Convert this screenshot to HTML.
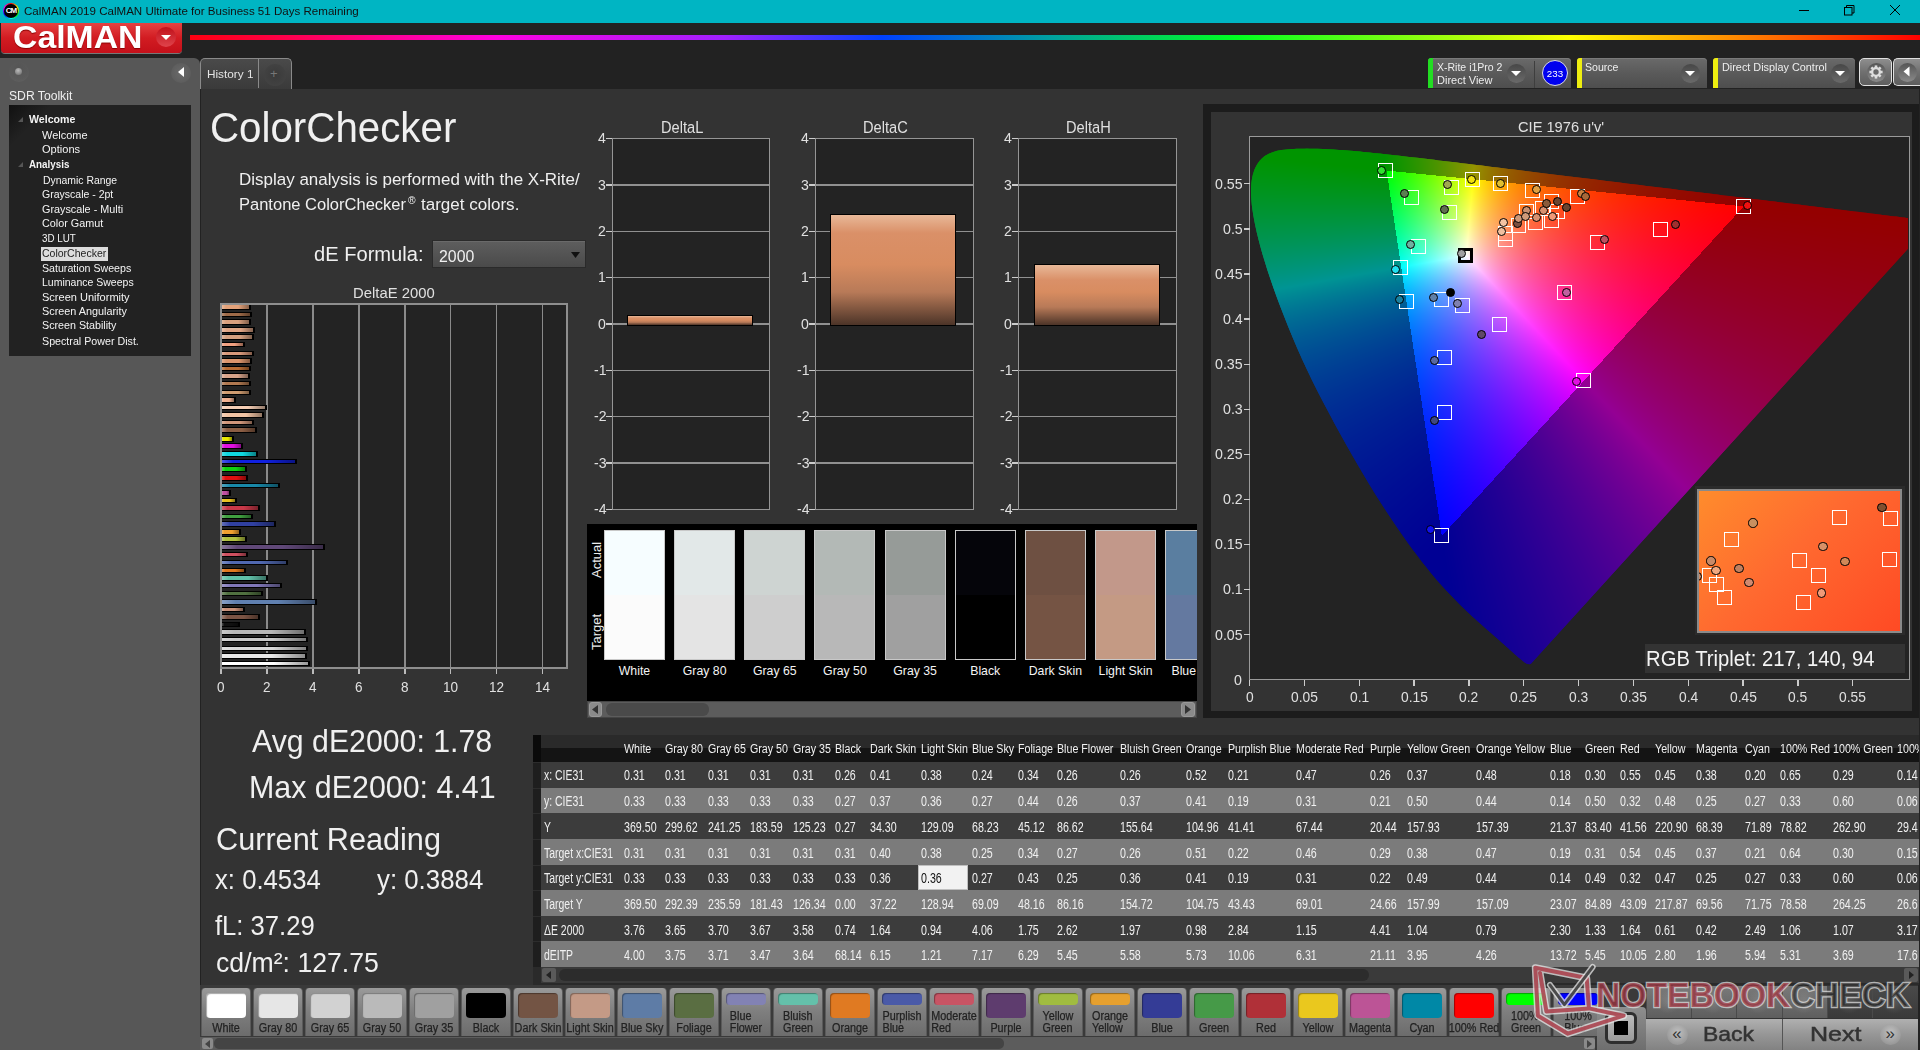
<!DOCTYPE html><html><head><meta charset='utf-8'><style>
*{box-sizing:border-box}
html,body{margin:0;padding:0}
body{width:1920px;height:1050px;overflow:hidden;position:relative;background:#222;font-family:"Liberation Sans",sans-serif;color:#eee}
.a{position:absolute}
.t{position:absolute;white-space:nowrap;line-height:1}
svg.hsf rect{width:10px;height:10px}
</style></head><body><div class="a" style="left:0px;top:0px;width:1920px;height:23px;background:#00b5c3"></div>
<div class="a" style="left:3px;top:3px;width:16px;height:16px;border-radius:50%;background:conic-gradient(#f00,#ff0,#0f0,#0ff,#00f,#f0f,#f00)"></div>
<div class="a" style="left:4px;top:4px;width:14px;height:14px;border-radius:50%;background:#000;color:#fff;font-size:8px;font-weight:bold;text-align:center;line-height:14px;letter-spacing:-1px">CM</div>
<div class="t" style="left:23.75px;top:6.02px;font-size:11.31px;color:#111;transform:scaleX(1.0234);transform-origin:0 0;">CalMAN 2019 CalMAN Ultimate for Business 51 Days Remaining</div>
<div class="a" style="left:1799px;top:10px;width:10px;height:1px;background:#000"></div>
<svg class="a" style="left:1844px;top:5px" width="11" height="11"><rect x="0.5" y="2.5" width="7.5" height="7.5" fill="none" stroke="#000"/><path d="M2.5 2.5V0.5h7.5v7.5h-2" fill="none" stroke="#000"/></svg>
<svg class="a" style="left:1889px;top:4px" width="12" height="12"><path d="M1 1L11 11M11 1L1 11" stroke="#000" stroke-width="1"/></svg>
<div class="a" style="left:0px;top:23px;width:1920px;height:35px;background:#222"></div>
<div class="a" style="left:1px;top:23px;width:181px;height:30px;background:linear-gradient(#e44242,#d21c22 50%,#c4101a);border-radius:0 0 4px 4px;box-shadow:0 1px 0 #777"></div>
<div class="t" style="left:13.10px;top:22.21px;font-size:30.59px;color:#fff;font-weight:bold;transform:scaleX(1.1039);transform-origin:0 0;text-shadow:0 1px 1px #800">CalMAN</div>
<div class="a" style="left:156px;top:27px;width:20px;height:20px;border-radius:50%;background:linear-gradient(#c0101a,#e0444c)"></div>
<svg class="a" style="left:160px;top:34px" width="12" height="8"><path d="M1 1h10L6 6z" fill="#fff"/></svg>
<div class="a" style="left:190px;top:35px;width:1730px;height:5px;background:linear-gradient(90deg,#ff0010 0%,#ff0040 4.6%,#ff00e0 17.7%,#a020ff 30.9%,#0040ff 40%,#00a0a0 49.7%,#00ff20 60.5%,#ffff00 79.8%,#ff8000 90%,#ff0000 100%)"></div>
<div class="a" style="left:0px;top:58px;width:200px;height:992px;background:#575757;border-radius:0 6px 0 0"></div>
<div class="a" style="left:9px;top:62px;width:20px;height:20px;border-radius:50%;background:radial-gradient(circle at 50% 30%,#555 0,#5a5a5a 60%,#626262 100%)"></div>
<div class="a" style="left:15px;top:68px;width:7px;height:7px;border-radius:50%;background:radial-gradient(circle at 45% 35%,#bbb,#666)"></div>
<div class="a" style="left:171px;top:63px;width:20px;height:20px;border-radius:50%;background:radial-gradient(circle,#6a6a6a,#585858)"></div>
<svg class="a" style="left:177px;top:66px" width="8" height="12"><path d="M7 1V11L1 6z" fill="#fff"/></svg>
<div class="t" style="left:9.20px;top:90.31px;font-size:12.15px;color:#eee;transform:scaleX(1.0009);transform-origin:0 0;">SDR Toolkit</div>
<div class="a" style="left:9px;top:105px;width:182px;height:251px;background:linear-gradient(135deg,#111 0,#222 30px,#222 100%)"></div>
<div class="t" style="left:29.10px;top:115.25px;font-size:10.34px;color:#f4f4f4;font-weight:bold;transform:scaleX(1.0268);transform-origin:0 0;">Welcome</div>
<div class="t" style="left:42.10px;top:131.15px;font-size:10.34px;color:#f4f4f4;transform:scaleX(1.0632);transform-origin:0 0;">Welcome</div>
<div class="t" style="left:42.00px;top:144.85px;font-size:10.34px;color:#f4f4f4;transform:scaleX(1.0693);transform-origin:0 0;">Options</div>
<div class="t" style="left:29.00px;top:160.05px;font-size:10.34px;color:#f4f4f4;font-weight:bold;transform:scaleX(0.9505);transform-origin:0 0;">Analysis</div>
<div class="t" style="left:42.50px;top:175.85px;font-size:10.34px;color:#f4f4f4;transform:scaleX(1.0090);transform-origin:0 0;">Dynamic Range</div>
<div class="t" style="left:42.30px;top:189.85px;font-size:10.34px;color:#f4f4f4;transform:scaleX(1.0175);transform-origin:0 0;">Grayscale - 2pt</div>
<div class="t" style="left:42.30px;top:204.85px;font-size:10.34px;color:#f4f4f4;transform:scaleX(1.0459);transform-origin:0 0;">Grayscale - Multi</div>
<div class="t" style="left:42.30px;top:219.45px;font-size:10.34px;color:#f4f4f4;transform:scaleX(1.0465);transform-origin:0 0;">Color Gamut</div>
<div class="t" style="left:42.30px;top:233.75px;font-size:10.34px;color:#f4f4f4;transform:scaleX(0.9493);transform-origin:0 0;">3D LUT</div>
<div class="a" style="left:41px;top:247px;width:67px;height:14px;background:#dcdcdc"></div>
<div class="t" style="left:42.30px;top:248.95px;font-size:10.34px;color:#222;transform:scaleX(1.0178);transform-origin:0 0;">ColorChecker</div>
<div class="t" style="left:42.30px;top:263.65px;font-size:10.34px;color:#f4f4f4;transform:scaleX(1.0292);transform-origin:0 0;">Saturation Sweeps</div>
<div class="t" style="left:42.30px;top:277.95px;font-size:10.34px;color:#f4f4f4;transform:scaleX(1.0166);transform-origin:0 0;">Luminance Sweeps</div>
<div class="t" style="left:42.30px;top:292.55px;font-size:10.34px;color:#f4f4f4;transform:scaleX(1.0677);transform-origin:0 0;">Screen Uniformity</div>
<div class="t" style="left:42.30px;top:307.15px;font-size:10.34px;color:#f4f4f4;transform:scaleX(1.0494);transform-origin:0 0;">Screen Angularity</div>
<div class="t" style="left:42.30px;top:321.45px;font-size:10.34px;color:#f4f4f4;transform:scaleX(1.0362);transform-origin:0 0;">Screen Stability</div>
<div class="t" style="left:42.30px;top:336.75px;font-size:10.34px;color:#f4f4f4;transform:scaleX(1.0348);transform-origin:0 0;">Spectral Power Dist.</div>
<svg class="a" style="left:18px;top:117px" width="6" height="6"><path d="M5 0V5H0z" fill="#555"/></svg>
<svg class="a" style="left:18px;top:162px" width="6" height="6"><path d="M5 0V5H0z" fill="#555"/></svg>
<div class="a" style="left:200px;top:58px;width:92px;height:31px;background:linear-gradient(#4a4a4a,#3a3a3a);border:1px solid #8a8a8a;border-bottom:none;border-radius:5px 5px 0 0"></div>
<div class="a" style="left:258px;top:59px;width:1px;height:29px;background:#8a8a8a"></div>
<div class="a" style="left:264px;top:64px;width:22px;height:22px;border-radius:50%;background:radial-gradient(circle,#3a3a3a,#454545)"></div>
<div class="t" style="left:206.50px;top:68.51px;font-size:11.45px;color:#e4e4e4;transform:scaleX(1.0292);transform-origin:0 0;">History 1</div>
<div class="t" style="left:270px;top:67px;font-size:13px;color:#777;">+</div>
<div class="a" style="left:201px;top:89px;width:1718px;height:961px;background:#333"></div>
<div class="t" style="left:209.60px;top:106.37px;font-size:43.16px;color:#f0f0f0;transform:scaleX(0.9337);transform-origin:0 0;">ColorChecker</div>
<div class="t" style="left:239.40px;top:171.18px;font-size:17.04px;color:#f0f0f0;transform:scaleX(0.9971);transform-origin:0 0;">Display analysis is performed with the X-Rite/</div>
<div class="t" style="left:239.40px;top:195.58px;font-size:17.04px;color:#f0f0f0;transform:scaleX(0.9693);transform-origin:0 0;">Pantone ColorChecker</div>
<div class="t" style="left:408.00px;top:195.53px;font-size:10.47px;color:#f0f0f0;transform:scaleX(0.9838);transform-origin:0 0;">&reg;</div>
<div class="t" style="left:421.30px;top:195.58px;font-size:17.04px;color:#f0f0f0;transform:scaleX(0.9991);transform-origin:0 0;">target colors.</div>
<div class="t" style="left:314.40px;top:244.93px;font-size:19.69px;color:#f0f0f0;transform:scaleX(1.0217);transform-origin:0 0;">dE Formula:</div>
<div class="a" style="left:432px;top:240px;width:154px;height:28px;background:linear-gradient(#5e5e5e,#4a4a4a);border:1px solid #2a2a2a;box-shadow:inset 0 1px 0 #6a6a6a"></div>
<div class="t" style="left:438.50px;top:248.08px;font-size:17.04px;color:#f0f0f0;transform:scaleX(0.9311);transform-origin:0 0;">2000</div>
<svg class="a" style="left:571px;top:252px" width="9" height="6"><path d="M0 0h9L4.5 6z" fill="#111"/></svg>
<div class="t" style="left:353.20px;top:285.00px;font-size:15.36px;color:#e0e0e0;transform:scaleX(0.9660);transform-origin:0 0;">DeltaE 2000</div>
<div class="a" style="left:220px;top:303px;width:348px;height:366px;background:#232323"></div>
<div class="a" style="left:266.19px;top:304px;width:1.5px;height:364px;background:#8a8a8a"></div>
<div class="a" style="left:312.13px;top:304px;width:1.5px;height:364px;background:#8a8a8a"></div>
<div class="a" style="left:358.07px;top:304px;width:1.5px;height:364px;background:#8a8a8a"></div>
<div class="a" style="left:404.01px;top:304px;width:1.5px;height:364px;background:#8a8a8a"></div>
<div class="a" style="left:449.95px;top:304px;width:1.5px;height:364px;background:#8a8a8a"></div>
<div class="a" style="left:495.89px;top:304px;width:1.5px;height:364px;background:#8a8a8a"></div>
<div class="a" style="left:541.83px;top:304px;width:1.5px;height:364px;background:#8a8a8a"></div>
<div class="a" style="left:220.25px;top:668px;width:1.5px;height:6px;background:#bbb"></div>
<div class="t" style="left:217.24px;top:679.74px;font-size:14.25px;color:#e0e0e0;transform:scaleX(0.9500);transform-origin:0 0">0</div>
<div class="a" style="left:266.19px;top:668px;width:1.5px;height:6px;background:#bbb"></div>
<div class="t" style="left:263.18px;top:679.74px;font-size:14.25px;color:#e0e0e0;transform:scaleX(0.9500);transform-origin:0 0">2</div>
<div class="a" style="left:312.13px;top:668px;width:1.5px;height:6px;background:#bbb"></div>
<div class="t" style="left:309.12px;top:679.74px;font-size:14.25px;color:#e0e0e0;transform:scaleX(0.9500);transform-origin:0 0">4</div>
<div class="a" style="left:358.07px;top:668px;width:1.5px;height:6px;background:#bbb"></div>
<div class="t" style="left:355.06px;top:679.74px;font-size:14.25px;color:#e0e0e0;transform:scaleX(0.9500);transform-origin:0 0">6</div>
<div class="a" style="left:404.01px;top:668px;width:1.5px;height:6px;background:#bbb"></div>
<div class="t" style="left:401.00px;top:679.74px;font-size:14.25px;color:#e0e0e0;transform:scaleX(0.9500);transform-origin:0 0">8</div>
<div class="a" style="left:449.95px;top:668px;width:1.5px;height:6px;background:#bbb"></div>
<div class="t" style="left:443.17px;top:679.74px;font-size:14.25px;color:#e0e0e0;transform:scaleX(0.9500);transform-origin:0 0">10</div>
<div class="a" style="left:495.89px;top:668px;width:1.5px;height:6px;background:#bbb"></div>
<div class="t" style="left:489.11px;top:679.74px;font-size:14.25px;color:#e0e0e0;transform:scaleX(0.9500);transform-origin:0 0">12</div>
<div class="a" style="left:541.83px;top:668px;width:1.5px;height:6px;background:#bbb"></div>
<div class="t" style="left:535.05px;top:679.74px;font-size:14.25px;color:#e0e0e0;transform:scaleX(0.9500);transform-origin:0 0">14</div>
<div class="a" style="left:222px;top:304.46px;width:29.3px;height:5.5px;background:#000"></div>
<div class="a" style="left:222px;top:305.46px;width:27.3px;height:3.5px;background:#e3a27a"><div style="position:absolute;inset:0;background:linear-gradient(90deg,rgba(255,255,255,.25),rgba(255,255,255,0) 15%,rgba(0,0,0,0) 60%,rgba(0,0,0,.4))"></div></div>
<div class="a" style="left:222px;top:311.84px;width:30.4px;height:5.5px;background:#000"></div>
<div class="a" style="left:222px;top:312.84px;width:28.4px;height:3.5px;background:#9e6a48"><div style="position:absolute;inset:0;background:linear-gradient(90deg,rgba(255,255,255,.25),rgba(255,255,255,0) 15%,rgba(0,0,0,0) 60%,rgba(0,0,0,.4))"></div></div>
<div class="a" style="left:222px;top:319.22px;width:29.3px;height:5.5px;background:#000"></div>
<div class="a" style="left:222px;top:320.22px;width:27.3px;height:3.5px;background:#d9a07e"><div style="position:absolute;inset:0;background:linear-gradient(90deg,rgba(255,255,255,.25),rgba(255,255,255,0) 15%,rgba(0,0,0,0) 60%,rgba(0,0,0,.4))"></div></div>
<div class="a" style="left:222px;top:327.00px;width:33.4px;height:5.5px;background:#000"></div>
<div class="a" style="left:222px;top:328.00px;width:31.4px;height:3.5px;background:#dfa585"><div style="position:absolute;inset:0;background:linear-gradient(90deg,rgba(255,255,255,.25),rgba(255,255,255,0) 15%,rgba(0,0,0,0) 60%,rgba(0,0,0,.4))"></div></div>
<div class="a" style="left:222px;top:334.38px;width:32.0px;height:5.5px;background:#000"></div>
<div class="a" style="left:222px;top:335.38px;width:30.0px;height:3.5px;background:#d4a080"><div style="position:absolute;inset:0;background:linear-gradient(90deg,rgba(255,255,255,.25),rgba(255,255,255,0) 15%,rgba(0,0,0,0) 60%,rgba(0,0,0,.4))"></div></div>
<div class="a" style="left:222px;top:341.76px;width:23.1px;height:5.5px;background:#000"></div>
<div class="a" style="left:222px;top:342.76px;width:21.1px;height:3.5px;background:#f2a080"><div style="position:absolute;inset:0;background:linear-gradient(90deg,rgba(255,255,255,.25),rgba(255,255,255,0) 15%,rgba(0,0,0,0) 60%,rgba(0,0,0,.4))"></div></div>
<div class="a" style="left:222px;top:350.77px;width:32.0px;height:5.5px;background:#000"></div>
<div class="a" style="left:222px;top:351.77px;width:30.0px;height:3.5px;background:#d8987a"><div style="position:absolute;inset:0;background:linear-gradient(90deg,rgba(255,255,255,.25),rgba(255,255,255,0) 15%,rgba(0,0,0,0) 60%,rgba(0,0,0,.4))"></div></div>
<div class="a" style="left:222px;top:358.15px;width:30.2px;height:5.5px;background:#000"></div>
<div class="a" style="left:222px;top:359.15px;width:28.2px;height:3.5px;background:#dc956c"><div style="position:absolute;inset:0;background:linear-gradient(90deg,rgba(255,255,255,.25),rgba(255,255,255,0) 15%,rgba(0,0,0,0) 60%,rgba(0,0,0,.4))"></div></div>
<div class="a" style="left:222px;top:365.53px;width:29.3px;height:5.5px;background:#000"></div>
<div class="a" style="left:222px;top:366.53px;width:27.3px;height:3.5px;background:#b86c34"><div style="position:absolute;inset:0;background:linear-gradient(90deg,rgba(255,255,255,.25),rgba(255,255,255,0) 15%,rgba(0,0,0,0) 60%,rgba(0,0,0,.4))"></div></div>
<div class="a" style="left:222px;top:373.32px;width:28.1px;height:5.5px;background:#000"></div>
<div class="a" style="left:222px;top:374.32px;width:26.1px;height:3.5px;background:#d8a48a"><div style="position:absolute;inset:0;background:linear-gradient(90deg,rgba(255,255,255,.25),rgba(255,255,255,0) 15%,rgba(0,0,0,0) 60%,rgba(0,0,0,.4))"></div></div>
<div class="a" style="left:222px;top:380.69px;width:29.3px;height:5.5px;background:#000"></div>
<div class="a" style="left:222px;top:381.69px;width:27.3px;height:3.5px;background:#b07850"><div style="position:absolute;inset:0;background:linear-gradient(90deg,rgba(255,255,255,.25),rgba(255,255,255,0) 15%,rgba(0,0,0,0) 60%,rgba(0,0,0,.4))"></div></div>
<div class="a" style="left:222px;top:389.71px;width:29.3px;height:5.5px;background:#000"></div>
<div class="a" style="left:222px;top:390.71px;width:27.3px;height:3.5px;background:#d09c70"><div style="position:absolute;inset:0;background:linear-gradient(90deg,rgba(255,255,255,.25),rgba(255,255,255,0) 15%,rgba(0,0,0,0) 60%,rgba(0,0,0,.4))"></div></div>
<div class="a" style="left:222px;top:397.09px;width:14.1px;height:5.5px;background:#000"></div>
<div class="a" style="left:222px;top:398.09px;width:12.1px;height:3.5px;background:#f0b090"><div style="position:absolute;inset:0;background:linear-gradient(90deg,rgba(255,255,255,.25),rgba(255,255,255,0) 15%,rgba(0,0,0,0) 60%,rgba(0,0,0,.4))"></div></div>
<div class="a" style="left:222px;top:404.87px;width:44.9px;height:5.5px;background:#000"></div>
<div class="a" style="left:222px;top:405.87px;width:42.9px;height:3.5px;background:#f4cdb4"><div style="position:absolute;inset:0;background:linear-gradient(90deg,rgba(255,255,255,.25),rgba(255,255,255,0) 15%,rgba(0,0,0,0) 60%,rgba(0,0,0,.4))"></div></div>
<div class="a" style="left:222px;top:412.25px;width:41.9px;height:5.5px;background:#000"></div>
<div class="a" style="left:222px;top:413.25px;width:39.9px;height:3.5px;background:#f2c4a4"><div style="position:absolute;inset:0;background:linear-gradient(90deg,rgba(255,255,255,.25),rgba(255,255,255,0) 15%,rgba(0,0,0,0) 60%,rgba(0,0,0,.4))"></div></div>
<div class="a" style="left:222px;top:419.63px;width:32.0px;height:5.5px;background:#000"></div>
<div class="a" style="left:222px;top:420.63px;width:30.0px;height:3.5px;background:#d0967a"><div style="position:absolute;inset:0;background:linear-gradient(90deg,rgba(255,255,255,.25),rgba(255,255,255,0) 15%,rgba(0,0,0,0) 60%,rgba(0,0,0,.4))"></div></div>
<div class="a" style="left:222px;top:427.00px;width:35.2px;height:5.5px;background:#000"></div>
<div class="a" style="left:222px;top:428.00px;width:33.2px;height:3.5px;background:#8c5e44"><div style="position:absolute;inset:0;background:linear-gradient(90deg,rgba(255,255,255,.25),rgba(255,255,255,0) 15%,rgba(0,0,0,0) 60%,rgba(0,0,0,.4))"></div></div>
<div class="a" style="left:222px;top:436.02px;width:12.0px;height:5.5px;background:#000"></div>
<div class="a" style="left:222px;top:437.02px;width:10.0px;height:3.5px;background:#e8e800"><div style="position:absolute;inset:0;background:linear-gradient(90deg,rgba(255,255,255,.25),rgba(255,255,255,0) 15%,rgba(0,0,0,0) 60%,rgba(0,0,0,.4))"></div></div>
<div class="a" style="left:222px;top:443.40px;width:21.2px;height:5.5px;background:#000"></div>
<div class="a" style="left:222px;top:444.40px;width:19.2px;height:3.5px;background:#e010e0"><div style="position:absolute;inset:0;background:linear-gradient(90deg,rgba(255,255,255,.25),rgba(255,255,255,0) 15%,rgba(0,0,0,0) 60%,rgba(0,0,0,.4))"></div></div>
<div class="a" style="left:222px;top:451.18px;width:35.9px;height:5.5px;background:#000"></div>
<div class="a" style="left:222px;top:452.18px;width:33.9px;height:3.5px;background:#10d8e0"><div style="position:absolute;inset:0;background:linear-gradient(90deg,rgba(255,255,255,.25),rgba(255,255,255,0) 15%,rgba(0,0,0,0) 60%,rgba(0,0,0,.4))"></div></div>
<div class="a" style="left:222px;top:458.97px;width:74.5px;height:5.5px;background:#000"></div>
<div class="a" style="left:222px;top:459.97px;width:72.5px;height:3.5px;background:#1020e0"><div style="position:absolute;inset:0;background:linear-gradient(90deg,rgba(255,255,255,.25),rgba(255,255,255,0) 15%,rgba(0,0,0,0) 60%,rgba(0,0,0,.4))"></div></div>
<div class="a" style="left:222px;top:466.35px;width:25.3px;height:5.5px;background:#000"></div>
<div class="a" style="left:222px;top:467.35px;width:23.3px;height:3.5px;background:#10d010"><div style="position:absolute;inset:0;background:linear-gradient(90deg,rgba(255,255,255,.25),rgba(255,255,255,0) 15%,rgba(0,0,0,0) 60%,rgba(0,0,0,.4))"></div></div>
<div class="a" style="left:222px;top:475.36px;width:25.6px;height:5.5px;background:#000"></div>
<div class="a" style="left:222px;top:476.36px;width:23.6px;height:3.5px;background:#e01010"><div style="position:absolute;inset:0;background:linear-gradient(90deg,rgba(255,255,255,.25),rgba(255,255,255,0) 15%,rgba(0,0,0,0) 60%,rgba(0,0,0,.4))"></div></div>
<div class="a" style="left:222px;top:482.74px;width:57.5px;height:5.5px;background:#000"></div>
<div class="a" style="left:222px;top:483.74px;width:55.5px;height:3.5px;background:#1888a8"><div style="position:absolute;inset:0;background:linear-gradient(90deg,rgba(255,255,255,.25),rgba(255,255,255,0) 15%,rgba(0,0,0,0) 60%,rgba(0,0,0,.4))"></div></div>
<div class="a" style="left:222px;top:490.12px;width:8.8px;height:5.5px;background:#000"></div>
<div class="a" style="left:222px;top:491.12px;width:6.8px;height:3.5px;background:#c050a0"><div style="position:absolute;inset:0;background:linear-gradient(90deg,rgba(255,255,255,.25),rgba(255,255,255,0) 15%,rgba(0,0,0,0) 60%,rgba(0,0,0,.4))"></div></div>
<div class="a" style="left:222px;top:497.91px;width:15.2px;height:5.5px;background:#000"></div>
<div class="a" style="left:222px;top:498.91px;width:13.2px;height:3.5px;background:#e8c020"><div style="position:absolute;inset:0;background:linear-gradient(90deg,rgba(255,255,255,.25),rgba(255,255,255,0) 15%,rgba(0,0,0,0) 60%,rgba(0,0,0,.4))"></div></div>
<div class="a" style="left:222px;top:505.28px;width:38.2px;height:5.5px;background:#000"></div>
<div class="a" style="left:222px;top:506.28px;width:36.2px;height:3.5px;background:#c83848"><div style="position:absolute;inset:0;background:linear-gradient(90deg,rgba(255,255,255,.25),rgba(255,255,255,0) 15%,rgba(0,0,0,0) 60%,rgba(0,0,0,.4))"></div></div>
<div class="a" style="left:222px;top:513.89px;width:30.6px;height:5.5px;background:#000"></div>
<div class="a" style="left:222px;top:514.89px;width:28.6px;height:3.5px;background:#40a040"><div style="position:absolute;inset:0;background:linear-gradient(90deg,rgba(255,255,255,.25),rgba(255,255,255,0) 15%,rgba(0,0,0,0) 60%,rgba(0,0,0,.4))"></div></div>
<div class="a" style="left:222px;top:521.27px;width:53.8px;height:5.5px;background:#000"></div>
<div class="a" style="left:222px;top:522.27px;width:51.8px;height:3.5px;background:#3040a0"><div style="position:absolute;inset:0;background:linear-gradient(90deg,rgba(255,255,255,.25),rgba(255,255,255,0) 15%,rgba(0,0,0,0) 60%,rgba(0,0,0,.4))"></div></div>
<div class="a" style="left:222px;top:529.05px;width:19.4px;height:5.5px;background:#000"></div>
<div class="a" style="left:222px;top:530.05px;width:17.4px;height:3.5px;background:#f0a030"><div style="position:absolute;inset:0;background:linear-gradient(90deg,rgba(255,255,255,.25),rgba(255,255,255,0) 15%,rgba(0,0,0,0) 60%,rgba(0,0,0,.4))"></div></div>
<div class="a" style="left:222px;top:536.43px;width:25.3px;height:5.5px;background:#000"></div>
<div class="a" style="left:222px;top:537.43px;width:23.3px;height:3.5px;background:#b0c040"><div style="position:absolute;inset:0;background:linear-gradient(90deg,rgba(255,255,255,.25),rgba(255,255,255,0) 15%,rgba(0,0,0,0) 60%,rgba(0,0,0,.4))"></div></div>
<div class="a" style="left:222px;top:544.22px;width:103.0px;height:5.5px;background:#000"></div>
<div class="a" style="left:222px;top:545.22px;width:101.0px;height:3.5px;background:#604878"><div style="position:absolute;inset:0;background:linear-gradient(90deg,rgba(255,255,255,.25),rgba(255,255,255,0) 15%,rgba(0,0,0,0) 60%,rgba(0,0,0,.4))"></div></div>
<div class="a" style="left:222px;top:551.59px;width:26.3px;height:5.5px;background:#000"></div>
<div class="a" style="left:222px;top:552.59px;width:24.3px;height:3.5px;background:#d05060"><div style="position:absolute;inset:0;background:linear-gradient(90deg,rgba(255,255,255,.25),rgba(255,255,255,0) 15%,rgba(0,0,0,0) 60%,rgba(0,0,0,.4))"></div></div>
<div class="a" style="left:222px;top:559.79px;width:66.0px;height:5.5px;background:#000"></div>
<div class="a" style="left:222px;top:560.79px;width:64.0px;height:3.5px;background:#5068b0"><div style="position:absolute;inset:0;background:linear-gradient(90deg,rgba(255,255,255,.25),rgba(255,255,255,0) 15%,rgba(0,0,0,0) 60%,rgba(0,0,0,.4))"></div></div>
<div class="a" style="left:222px;top:567.99px;width:23.7px;height:5.5px;background:#000"></div>
<div class="a" style="left:222px;top:568.99px;width:21.7px;height:3.5px;background:#e07820"><div style="position:absolute;inset:0;background:linear-gradient(90deg,rgba(255,255,255,.25),rgba(255,255,255,0) 15%,rgba(0,0,0,0) 60%,rgba(0,0,0,.4))"></div></div>
<div class="a" style="left:222px;top:575.36px;width:46.0px;height:5.5px;background:#000"></div>
<div class="a" style="left:222px;top:576.36px;width:44.0px;height:3.5px;background:#60c0a8"><div style="position:absolute;inset:0;background:linear-gradient(90deg,rgba(255,255,255,.25),rgba(255,255,255,0) 15%,rgba(0,0,0,0) 60%,rgba(0,0,0,.4))"></div></div>
<div class="a" style="left:222px;top:582.74px;width:60.3px;height:5.5px;background:#000"></div>
<div class="a" style="left:222px;top:583.74px;width:58.3px;height:3.5px;background:#8078b8"><div style="position:absolute;inset:0;background:linear-gradient(90deg,rgba(255,255,255,.25),rgba(255,255,255,0) 15%,rgba(0,0,0,0) 60%,rgba(0,0,0,.4))"></div></div>
<div class="a" style="left:222px;top:590.53px;width:40.7px;height:5.5px;background:#000"></div>
<div class="a" style="left:222px;top:591.53px;width:38.7px;height:3.5px;background:#507040"><div style="position:absolute;inset:0;background:linear-gradient(90deg,rgba(255,255,255,.25),rgba(255,255,255,0) 15%,rgba(0,0,0,0) 60%,rgba(0,0,0,.4))"></div></div>
<div class="a" style="left:222px;top:599.14px;width:94.5px;height:5.5px;background:#000"></div>
<div class="a" style="left:222px;top:600.14px;width:92.5px;height:3.5px;background:#6080b0"><div style="position:absolute;inset:0;background:linear-gradient(90deg,rgba(255,255,255,.25),rgba(255,255,255,0) 15%,rgba(0,0,0,0) 60%,rgba(0,0,0,.4))"></div></div>
<div class="a" style="left:222px;top:606.92px;width:23.3px;height:5.5px;background:#000"></div>
<div class="a" style="left:222px;top:607.92px;width:21.3px;height:3.5px;background:#c89078"><div style="position:absolute;inset:0;background:linear-gradient(90deg,rgba(255,255,255,.25),rgba(255,255,255,0) 15%,rgba(0,0,0,0) 60%,rgba(0,0,0,.4))"></div></div>
<div class="a" style="left:222px;top:614.30px;width:37.8px;height:5.5px;background:#000"></div>
<div class="a" style="left:222px;top:615.30px;width:35.8px;height:3.5px;background:#7c5444"><div style="position:absolute;inset:0;background:linear-gradient(90deg,rgba(255,255,255,.25),rgba(255,255,255,0) 15%,rgba(0,0,0,0) 60%,rgba(0,0,0,.4))"></div></div>
<div class="a" style="left:222px;top:621.68px;width:17.5px;height:5.5px;background:#000"></div>
<div class="a" style="left:222px;top:622.68px;width:15.5px;height:3.5px;background:#101010"><div style="position:absolute;inset:0;background:linear-gradient(90deg,rgba(255,255,255,.25),rgba(255,255,255,0) 15%,rgba(0,0,0,0) 60%,rgba(0,0,0,.4))"></div></div>
<div class="a" style="left:222px;top:629.46px;width:83.7px;height:5.5px;background:#000"></div>
<div class="a" style="left:222px;top:630.46px;width:81.7px;height:3.5px;background:#b8b8b8"><div style="position:absolute;inset:0;background:linear-gradient(90deg,rgba(255,255,255,.25),rgba(255,255,255,0) 15%,rgba(0,0,0,0) 60%,rgba(0,0,0,.4))"></div></div>
<div class="a" style="left:222px;top:636.84px;width:86.0px;height:5.5px;background:#000"></div>
<div class="a" style="left:222px;top:637.84px;width:84.0px;height:3.5px;background:#c8c8c8"><div style="position:absolute;inset:0;background:linear-gradient(90deg,rgba(255,255,255,.25),rgba(255,255,255,0) 15%,rgba(0,0,0,0) 60%,rgba(0,0,0,.4))"></div></div>
<div class="a" style="left:222px;top:645.86px;width:86.0px;height:5.5px;background:#000"></div>
<div class="a" style="left:222px;top:646.86px;width:84.0px;height:3.5px;background:#d8d8d8"><div style="position:absolute;inset:0;background:linear-gradient(90deg,rgba(255,255,255,.25),rgba(255,255,255,0) 15%,rgba(0,0,0,0) 60%,rgba(0,0,0,.4))"></div></div>
<div class="a" style="left:222px;top:653.23px;width:84.6px;height:5.5px;background:#000"></div>
<div class="a" style="left:222px;top:654.23px;width:82.6px;height:3.5px;background:#e8e8e8"><div style="position:absolute;inset:0;background:linear-gradient(90deg,rgba(255,255,255,.25),rgba(255,255,255,0) 15%,rgba(0,0,0,0) 60%,rgba(0,0,0,.4))"></div></div>
<div class="a" style="left:222px;top:660.61px;width:87.8px;height:5.5px;background:#000"></div>
<div class="a" style="left:222px;top:661.61px;width:85.8px;height:3.5px;background:#ffffff"><div style="position:absolute;inset:0;background:linear-gradient(90deg,rgba(255,255,255,.25),rgba(255,255,255,0) 15%,rgba(0,0,0,0) 60%,rgba(0,0,0,.4))"></div></div>
<div class="a" style="left:220px;top:303px;width:348px;height:366px;border:2px solid #8e8e8e"></div>
<div class="t" style="left:660.63px;top:119.72px;font-size:15.92px;color:#e0e0e0;transform:scaleX(0.9200);transform-origin:0 0">DeltaL</div>
<div class="a" style="left:612px;top:138px;width:158px;height:372px;background:#232323;border:1px solid #959595"></div>
<div class="a" style="left:612px;top:184.30px;width:157px;height:1.4px;background:#909090"></div>
<div class="a" style="left:612px;top:230.60px;width:157px;height:1.4px;background:#909090"></div>
<div class="a" style="left:612px;top:277.00px;width:157px;height:1.4px;background:#909090"></div>
<div class="a" style="left:612px;top:323.30px;width:157px;height:1.4px;background:#909090"></div>
<div class="a" style="left:612px;top:369.70px;width:157px;height:1.4px;background:#909090"></div>
<div class="a" style="left:612px;top:416.00px;width:157px;height:1.4px;background:#909090"></div>
<div class="a" style="left:612px;top:462.30px;width:157px;height:1.4px;background:#909090"></div>
<div class="a" style="left:606px;top:138.00px;width:6px;height:1.4px;background:#ccc"></div>
<div class="t" style="left:598.39px;top:131.47px;font-size:14.80px;color:#e0e0e0;transform:scaleX(0.9500);transform-origin:0 0">4</div>
<div class="a" style="left:606px;top:184.30px;width:6px;height:1.4px;background:#ccc"></div>
<div class="t" style="left:598.39px;top:177.77px;font-size:14.80px;color:#e0e0e0;transform:scaleX(0.9500);transform-origin:0 0">3</div>
<div class="a" style="left:606px;top:230.60px;width:6px;height:1.4px;background:#ccc"></div>
<div class="t" style="left:598.39px;top:224.07px;font-size:14.80px;color:#e0e0e0;transform:scaleX(0.9500);transform-origin:0 0">2</div>
<div class="a" style="left:606px;top:277.00px;width:6px;height:1.4px;background:#ccc"></div>
<div class="t" style="left:598.39px;top:270.47px;font-size:14.80px;color:#e0e0e0;transform:scaleX(0.9500);transform-origin:0 0">1</div>
<div class="a" style="left:606px;top:323.30px;width:6px;height:1.4px;background:#ccc"></div>
<div class="t" style="left:598.39px;top:316.77px;font-size:14.80px;color:#e0e0e0;transform:scaleX(0.9500);transform-origin:0 0">0</div>
<div class="a" style="left:606px;top:369.70px;width:6px;height:1.4px;background:#ccc"></div>
<div class="t" style="left:593.68px;top:363.17px;font-size:14.80px;color:#e0e0e0;transform:scaleX(0.9500);transform-origin:0 0">-1</div>
<div class="a" style="left:606px;top:416.00px;width:6px;height:1.4px;background:#ccc"></div>
<div class="t" style="left:593.68px;top:409.47px;font-size:14.80px;color:#e0e0e0;transform:scaleX(0.9500);transform-origin:0 0">-2</div>
<div class="a" style="left:606px;top:462.30px;width:6px;height:1.4px;background:#ccc"></div>
<div class="t" style="left:593.68px;top:455.77px;font-size:14.80px;color:#e0e0e0;transform:scaleX(0.9500);transform-origin:0 0">-3</div>
<div class="a" style="left:606px;top:508.60px;width:6px;height:1.4px;background:#ccc"></div>
<div class="t" style="left:593.68px;top:502.07px;font-size:14.80px;color:#e0e0e0;transform:scaleX(0.9500);transform-origin:0 0">-4</div>
<div class="a" style="left:627px;top:315px;width:126px;height:10.5px;border:1.6px solid #000;background:linear-gradient(#e8b898 0,#da9068 2px,#d88c60 45%,#b87a58 70%,#4c3428 100%)"></div>
<div class="t" style="left:862.51px;top:119.72px;font-size:15.92px;color:#e0e0e0;transform:scaleX(0.9200);transform-origin:0 0">DeltaC</div>
<div class="a" style="left:815px;top:138px;width:159px;height:372px;background:#232323;border:1px solid #959595"></div>
<div class="a" style="left:815px;top:184.30px;width:158px;height:1.4px;background:#909090"></div>
<div class="a" style="left:815px;top:230.60px;width:158px;height:1.4px;background:#909090"></div>
<div class="a" style="left:815px;top:277.00px;width:158px;height:1.4px;background:#909090"></div>
<div class="a" style="left:815px;top:323.30px;width:158px;height:1.4px;background:#909090"></div>
<div class="a" style="left:815px;top:369.70px;width:158px;height:1.4px;background:#909090"></div>
<div class="a" style="left:815px;top:416.00px;width:158px;height:1.4px;background:#909090"></div>
<div class="a" style="left:815px;top:462.30px;width:158px;height:1.4px;background:#909090"></div>
<div class="a" style="left:809px;top:138.00px;width:6px;height:1.4px;background:#ccc"></div>
<div class="t" style="left:801.39px;top:131.47px;font-size:14.80px;color:#e0e0e0;transform:scaleX(0.9500);transform-origin:0 0">4</div>
<div class="a" style="left:809px;top:184.30px;width:6px;height:1.4px;background:#ccc"></div>
<div class="t" style="left:801.39px;top:177.77px;font-size:14.80px;color:#e0e0e0;transform:scaleX(0.9500);transform-origin:0 0">3</div>
<div class="a" style="left:809px;top:230.60px;width:6px;height:1.4px;background:#ccc"></div>
<div class="t" style="left:801.39px;top:224.07px;font-size:14.80px;color:#e0e0e0;transform:scaleX(0.9500);transform-origin:0 0">2</div>
<div class="a" style="left:809px;top:277.00px;width:6px;height:1.4px;background:#ccc"></div>
<div class="t" style="left:801.39px;top:270.47px;font-size:14.80px;color:#e0e0e0;transform:scaleX(0.9500);transform-origin:0 0">1</div>
<div class="a" style="left:809px;top:323.30px;width:6px;height:1.4px;background:#ccc"></div>
<div class="t" style="left:801.39px;top:316.77px;font-size:14.80px;color:#e0e0e0;transform:scaleX(0.9500);transform-origin:0 0">0</div>
<div class="a" style="left:809px;top:369.70px;width:6px;height:1.4px;background:#ccc"></div>
<div class="t" style="left:796.68px;top:363.17px;font-size:14.80px;color:#e0e0e0;transform:scaleX(0.9500);transform-origin:0 0">-1</div>
<div class="a" style="left:809px;top:416.00px;width:6px;height:1.4px;background:#ccc"></div>
<div class="t" style="left:796.68px;top:409.47px;font-size:14.80px;color:#e0e0e0;transform:scaleX(0.9500);transform-origin:0 0">-2</div>
<div class="a" style="left:809px;top:462.30px;width:6px;height:1.4px;background:#ccc"></div>
<div class="t" style="left:796.68px;top:455.77px;font-size:14.80px;color:#e0e0e0;transform:scaleX(0.9500);transform-origin:0 0">-3</div>
<div class="a" style="left:809px;top:508.60px;width:6px;height:1.4px;background:#ccc"></div>
<div class="t" style="left:796.68px;top:502.07px;font-size:14.80px;color:#e0e0e0;transform:scaleX(0.9500);transform-origin:0 0">-4</div>
<div class="a" style="left:830px;top:213.5px;width:126px;height:112.0px;border:1.6px solid #000;background:linear-gradient(#e8b898 0,#da9068 18px,#d88c60 45%,#b87a58 70%,#4c3428 100%)"></div>
<div class="t" style="left:1065.61px;top:119.72px;font-size:15.92px;color:#e0e0e0;transform:scaleX(0.9200);transform-origin:0 0">DeltaH</div>
<div class="a" style="left:1018px;top:138px;width:159px;height:372px;background:#232323;border:1px solid #959595"></div>
<div class="a" style="left:1018px;top:184.30px;width:158px;height:1.4px;background:#909090"></div>
<div class="a" style="left:1018px;top:230.60px;width:158px;height:1.4px;background:#909090"></div>
<div class="a" style="left:1018px;top:277.00px;width:158px;height:1.4px;background:#909090"></div>
<div class="a" style="left:1018px;top:323.30px;width:158px;height:1.4px;background:#909090"></div>
<div class="a" style="left:1018px;top:369.70px;width:158px;height:1.4px;background:#909090"></div>
<div class="a" style="left:1018px;top:416.00px;width:158px;height:1.4px;background:#909090"></div>
<div class="a" style="left:1018px;top:462.30px;width:158px;height:1.4px;background:#909090"></div>
<div class="a" style="left:1012px;top:138.00px;width:6px;height:1.4px;background:#ccc"></div>
<div class="t" style="left:1004.39px;top:131.47px;font-size:14.80px;color:#e0e0e0;transform:scaleX(0.9500);transform-origin:0 0">4</div>
<div class="a" style="left:1012px;top:184.30px;width:6px;height:1.4px;background:#ccc"></div>
<div class="t" style="left:1004.39px;top:177.77px;font-size:14.80px;color:#e0e0e0;transform:scaleX(0.9500);transform-origin:0 0">3</div>
<div class="a" style="left:1012px;top:230.60px;width:6px;height:1.4px;background:#ccc"></div>
<div class="t" style="left:1004.39px;top:224.07px;font-size:14.80px;color:#e0e0e0;transform:scaleX(0.9500);transform-origin:0 0">2</div>
<div class="a" style="left:1012px;top:277.00px;width:6px;height:1.4px;background:#ccc"></div>
<div class="t" style="left:1004.39px;top:270.47px;font-size:14.80px;color:#e0e0e0;transform:scaleX(0.9500);transform-origin:0 0">1</div>
<div class="a" style="left:1012px;top:323.30px;width:6px;height:1.4px;background:#ccc"></div>
<div class="t" style="left:1004.39px;top:316.77px;font-size:14.80px;color:#e0e0e0;transform:scaleX(0.9500);transform-origin:0 0">0</div>
<div class="a" style="left:1012px;top:369.70px;width:6px;height:1.4px;background:#ccc"></div>
<div class="t" style="left:999.68px;top:363.17px;font-size:14.80px;color:#e0e0e0;transform:scaleX(0.9500);transform-origin:0 0">-1</div>
<div class="a" style="left:1012px;top:416.00px;width:6px;height:1.4px;background:#ccc"></div>
<div class="t" style="left:999.68px;top:409.47px;font-size:14.80px;color:#e0e0e0;transform:scaleX(0.9500);transform-origin:0 0">-2</div>
<div class="a" style="left:1012px;top:462.30px;width:6px;height:1.4px;background:#ccc"></div>
<div class="t" style="left:999.68px;top:455.77px;font-size:14.80px;color:#e0e0e0;transform:scaleX(0.9500);transform-origin:0 0">-3</div>
<div class="a" style="left:1012px;top:508.60px;width:6px;height:1.4px;background:#ccc"></div>
<div class="t" style="left:999.68px;top:502.07px;font-size:14.80px;color:#e0e0e0;transform:scaleX(0.9500);transform-origin:0 0">-4</div>
<div class="a" style="left:1034px;top:264px;width:126px;height:61.5px;border:1.6px solid #000;background:linear-gradient(#e8b898 0,#da9068 15px,#d88c60 45%,#b87a58 70%,#4c3428 100%)"></div>
<div class="a" style="left:587px;top:524px;width:610px;height:177px;background:#000"></div>
<div class="t" style="left:590px;top:578px;font-size:13px;color:#eee;transform:rotate(-90deg);transform-origin:0 0;width:40px">Actual</div>
<div class="t" style="left:590px;top:650px;font-size:13px;color:#eee;transform:rotate(-90deg);transform-origin:0 0;width:40px">Target</div>
<div class="a" style="left:0;top:0;width:1920px;height:1050px;clip-path:inset(524px 723px 349px 587px)">
<div class="a" style="left:604.00px;top:530px;width:61px;height:130px;border:1px solid #c8c8c8;background:linear-gradient(#f6fdff 0,#f6fdff 50%,#fbfbfb 50%,#fbfbfb 100%)"></div>
<div class="t" style="left:618.78px;top:665.40px;font-size:12.29px;color:#f4f4f4;transform:scaleX(1.0000);transform-origin:0 0">White</div>
<div class="a" style="left:674.15px;top:530px;width:61px;height:130px;border:1px solid #c8c8c8;background:linear-gradient(#e2e8e8 0,#e2e8e8 50%,#e4e4e4 50%,#e4e4e4 100%)"></div>
<div class="t" style="left:682.79px;top:665.40px;font-size:12.29px;color:#f4f4f4;transform:scaleX(1.0000);transform-origin:0 0">Gray 80</div>
<div class="a" style="left:744.30px;top:530px;width:61px;height:130px;border:1px solid #c8c8c8;background:linear-gradient(#ced4d2 0,#ced4d2 50%,#cecece 50%,#cecece 100%)"></div>
<div class="t" style="left:752.94px;top:665.40px;font-size:12.29px;color:#f4f4f4;transform:scaleX(1.0000);transform-origin:0 0">Gray 65</div>
<div class="a" style="left:814.45px;top:530px;width:61px;height:130px;border:1px solid #c8c8c8;background:linear-gradient(#b3b9b6 0,#b3b9b6 50%,#b8b8b8 50%,#b8b8b8 100%)"></div>
<div class="t" style="left:823.09px;top:665.40px;font-size:12.29px;color:#f4f4f4;transform:scaleX(1.0000);transform-origin:0 0">Gray 50</div>
<div class="a" style="left:884.60px;top:530px;width:61px;height:130px;border:1px solid #c8c8c8;background:linear-gradient(#969b98 0,#969b98 50%,#a0a0a0 50%,#a0a0a0 100%)"></div>
<div class="t" style="left:893.24px;top:665.40px;font-size:12.29px;color:#f4f4f4;transform:scaleX(1.0000);transform-origin:0 0">Gray 35</div>
<div class="a" style="left:954.75px;top:530px;width:61px;height:130px;border:1px solid #c8c8c8;background:linear-gradient(#05050a 0,#05050a 50%,#000000 50%,#000000 100%)"></div>
<div class="t" style="left:970.21px;top:665.40px;font-size:12.29px;color:#f4f4f4;transform:scaleX(1.0000);transform-origin:0 0">Black</div>
<div class="a" style="left:1024.90px;top:530px;width:61px;height:130px;border:1px solid #c8c8c8;background:linear-gradient(#6e5042 0,#6e5042 50%,#755444 50%,#755444 100%)"></div>
<div class="t" style="left:1028.76px;top:665.40px;font-size:12.29px;color:#f4f4f4;transform:scaleX(1.0000);transform-origin:0 0">Dark Skin</div>
<div class="a" style="left:1095.05px;top:530px;width:61px;height:130px;border:1px solid #c8c8c8;background:linear-gradient(#c2988a 0,#c2988a 50%,#c49a84 50%,#c49a84 100%)"></div>
<div class="t" style="left:1098.56px;top:665.40px;font-size:12.29px;color:#f4f4f4;transform:scaleX(1.0000);transform-origin:0 0">Light Skin</div>
<div class="a" style="left:1165.20px;top:530px;width:61px;height:130px;border:1px solid #c8c8c8;background:linear-gradient(#5a7ea0 0,#5a7ea0 50%,#6479a0 50%,#6479a0 100%)"></div>
<div class="t" style="left:1171.44px;top:665.40px;font-size:12.29px;color:#f4f4f4;transform:scaleX(1.0000);transform-origin:0 0">Blue Sky</div>
</div>
<div class="a" style="left:1197px;top:524px;width:6px;height:194px;background:#333"></div>
<div class="a" style="left:587px;top:701px;width:610px;height:17px;background:#5c5c5c;border:1px solid #444"></div>
<div class="a" style="left:606px;top:703px;width:103px;height:13px;border-radius:6px;background:#4a4a4a"></div>
<div class="a" style="left:589px;top:702px;width:13px;height:15px;background:#8a8a8a;border:1px solid #999;border-radius:3px"></div>
<svg class="a" style="left:592px;top:705px" width="7" height="9"><path d="M6 0V9L0 4.5z" fill="#333"/></svg>
<div class="a" style="left:1181px;top:702px;width:14px;height:15px;background:#8a8a8a;border:1px solid #999;border-radius:3px"></div>
<svg class="a" style="left:1185px;top:705px" width="7" height="9"><path d="M0 0V9L6 4.5z" fill="#333"/></svg>
<div class="a" style="left:1203px;top:104px;width:716px;height:614px;background:#1c1c1c"></div>
<div class="a" style="left:1211px;top:112px;width:701px;height:599px;background:#333"></div>
<div class="t" style="left:1518.10px;top:118.90px;font-size:15.36px;color:#e0e0e0;transform:scaleX(0.9529);transform-origin:0 0;">CIE 1976 u'v'</div>
<div class="a" style="left:1249px;top:136px;width:661px;height:544px;background:#232323;border:1.5px solid #9a9a9a"></div>
<svg class="a hsf" style="left:1250px;top:137px" width="658" height="541"><defs><clipPath id="hs"><path d="M281.1 526.5 L281.0 526.5 L281.0 526.6 L280.9 526.6 L280.8 526.7 L280.7 526.8 L280.6 526.8 L280.5 526.9 L280.4 526.9 L280.3 527.0 L280.2 527.0 L280.0 527.1 L279.8 527.1 L279.7 527.1 L279.5 527.2 L279.3 527.2 L279.1 527.2 L278.9 527.2 L278.6 527.1 L278.2 527.0 L277.8 526.9 L277.4 526.8 L276.9 526.7 L276.5 526.5 L276.0 526.3 L275.6 526.0 L275.1 525.7 L274.7 525.4 L274.2 525.0 L273.7 524.6 L273.2 524.2 L272.6 523.8 L272.0 523.3 L271.4 522.8 L270.8 522.3 L270.1 521.7 L269.3 521.1 L268.5 520.4 L267.7 519.6 L266.8 518.9 L265.8 518.0 L264.8 517.2 L263.8 516.3 L262.7 515.3 L261.6 514.3 L260.5 513.3 L259.3 512.2 L258.1 511.1 L256.8 509.9 L255.5 508.7 L254.1 507.5 L252.7 506.2 L251.2 504.9 L249.6 503.5 L248.0 502.1 L246.2 500.5 L244.4 498.9 L242.5 497.3 L240.5 495.5 L238.5 493.7 L236.4 491.9 L234.2 490.0 L232.0 488.0 L229.8 486.0 L227.4 483.9 L225.0 481.7 L222.4 479.4 L219.8 476.9 L217.1 474.4 L214.3 471.7 L211.4 468.9 L208.4 466.0 L205.3 462.8 L202.2 459.6 L199.0 456.3 L195.7 452.8 L192.2 449.1 L188.6 445.0 L184.8 440.4 L180.6 435.4 L176.3 430.1 L171.8 424.4 L167.2 418.3 L162.4 411.9 L157.5 405.2 L152.4 398.0 L147.2 390.5 L141.8 382.6 L136.4 374.4 L130.8 365.8 L125.2 357.0 L119.6 347.7 L113.8 338.0 L107.9 328.0 L102.0 317.7 L96.1 307.4 L90.3 296.9 L84.5 286.4 L78.7 275.6 L72.9 264.6 L67.3 253.7 L61.8 242.8 L56.7 232.1 L51.8 221.4 L47.0 210.7 L42.5 200.1 L38.2 189.7 L34.2 179.5 L30.4 169.8 L26.8 160.3 L23.5 151.0 L20.4 142.0 L17.5 133.4 L14.9 125.1 L12.5 117.2 L10.4 109.8 L8.6 102.8 L6.9 96.1 L5.5 89.8 L4.3 83.9 L3.3 78.2 L2.5 72.9 L1.8 67.9 L1.4 63.3 L1.1 59.0 L1.0 54.9 L1.1 51.0 L1.3 47.3 L1.6 43.9 L2.2 40.7 L2.8 37.8 L3.7 35.0 L4.6 32.3 L5.7 29.9 L6.9 27.7 L8.3 25.6 L9.7 23.8 L11.3 22.1 L13.0 20.5 L14.7 19.1 L16.6 17.9 L18.5 16.9 L20.6 16.0 L22.7 15.2 L24.8 14.4 L27.1 13.8 L29.3 13.4 L31.7 13.0 L34.1 12.7 L36.5 12.4 L39.0 12.2 L41.5 12.0 L44.0 11.9 L46.6 11.8 L49.2 11.7 L51.8 11.7 L54.4 11.7 L57.0 11.6 L59.6 11.7 L62.2 11.7 L64.8 11.7 L67.4 11.8 L70.0 11.9 L72.7 12.0 L75.4 12.1 L78.1 12.2 L80.8 12.4 L83.6 12.5 L86.4 12.7 L89.2 12.9 L92.1 13.1 L95.0 13.3 L97.9 13.5 L100.9 13.8 L104.0 14.0 L107.0 14.3 L110.1 14.6 L113.3 14.9 L116.5 15.2 L119.8 15.6 L123.1 15.9 L126.4 16.2 L129.8 16.6 L133.3 17.0 L136.8 17.4 L140.4 17.8 L144.1 18.2 L147.8 18.6 L151.6 19.0 L155.4 19.5 L159.3 19.9 L163.3 20.4 L167.4 20.8 L171.5 21.3 L175.7 21.8 L179.9 22.3 L184.2 22.8 L188.6 23.4 L193.1 23.9 L197.7 24.5 L202.3 25.0 L207.0 25.6 L211.8 26.2 L216.7 26.8 L221.6 27.4 L226.7 28.0 L231.8 28.6 L236.9 29.2 L242.2 29.9 L247.5 30.5 L253.0 31.2 L258.5 31.9 L264.0 32.6 L269.7 33.3 L275.4 34.0 L281.2 34.7 L287.1 35.4 L293.1 36.2 L299.1 36.9 L305.3 37.7 L311.4 38.4 L317.7 39.2 L324.0 40.0 L330.4 40.7 L336.8 41.5 L343.3 42.3 L349.8 43.1 L356.4 43.9 L363.0 44.7 L369.6 45.6 L376.3 46.4 L383.0 47.2 L389.7 48.1 L396.4 48.9 L403.0 49.7 L409.6 50.5 L416.1 51.3 L422.6 52.1 L429.0 52.9 L435.5 53.7 L441.9 54.5 L448.3 55.3 L454.7 56.1 L461.1 56.8 L467.4 57.6 L473.6 58.4 L479.7 59.1 L485.6 59.9 L491.5 60.6 L497.3 61.3 L502.9 62.0 L508.5 62.6 L513.9 63.3 L519.2 64.0 L524.4 64.6 L529.6 65.2 L534.6 65.9 L539.4 66.5 L544.2 67.0 L548.8 67.6 L553.2 68.2 L557.6 68.7 L561.8 69.2 L565.9 69.7 L569.9 70.2 L573.8 70.7 L577.5 71.2 L581.2 71.6 L584.7 72.0 L588.1 72.5 L591.5 72.9 L594.7 73.3 L597.9 73.7 L600.9 74.0 L603.9 74.4 L606.8 74.8 L609.7 75.1 L612.4 75.5 L615.2 75.8 L617.8 76.1 L620.4 76.4 L623.0 76.8 L625.4 77.1 L627.8 77.4 L630.1 77.6 L632.4 77.9 L634.6 78.2 L636.7 78.5 L638.7 78.7 L640.7 78.9 L642.6 79.2 L644.4 79.4 L646.2 79.6 L647.9 79.8 L649.5 80.0 L651.1 80.2 L652.6 80.4 L654.0 80.6 L655.3 80.7 L656.6 80.9 L657.9 81.0 L659.1 81.2 L660.3 81.3 L661.4 81.5 L662.4 81.6 L663.4 81.7 L664.4 81.8 L665.3 82.0 L666.2 82.1 L667.0 82.2 L667.8 82.3 L668.6 82.4 L669.3 82.4 L669.9 82.5 L670.5 82.6 L671.0 82.7 L671.5 82.7 L672.0 82.8 L672.4 82.8 L672.9 82.9 L673.3 82.9 L673.7 83.0 L674.1 83.0 L674.5 83.1 L675.1 83.2 L675.7 83.2 L676.3 83.3 L677.0 83.4 L677.8 83.5 L678.5 83.6 L679.2 83.7 L679.9 83.8 L680.6 83.8 L681.3 83.9 L682.0 84.0 L682.6 84.1 L683.0 84.1 Z"/></clipPath><clipPath id="tr"><path d="M493.6 69.3 L136.5 33.6 L191.8 398.9 Z"/></clipPath><filter id="bl" x="-5%" y="-5%" width="110%" height="110%"><feGaussianBlur stdDeviation="4"/></filter></defs><g clip-path="url(#hs)"><g filter="url(#bl)"><rect x="10" y="0" fill="#009400"/><rect x="20" y="0" fill="#009400"/><rect x="30" y="0" fill="#009400"/><rect x="40" y="0" fill="#009400"/><rect x="50" y="0" fill="#009400"/><rect x="60" y="0" fill="#009400"/><rect x="70" y="0" fill="#009400"/><rect x="80" y="0" fill="#009400"/><rect x="90" y="0" fill="#009400"/><rect x="100" y="0" fill="#009400"/><rect x="110" y="0" fill="#009400"/><rect x="0" y="10" fill="#009400"/><rect x="10" y="10" fill="#009400"/><rect x="20" y="10" fill="#009400"/><rect x="30" y="10" fill="#009400"/><rect x="40" y="10" fill="#009400"/><rect x="50" y="10" fill="#009400"/><rect x="60" y="10" fill="#009400"/><rect x="70" y="10" fill="#009400"/><rect x="80" y="10" fill="#009400"/><rect x="90" y="10" fill="#009400"/><rect x="100" y="10" fill="#009400"/><rect x="110" y="10" fill="#009400"/><rect x="120" y="10" fill="#009400"/><rect x="130" y="10" fill="#029400"/><rect x="140" y="10" fill="#0e9400"/><rect x="150" y="10" fill="#1c9400"/><rect x="160" y="10" fill="#2a9400"/><rect x="170" y="10" fill="#399400"/><rect x="180" y="10" fill="#499400"/><rect x="190" y="10" fill="#5a9400"/><rect x="200" y="10" fill="#6c9400"/><rect x="-10" y="20" fill="#009405"/><rect x="0" y="20" fill="#009404"/><rect x="10" y="20" fill="#009403"/><rect x="20" y="20" fill="#009402"/><rect x="30" y="20" fill="#009401"/><rect x="40" y="20" fill="#009401"/><rect x="50" y="20" fill="#009400"/><rect x="60" y="20" fill="#009400"/><rect x="70" y="20" fill="#009400"/><rect x="80" y="20" fill="#009400"/><rect x="90" y="20" fill="#009400"/><rect x="100" y="20" fill="#009400"/><rect x="110" y="20" fill="#009400"/><rect x="120" y="20" fill="#009400"/><rect x="130" y="20" fill="#009400"/><rect x="140" y="20" fill="#0d9400"/><rect x="150" y="20" fill="#1b9400"/><rect x="160" y="20" fill="#299400"/><rect x="170" y="20" fill="#399400"/><rect x="180" y="20" fill="#499400"/><rect x="190" y="20" fill="#5a9400"/><rect x="200" y="20" fill="#6d9400"/><rect x="210" y="20" fill="#809400"/><rect x="220" y="20" fill="#949300"/><rect x="230" y="20" fill="#948000"/><rect x="240" y="20" fill="#947100"/><rect x="250" y="20" fill="#946400"/><rect x="260" y="20" fill="#945900"/><rect x="270" y="20" fill="#944f00"/><rect x="280" y="20" fill="#944700"/><rect x="-10" y="30" fill="#00940d"/><rect x="0" y="30" fill="#00940d"/><rect x="10" y="30" fill="#00940c"/><rect x="20" y="30" fill="#00940b"/><rect x="30" y="30" fill="#00940b"/><rect x="40" y="30" fill="#00940a"/><rect x="50" y="30" fill="#009409"/><rect x="60" y="30" fill="#009408"/><rect x="70" y="30" fill="#009408"/><rect x="80" y="30" fill="#009407"/><rect x="90" y="30" fill="#009406"/><rect x="100" y="30" fill="#009405"/><rect x="110" y="30" fill="#009404"/><rect x="120" y="30" fill="#009403"/><rect x="130" y="30" fill="#009402"/><rect x="140" y="30" fill="#0b9401"/><rect x="150" y="30" fill="#199400"/><rect x="160" y="30" fill="#289400"/><rect x="170" y="30" fill="#389400"/><rect x="180" y="30" fill="#499400"/><rect x="190" y="30" fill="#5a9400"/><rect x="200" y="30" fill="#6d9400"/><rect x="210" y="30" fill="#819400"/><rect x="220" y="30" fill="#949100"/><rect x="230" y="30" fill="#947e00"/><rect x="240" y="30" fill="#946e00"/><rect x="250" y="30" fill="#946200"/><rect x="260" y="30" fill="#945700"/><rect x="270" y="30" fill="#944d00"/><rect x="280" y="30" fill="#944500"/><rect x="290" y="30" fill="#943e00"/><rect x="300" y="30" fill="#943800"/><rect x="310" y="30" fill="#943200"/><rect x="320" y="30" fill="#942d00"/><rect x="330" y="30" fill="#942900"/><rect x="340" y="30" fill="#942500"/><rect x="350" y="30" fill="#942100"/><rect x="360" y="30" fill="#941e00"/><rect x="370" y="30" fill="#941b00"/><rect x="-10" y="40" fill="#009416"/><rect x="0" y="40" fill="#009415"/><rect x="10" y="40" fill="#009415"/><rect x="20" y="40" fill="#009415"/><rect x="30" y="40" fill="#009414"/><rect x="40" y="40" fill="#009414"/><rect x="50" y="40" fill="#009413"/><rect x="60" y="40" fill="#009412"/><rect x="70" y="40" fill="#009412"/><rect x="80" y="40" fill="#009411"/><rect x="90" y="40" fill="#009411"/><rect x="100" y="40" fill="#009410"/><rect x="110" y="40" fill="#00940f"/><rect x="120" y="40" fill="#00940e"/><rect x="130" y="40" fill="#00940e"/><rect x="140" y="40" fill="#09940d"/><rect x="150" y="40" fill="#18940c"/><rect x="160" y="40" fill="#27940b"/><rect x="170" y="40" fill="#37940a"/><rect x="180" y="40" fill="#489409"/><rect x="190" y="40" fill="#5b9408"/><rect x="200" y="40" fill="#6e9407"/><rect x="210" y="40" fill="#839405"/><rect x="220" y="40" fill="#948f04"/><rect x="230" y="40" fill="#947c02"/><rect x="240" y="40" fill="#946c01"/><rect x="250" y="40" fill="#945f00"/><rect x="260" y="40" fill="#945500"/><rect x="270" y="40" fill="#944b00"/><rect x="280" y="40" fill="#944300"/><rect x="290" y="40" fill="#943c00"/><rect x="300" y="40" fill="#943600"/><rect x="310" y="40" fill="#943100"/><rect x="320" y="40" fill="#942c00"/><rect x="330" y="40" fill="#942700"/><rect x="340" y="40" fill="#942300"/><rect x="350" y="40" fill="#942000"/><rect x="360" y="40" fill="#941c00"/><rect x="370" y="40" fill="#941900"/><rect x="380" y="40" fill="#941700"/><rect x="390" y="40" fill="#941400"/><rect x="400" y="40" fill="#941200"/><rect x="410" y="40" fill="#941000"/><rect x="420" y="40" fill="#940e00"/><rect x="430" y="40" fill="#940c00"/><rect x="440" y="40" fill="#940a00"/><rect x="450" y="40" fill="#940800"/><rect x="-10" y="50" fill="#00941f"/><rect x="0" y="50" fill="#00941f"/><rect x="10" y="50" fill="#00941e"/><rect x="20" y="50" fill="#00941e"/><rect x="30" y="50" fill="#00941e"/><rect x="40" y="50" fill="#00941e"/><rect x="50" y="50" fill="#00941d"/><rect x="60" y="50" fill="#00941d"/><rect x="70" y="50" fill="#00941c"/><rect x="80" y="50" fill="#00941c"/><rect x="90" y="50" fill="#00941c"/><rect x="100" y="50" fill="#00941b"/><rect x="110" y="50" fill="#00941b"/><rect x="120" y="50" fill="#00941a"/><rect x="130" y="50" fill="#00941a"/><rect x="140" y="50" fill="#079419"/><rect x="150" y="50" fill="#169419"/><rect x="160" y="50" fill="#269418"/><rect x="170" y="50" fill="#369418"/><rect x="180" y="50" fill="#489417"/><rect x="190" y="50" fill="#5b9416"/><rect x="200" y="50" fill="#6f9416"/><rect x="210" y="50" fill="#849415"/><rect x="220" y="50" fill="#948d13"/><rect x="230" y="50" fill="#947a10"/><rect x="240" y="50" fill="#946a0d"/><rect x="250" y="50" fill="#945d0b"/><rect x="260" y="50" fill="#945209"/><rect x="270" y="50" fill="#944907"/><rect x="280" y="50" fill="#944106"/><rect x="290" y="50" fill="#943a05"/><rect x="300" y="50" fill="#943404"/><rect x="310" y="50" fill="#942f03"/><rect x="320" y="50" fill="#942a02"/><rect x="330" y="50" fill="#942601"/><rect x="340" y="50" fill="#942200"/><rect x="350" y="50" fill="#941e00"/><rect x="360" y="50" fill="#941b00"/><rect x="370" y="50" fill="#941800"/><rect x="380" y="50" fill="#941500"/><rect x="390" y="50" fill="#941300"/><rect x="400" y="50" fill="#941000"/><rect x="410" y="50" fill="#940e00"/><rect x="420" y="50" fill="#940c00"/><rect x="430" y="50" fill="#940a00"/><rect x="440" y="50" fill="#940900"/><rect x="450" y="50" fill="#940700"/><rect x="460" y="50" fill="#940500"/><rect x="470" y="50" fill="#940400"/><rect x="480" y="50" fill="#940300"/><rect x="490" y="50" fill="#940100"/><rect x="500" y="50" fill="#940000"/><rect x="510" y="50" fill="#940000"/><rect x="520" y="50" fill="#940000"/><rect x="530" y="50" fill="#940000"/><rect x="-10" y="60" fill="#009428"/><rect x="0" y="60" fill="#009428"/><rect x="10" y="60" fill="#009428"/><rect x="20" y="60" fill="#009428"/><rect x="30" y="60" fill="#009428"/><rect x="40" y="60" fill="#009428"/><rect x="50" y="60" fill="#009428"/><rect x="60" y="60" fill="#009428"/><rect x="70" y="60" fill="#009428"/><rect x="80" y="60" fill="#009428"/><rect x="90" y="60" fill="#009427"/><rect x="100" y="60" fill="#009427"/><rect x="110" y="60" fill="#009427"/><rect x="120" y="60" fill="#009427"/><rect x="130" y="60" fill="#009427"/><rect x="140" y="60" fill="#059427"/><rect x="150" y="60" fill="#149426"/><rect x="160" y="60" fill="#259426"/><rect x="170" y="60" fill="#369426"/><rect x="180" y="60" fill="#489426"/><rect x="190" y="60" fill="#5b9426"/><rect x="200" y="60" fill="#709425"/><rect x="210" y="60" fill="#869425"/><rect x="220" y="60" fill="#948b23"/><rect x="230" y="60" fill="#94781e"/><rect x="240" y="60" fill="#94681a"/><rect x="250" y="60" fill="#945b16"/><rect x="260" y="60" fill="#945013"/><rect x="270" y="60" fill="#944711"/><rect x="280" y="60" fill="#943f0f"/><rect x="290" y="60" fill="#94380d"/><rect x="300" y="60" fill="#94320b"/><rect x="310" y="60" fill="#942d0a"/><rect x="320" y="60" fill="#942809"/><rect x="330" y="60" fill="#942408"/><rect x="340" y="60" fill="#942007"/><rect x="350" y="60" fill="#941d06"/><rect x="360" y="60" fill="#941905"/><rect x="370" y="60" fill="#941604"/><rect x="380" y="60" fill="#941403"/><rect x="390" y="60" fill="#941103"/><rect x="400" y="60" fill="#940f02"/><rect x="410" y="60" fill="#940d02"/><rect x="420" y="60" fill="#940b01"/><rect x="430" y="60" fill="#940901"/><rect x="440" y="60" fill="#940700"/><rect x="450" y="60" fill="#940600"/><rect x="460" y="60" fill="#940400"/><rect x="470" y="60" fill="#940300"/><rect x="480" y="60" fill="#940200"/><rect x="490" y="60" fill="#940000"/><rect x="500" y="60" fill="#940000"/><rect x="510" y="60" fill="#940000"/><rect x="520" y="60" fill="#940000"/><rect x="530" y="60" fill="#940000"/><rect x="540" y="60" fill="#940000"/><rect x="550" y="60" fill="#940000"/><rect x="560" y="60" fill="#940000"/><rect x="570" y="60" fill="#940000"/><rect x="580" y="60" fill="#940000"/><rect x="590" y="60" fill="#940000"/><rect x="600" y="60" fill="#940000"/><rect x="610" y="60" fill="#940000"/><rect x="-10" y="70" fill="#009432"/><rect x="0" y="70" fill="#009432"/><rect x="10" y="70" fill="#009432"/><rect x="20" y="70" fill="#009433"/><rect x="30" y="70" fill="#009433"/><rect x="40" y="70" fill="#009433"/><rect x="50" y="70" fill="#009433"/><rect x="60" y="70" fill="#009433"/><rect x="70" y="70" fill="#009433"/><rect x="80" y="70" fill="#009433"/><rect x="90" y="70" fill="#009434"/><rect x="100" y="70" fill="#009434"/><rect x="110" y="70" fill="#009434"/><rect x="120" y="70" fill="#009434"/><rect x="130" y="70" fill="#009434"/><rect x="140" y="70" fill="#039435"/><rect x="150" y="70" fill="#139435"/><rect x="160" y="70" fill="#239435"/><rect x="170" y="70" fill="#359435"/><rect x="180" y="70" fill="#479436"/><rect x="190" y="70" fill="#5b9436"/><rect x="200" y="70" fill="#709436"/><rect x="210" y="70" fill="#879437"/><rect x="220" y="70" fill="#948933"/><rect x="230" y="70" fill="#94752c"/><rect x="240" y="70" fill="#946626"/><rect x="250" y="70" fill="#945922"/><rect x="260" y="70" fill="#944e1e"/><rect x="270" y="70" fill="#94451b"/><rect x="280" y="70" fill="#943d18"/><rect x="290" y="70" fill="#943616"/><rect x="300" y="70" fill="#943013"/><rect x="310" y="70" fill="#942b12"/><rect x="320" y="70" fill="#942610"/><rect x="330" y="70" fill="#94220e"/><rect x="340" y="70" fill="#941e0d"/><rect x="350" y="70" fill="#941b0c"/><rect x="360" y="70" fill="#94180b"/><rect x="370" y="70" fill="#94150a"/><rect x="380" y="70" fill="#941209"/><rect x="390" y="70" fill="#941008"/><rect x="400" y="70" fill="#940e07"/><rect x="410" y="70" fill="#940c06"/><rect x="420" y="70" fill="#940a06"/><rect x="430" y="70" fill="#940805"/><rect x="440" y="70" fill="#940604"/><rect x="450" y="70" fill="#940504"/><rect x="460" y="70" fill="#940303"/><rect x="470" y="70" fill="#940203"/><rect x="480" y="70" fill="#940002"/><rect x="490" y="70" fill="#940002"/><rect x="500" y="70" fill="#940002"/><rect x="510" y="70" fill="#940001"/><rect x="520" y="70" fill="#940001"/><rect x="530" y="70" fill="#940001"/><rect x="540" y="70" fill="#940000"/><rect x="550" y="70" fill="#940000"/><rect x="560" y="70" fill="#940000"/><rect x="570" y="70" fill="#940000"/><rect x="580" y="70" fill="#940000"/><rect x="590" y="70" fill="#940000"/><rect x="600" y="70" fill="#940000"/><rect x="610" y="70" fill="#940000"/><rect x="620" y="70" fill="#940000"/><rect x="630" y="70" fill="#940000"/><rect x="640" y="70" fill="#940000"/><rect x="650" y="70" fill="#940000"/><rect x="660" y="70" fill="#940000"/><rect x="-10" y="80" fill="#00943c"/><rect x="0" y="80" fill="#00943d"/><rect x="10" y="80" fill="#00943d"/><rect x="20" y="80" fill="#00943d"/><rect x="30" y="80" fill="#00943e"/><rect x="40" y="80" fill="#00943e"/><rect x="50" y="80" fill="#00943f"/><rect x="60" y="80" fill="#00943f"/><rect x="70" y="80" fill="#00943f"/><rect x="80" y="80" fill="#009440"/><rect x="90" y="80" fill="#009440"/><rect x="100" y="80" fill="#009441"/><rect x="110" y="80" fill="#009442"/><rect x="120" y="80" fill="#009442"/><rect x="130" y="80" fill="#009443"/><rect x="140" y="80" fill="#019443"/><rect x="150" y="80" fill="#119444"/><rect x="160" y="80" fill="#229445"/><rect x="170" y="80" fill="#349446"/><rect x="180" y="80" fill="#479447"/><rect x="190" y="80" fill="#5b9447"/><rect x="200" y="80" fill="#719448"/><rect x="210" y="80" fill="#899449"/><rect x="220" y="80" fill="#948744"/><rect x="230" y="80" fill="#94733b"/><rect x="240" y="80" fill="#946334"/><rect x="250" y="80" fill="#94572e"/><rect x="260" y="80" fill="#944c29"/><rect x="270" y="80" fill="#944325"/><rect x="280" y="80" fill="#943b21"/><rect x="290" y="80" fill="#94341e"/><rect x="300" y="80" fill="#942e1c"/><rect x="310" y="80" fill="#942919"/><rect x="320" y="80" fill="#942417"/><rect x="330" y="80" fill="#942015"/><rect x="340" y="80" fill="#941d14"/><rect x="350" y="80" fill="#941912"/><rect x="360" y="80" fill="#941611"/><rect x="370" y="80" fill="#94130f"/><rect x="380" y="80" fill="#94110e"/><rect x="390" y="80" fill="#940e0d"/><rect x="400" y="80" fill="#940c0c"/><rect x="410" y="80" fill="#940a0b"/><rect x="420" y="80" fill="#94080a"/><rect x="430" y="80" fill="#94070a"/><rect x="440" y="80" fill="#940509"/><rect x="450" y="80" fill="#940308"/><rect x="460" y="80" fill="#940207"/><rect x="470" y="80" fill="#940107"/><rect x="480" y="80" fill="#940006"/><rect x="490" y="80" fill="#940006"/><rect x="500" y="80" fill="#940005"/><rect x="510" y="80" fill="#940005"/><rect x="520" y="80" fill="#940004"/><rect x="530" y="80" fill="#940004"/><rect x="540" y="80" fill="#940003"/><rect x="550" y="80" fill="#940003"/><rect x="560" y="80" fill="#940003"/><rect x="570" y="80" fill="#940002"/><rect x="580" y="80" fill="#940002"/><rect x="590" y="80" fill="#940002"/><rect x="600" y="80" fill="#940001"/><rect x="610" y="80" fill="#940001"/><rect x="620" y="80" fill="#940001"/><rect x="630" y="80" fill="#940000"/><rect x="640" y="80" fill="#940000"/><rect x="650" y="80" fill="#940000"/><rect x="660" y="80" fill="#940000"/><rect x="-10" y="90" fill="#009447"/><rect x="0" y="90" fill="#009447"/><rect x="10" y="90" fill="#009448"/><rect x="20" y="90" fill="#009449"/><rect x="30" y="90" fill="#009449"/><rect x="40" y="90" fill="#00944a"/><rect x="50" y="90" fill="#00944b"/><rect x="60" y="90" fill="#00944b"/><rect x="70" y="90" fill="#00944c"/><rect x="80" y="90" fill="#00944d"/><rect x="90" y="90" fill="#00944e"/><rect x="100" y="90" fill="#00944f"/><rect x="110" y="90" fill="#009450"/><rect x="120" y="90" fill="#009451"/><rect x="130" y="90" fill="#009452"/><rect x="140" y="90" fill="#009453"/><rect x="150" y="90" fill="#0f9454"/><rect x="160" y="90" fill="#209456"/><rect x="170" y="90" fill="#339457"/><rect x="180" y="90" fill="#469458"/><rect x="190" y="90" fill="#5c945a"/><rect x="200" y="90" fill="#72945c"/><rect x="210" y="90" fill="#8b945e"/><rect x="220" y="90" fill="#948455"/><rect x="230" y="90" fill="#94714a"/><rect x="240" y="90" fill="#946142"/><rect x="250" y="90" fill="#94543a"/><rect x="260" y="90" fill="#944934"/><rect x="270" y="90" fill="#94412f"/><rect x="280" y="90" fill="#94392b"/><rect x="290" y="90" fill="#943227"/><rect x="300" y="90" fill="#942c24"/><rect x="310" y="90" fill="#942721"/><rect x="320" y="90" fill="#94231f"/><rect x="330" y="90" fill="#941f1c"/><rect x="340" y="90" fill="#941b1a"/><rect x="350" y="90" fill="#941818"/><rect x="360" y="90" fill="#941417"/><rect x="370" y="90" fill="#941215"/><rect x="380" y="90" fill="#940f14"/><rect x="390" y="90" fill="#940d12"/><rect x="400" y="90" fill="#940b11"/><rect x="410" y="90" fill="#940910"/><rect x="420" y="90" fill="#94070f"/><rect x="430" y="90" fill="#94050e"/><rect x="440" y="90" fill="#94040d"/><rect x="450" y="90" fill="#94020c"/><rect x="460" y="90" fill="#94010c"/><rect x="470" y="90" fill="#94000b"/><rect x="480" y="90" fill="#94000a"/><rect x="490" y="90" fill="#940009"/><rect x="500" y="90" fill="#940009"/><rect x="510" y="90" fill="#940008"/><rect x="520" y="90" fill="#940008"/><rect x="530" y="90" fill="#940007"/><rect x="540" y="90" fill="#940007"/><rect x="550" y="90" fill="#940006"/><rect x="560" y="90" fill="#940006"/><rect x="570" y="90" fill="#940005"/><rect x="580" y="90" fill="#940005"/><rect x="590" y="90" fill="#940004"/><rect x="600" y="90" fill="#940004"/><rect x="610" y="90" fill="#940004"/><rect x="620" y="90" fill="#940003"/><rect x="630" y="90" fill="#940003"/><rect x="640" y="90" fill="#940003"/><rect x="650" y="90" fill="#940002"/><rect x="660" y="90" fill="#940002"/><rect x="0" y="100" fill="#009453"/><rect x="10" y="100" fill="#009454"/><rect x="20" y="100" fill="#009454"/><rect x="30" y="100" fill="#009455"/><rect x="40" y="100" fill="#009456"/><rect x="50" y="100" fill="#009457"/><rect x="60" y="100" fill="#009458"/><rect x="70" y="100" fill="#00945a"/><rect x="80" y="100" fill="#00945b"/><rect x="90" y="100" fill="#00945c"/><rect x="100" y="100" fill="#00945d"/><rect x="110" y="100" fill="#00945f"/><rect x="120" y="100" fill="#009460"/><rect x="130" y="100" fill="#009462"/><rect x="140" y="100" fill="#009464"/><rect x="150" y="100" fill="#0d9465"/><rect x="160" y="100" fill="#1f9467"/><rect x="170" y="100" fill="#329469"/><rect x="180" y="100" fill="#46946c"/><rect x="190" y="100" fill="#5c946e"/><rect x="200" y="100" fill="#739470"/><rect x="210" y="100" fill="#8d9473"/><rect x="220" y="100" fill="#948268"/><rect x="230" y="100" fill="#946e5a"/><rect x="240" y="100" fill="#945e50"/><rect x="250" y="100" fill="#945247"/><rect x="260" y="100" fill="#944740"/><rect x="270" y="100" fill="#943e3a"/><rect x="280" y="100" fill="#943735"/><rect x="290" y="100" fill="#943030"/><rect x="300" y="100" fill="#942a2d"/><rect x="310" y="100" fill="#942529"/><rect x="320" y="100" fill="#942126"/><rect x="330" y="100" fill="#941d23"/><rect x="340" y="100" fill="#941921"/><rect x="350" y="100" fill="#94161f"/><rect x="360" y="100" fill="#94131d"/><rect x="370" y="100" fill="#94101b"/><rect x="380" y="100" fill="#940e19"/><rect x="390" y="100" fill="#940b18"/><rect x="400" y="100" fill="#940916"/><rect x="410" y="100" fill="#940715"/><rect x="420" y="100" fill="#940614"/><rect x="430" y="100" fill="#940413"/><rect x="440" y="100" fill="#940212"/><rect x="450" y="100" fill="#940111"/><rect x="460" y="100" fill="#940010"/><rect x="470" y="100" fill="#94000f"/><rect x="480" y="100" fill="#94000e"/><rect x="490" y="100" fill="#94000d"/><rect x="500" y="100" fill="#94000c"/><rect x="510" y="100" fill="#94000c"/><rect x="520" y="100" fill="#94000b"/><rect x="530" y="100" fill="#94000a"/><rect x="540" y="100" fill="#94000a"/><rect x="550" y="100" fill="#940009"/><rect x="560" y="100" fill="#940009"/><rect x="570" y="100" fill="#940008"/><rect x="580" y="100" fill="#940008"/><rect x="590" y="100" fill="#940007"/><rect x="600" y="100" fill="#940007"/><rect x="610" y="100" fill="#940006"/><rect x="620" y="100" fill="#940006"/><rect x="630" y="100" fill="#940006"/><rect x="640" y="100" fill="#940005"/><rect x="650" y="100" fill="#940005"/><rect x="660" y="100" fill="#940005"/><rect x="0" y="110" fill="#00945e"/><rect x="10" y="110" fill="#009460"/><rect x="20" y="110" fill="#009461"/><rect x="30" y="110" fill="#009462"/><rect x="40" y="110" fill="#009463"/><rect x="50" y="110" fill="#009465"/><rect x="60" y="110" fill="#009466"/><rect x="70" y="110" fill="#009468"/><rect x="80" y="110" fill="#009469"/><rect x="90" y="110" fill="#00946b"/><rect x="100" y="110" fill="#00946d"/><rect x="110" y="110" fill="#00946f"/><rect x="120" y="110" fill="#009471"/><rect x="130" y="110" fill="#009473"/><rect x="140" y="110" fill="#009475"/><rect x="150" y="110" fill="#0b9477"/><rect x="160" y="110" fill="#1d947a"/><rect x="170" y="110" fill="#30947d"/><rect x="180" y="110" fill="#459480"/><rect x="190" y="110" fill="#5c9483"/><rect x="200" y="110" fill="#759487"/><rect x="210" y="110" fill="#8f948a"/><rect x="220" y="110" fill="#947f7b"/><rect x="230" y="110" fill="#946b6b"/><rect x="240" y="110" fill="#945c5e"/><rect x="250" y="110" fill="#944f54"/><rect x="260" y="110" fill="#94454c"/><rect x="270" y="110" fill="#943c45"/><rect x="280" y="110" fill="#94343f"/><rect x="290" y="110" fill="#942e3a"/><rect x="300" y="110" fill="#942835"/><rect x="310" y="110" fill="#942331"/><rect x="320" y="110" fill="#941f2e"/><rect x="330" y="110" fill="#941b2b"/><rect x="340" y="110" fill="#941728"/><rect x="350" y="110" fill="#941425"/><rect x="360" y="110" fill="#941123"/><rect x="370" y="110" fill="#940f21"/><rect x="380" y="110" fill="#940c1f"/><rect x="390" y="110" fill="#940a1d"/><rect x="400" y="110" fill="#94081b"/><rect x="410" y="110" fill="#94061a"/><rect x="420" y="110" fill="#940418"/><rect x="430" y="110" fill="#940317"/><rect x="440" y="110" fill="#940116"/><rect x="450" y="110" fill="#940015"/><rect x="460" y="110" fill="#940014"/><rect x="470" y="110" fill="#940013"/><rect x="480" y="110" fill="#940012"/><rect x="490" y="110" fill="#940011"/><rect x="500" y="110" fill="#940010"/><rect x="510" y="110" fill="#94000f"/><rect x="520" y="110" fill="#94000f"/><rect x="530" y="110" fill="#94000e"/><rect x="540" y="110" fill="#94000d"/><rect x="550" y="110" fill="#94000d"/><rect x="560" y="110" fill="#94000c"/><rect x="570" y="110" fill="#94000b"/><rect x="580" y="110" fill="#94000b"/><rect x="590" y="110" fill="#94000a"/><rect x="600" y="110" fill="#94000a"/><rect x="610" y="110" fill="#940009"/><rect x="620" y="110" fill="#940009"/><rect x="630" y="110" fill="#940008"/><rect x="640" y="110" fill="#940008"/><rect x="650" y="110" fill="#940008"/><rect x="660" y="110" fill="#940007"/><rect x="0" y="120" fill="#00946b"/><rect x="10" y="120" fill="#00946c"/><rect x="20" y="120" fill="#00946d"/><rect x="30" y="120" fill="#00946f"/><rect x="40" y="120" fill="#009471"/><rect x="50" y="120" fill="#009473"/><rect x="60" y="120" fill="#009474"/><rect x="70" y="120" fill="#009476"/><rect x="80" y="120" fill="#009478"/><rect x="90" y="120" fill="#00947b"/><rect x="100" y="120" fill="#00947d"/><rect x="110" y="120" fill="#00947f"/><rect x="120" y="120" fill="#009482"/><rect x="130" y="120" fill="#009485"/><rect x="140" y="120" fill="#009488"/><rect x="150" y="120" fill="#08948b"/><rect x="160" y="120" fill="#1b948e"/><rect x="170" y="120" fill="#2f9492"/><rect x="180" y="120" fill="#449294"/><rect x="190" y="120" fill="#598e94"/><rect x="200" y="120" fill="#6e8a94"/><rect x="210" y="120" fill="#838694"/><rect x="220" y="120" fill="#947d8e"/><rect x="230" y="120" fill="#94697c"/><rect x="240" y="120" fill="#94596e"/><rect x="250" y="120" fill="#944d62"/><rect x="260" y="120" fill="#944258"/><rect x="270" y="120" fill="#943950"/><rect x="280" y="120" fill="#943249"/><rect x="290" y="120" fill="#942c43"/><rect x="300" y="120" fill="#94263e"/><rect x="310" y="120" fill="#942139"/><rect x="320" y="120" fill="#941d35"/><rect x="330" y="120" fill="#941932"/><rect x="340" y="120" fill="#94152f"/><rect x="350" y="120" fill="#94122c"/><rect x="360" y="120" fill="#940f29"/><rect x="370" y="120" fill="#940d27"/><rect x="380" y="120" fill="#940b24"/><rect x="390" y="120" fill="#940822"/><rect x="400" y="120" fill="#940621"/><rect x="410" y="120" fill="#94041f"/><rect x="420" y="120" fill="#94031d"/><rect x="430" y="120" fill="#94011c"/><rect x="440" y="120" fill="#94001a"/><rect x="450" y="120" fill="#940019"/><rect x="460" y="120" fill="#940018"/><rect x="470" y="120" fill="#940017"/><rect x="480" y="120" fill="#940016"/><rect x="490" y="120" fill="#940015"/><rect x="500" y="120" fill="#940014"/><rect x="510" y="120" fill="#940013"/><rect x="520" y="120" fill="#940012"/><rect x="530" y="120" fill="#940011"/><rect x="540" y="120" fill="#940010"/><rect x="550" y="120" fill="#940010"/><rect x="560" y="120" fill="#94000f"/><rect x="570" y="120" fill="#94000e"/><rect x="580" y="120" fill="#94000e"/><rect x="590" y="120" fill="#94000d"/><rect x="600" y="120" fill="#94000d"/><rect x="610" y="120" fill="#94000c"/><rect x="620" y="120" fill="#94000c"/><rect x="630" y="120" fill="#94000b"/><rect x="640" y="120" fill="#94000b"/><rect x="650" y="120" fill="#94000a"/><rect x="0" y="130" fill="#009477"/><rect x="10" y="130" fill="#009479"/><rect x="20" y="130" fill="#00947b"/><rect x="30" y="130" fill="#00947d"/><rect x="40" y="130" fill="#00947f"/><rect x="50" y="130" fill="#009481"/><rect x="60" y="130" fill="#009483"/><rect x="70" y="130" fill="#009486"/><rect x="80" y="130" fill="#009488"/><rect x="90" y="130" fill="#00948b"/><rect x="100" y="130" fill="#00948e"/><rect x="110" y="130" fill="#009491"/><rect x="120" y="130" fill="#009494"/><rect x="130" y="130" fill="#009094"/><rect x="140" y="130" fill="#008d94"/><rect x="150" y="130" fill="#058994"/><rect x="160" y="130" fill="#178694"/><rect x="170" y="130" fill="#288294"/><rect x="180" y="130" fill="#3a7e94"/><rect x="190" y="130" fill="#4d7a94"/><rect x="200" y="130" fill="#5f7794"/><rect x="210" y="130" fill="#737394"/><rect x="220" y="130" fill="#866f94"/><rect x="230" y="130" fill="#94668e"/><rect x="240" y="130" fill="#94567d"/><rect x="250" y="130" fill="#944a70"/><rect x="260" y="130" fill="#944065"/><rect x="270" y="130" fill="#94375b"/><rect x="280" y="130" fill="#943054"/><rect x="290" y="130" fill="#94294d"/><rect x="300" y="130" fill="#942447"/><rect x="310" y="130" fill="#941f42"/><rect x="320" y="130" fill="#941b3d"/><rect x="330" y="130" fill="#941739"/><rect x="340" y="130" fill="#941436"/><rect x="350" y="130" fill="#941132"/><rect x="360" y="130" fill="#940e2f"/><rect x="370" y="130" fill="#940b2d"/><rect x="380" y="130" fill="#94092a"/><rect x="390" y="130" fill="#940728"/><rect x="400" y="130" fill="#940526"/><rect x="410" y="130" fill="#940324"/><rect x="420" y="130" fill="#940122"/><rect x="430" y="130" fill="#940021"/><rect x="440" y="130" fill="#94001f"/><rect x="450" y="130" fill="#94001e"/><rect x="460" y="130" fill="#94001c"/><rect x="470" y="130" fill="#94001b"/><rect x="480" y="130" fill="#94001a"/><rect x="490" y="130" fill="#940019"/><rect x="500" y="130" fill="#940018"/><rect x="510" y="130" fill="#940017"/><rect x="520" y="130" fill="#940016"/><rect x="530" y="130" fill="#940015"/><rect x="540" y="130" fill="#940014"/><rect x="550" y="130" fill="#940013"/><rect x="560" y="130" fill="#940012"/><rect x="570" y="130" fill="#940011"/><rect x="580" y="130" fill="#940011"/><rect x="590" y="130" fill="#940010"/><rect x="600" y="130" fill="#94000f"/><rect x="610" y="130" fill="#94000f"/><rect x="620" y="130" fill="#94000e"/><rect x="630" y="130" fill="#94000e"/><rect x="640" y="130" fill="#94000d"/><rect x="650" y="130" fill="#94000d"/><rect x="10" y="140" fill="#009487"/><rect x="20" y="140" fill="#009489"/><rect x="30" y="140" fill="#00948b"/><rect x="40" y="140" fill="#00948e"/><rect x="50" y="140" fill="#009490"/><rect x="60" y="140" fill="#009493"/><rect x="70" y="140" fill="#009294"/><rect x="80" y="140" fill="#008f94"/><rect x="90" y="140" fill="#008c94"/><rect x="100" y="140" fill="#008994"/><rect x="110" y="140" fill="#008694"/><rect x="120" y="140" fill="#008394"/><rect x="130" y="140" fill="#007f94"/><rect x="140" y="140" fill="#007c94"/><rect x="150" y="140" fill="#027994"/><rect x="160" y="140" fill="#127594"/><rect x="170" y="140" fill="#227294"/><rect x="180" y="140" fill="#326e94"/><rect x="190" y="140" fill="#436b94"/><rect x="200" y="140" fill="#546794"/><rect x="210" y="140" fill="#656394"/><rect x="220" y="140" fill="#775f94"/><rect x="230" y="140" fill="#895c94"/><rect x="240" y="140" fill="#94548d"/><rect x="250" y="140" fill="#94477e"/><rect x="260" y="140" fill="#943d72"/><rect x="270" y="140" fill="#943467"/><rect x="280" y="140" fill="#942d5e"/><rect x="290" y="140" fill="#942757"/><rect x="300" y="140" fill="#942250"/><rect x="310" y="140" fill="#941d4a"/><rect x="320" y="140" fill="#941945"/><rect x="330" y="140" fill="#941541"/><rect x="340" y="140" fill="#94123d"/><rect x="350" y="140" fill="#940f39"/><rect x="360" y="140" fill="#940c36"/><rect x="370" y="140" fill="#940a33"/><rect x="380" y="140" fill="#940730"/><rect x="390" y="140" fill="#94052e"/><rect x="400" y="140" fill="#94032b"/><rect x="410" y="140" fill="#940229"/><rect x="420" y="140" fill="#940027"/><rect x="430" y="140" fill="#940025"/><rect x="440" y="140" fill="#940024"/><rect x="450" y="140" fill="#940022"/><rect x="460" y="140" fill="#940020"/><rect x="470" y="140" fill="#94001f"/><rect x="480" y="140" fill="#94001e"/><rect x="490" y="140" fill="#94001c"/><rect x="500" y="140" fill="#94001b"/><rect x="510" y="140" fill="#94001a"/><rect x="520" y="140" fill="#940019"/><rect x="530" y="140" fill="#940018"/><rect x="540" y="140" fill="#940017"/><rect x="550" y="140" fill="#940016"/><rect x="560" y="140" fill="#940015"/><rect x="570" y="140" fill="#940015"/><rect x="580" y="140" fill="#940014"/><rect x="590" y="140" fill="#940013"/><rect x="600" y="140" fill="#940012"/><rect x="610" y="140" fill="#940012"/><rect x="620" y="140" fill="#940011"/><rect x="630" y="140" fill="#940010"/><rect x="640" y="140" fill="#940010"/><rect x="10" y="150" fill="#009394"/><rect x="20" y="150" fill="#009094"/><rect x="30" y="150" fill="#008e94"/><rect x="40" y="150" fill="#008b94"/><rect x="50" y="150" fill="#008894"/><rect x="60" y="150" fill="#008694"/><rect x="70" y="150" fill="#008394"/><rect x="80" y="150" fill="#008094"/><rect x="90" y="150" fill="#007d94"/><rect x="100" y="150" fill="#007a94"/><rect x="110" y="150" fill="#007794"/><rect x="120" y="150" fill="#007494"/><rect x="130" y="150" fill="#007194"/><rect x="140" y="150" fill="#006e94"/><rect x="150" y="150" fill="#006b94"/><rect x="160" y="150" fill="#0e6894"/><rect x="170" y="150" fill="#1d6494"/><rect x="180" y="150" fill="#2c6194"/><rect x="190" y="150" fill="#3b5e94"/><rect x="200" y="150" fill="#4a5a94"/><rect x="210" y="150" fill="#5a5794"/><rect x="220" y="150" fill="#6a5394"/><rect x="230" y="150" fill="#7a4f94"/><rect x="240" y="150" fill="#8b4c94"/><rect x="250" y="150" fill="#94448d"/><rect x="260" y="150" fill="#943a7f"/><rect x="270" y="150" fill="#943273"/><rect x="280" y="150" fill="#942b69"/><rect x="290" y="150" fill="#942561"/><rect x="300" y="150" fill="#941f5a"/><rect x="310" y="150" fill="#941b53"/><rect x="320" y="150" fill="#94174e"/><rect x="330" y="150" fill="#941349"/><rect x="340" y="150" fill="#941044"/><rect x="350" y="150" fill="#940d40"/><rect x="360" y="150" fill="#940a3c"/><rect x="370" y="150" fill="#940839"/><rect x="380" y="150" fill="#940636"/><rect x="390" y="150" fill="#940433"/><rect x="400" y="150" fill="#940231"/><rect x="410" y="150" fill="#94002e"/><rect x="420" y="150" fill="#94002c"/><rect x="430" y="150" fill="#94002a"/><rect x="440" y="150" fill="#940028"/><rect x="450" y="150" fill="#940026"/><rect x="460" y="150" fill="#940025"/><rect x="470" y="150" fill="#940023"/><rect x="480" y="150" fill="#940022"/><rect x="490" y="150" fill="#940020"/><rect x="500" y="150" fill="#94001f"/><rect x="510" y="150" fill="#94001e"/><rect x="520" y="150" fill="#94001d"/><rect x="530" y="150" fill="#94001c"/><rect x="540" y="150" fill="#94001b"/><rect x="550" y="150" fill="#94001a"/><rect x="560" y="150" fill="#940019"/><rect x="570" y="150" fill="#940018"/><rect x="580" y="150" fill="#940017"/><rect x="590" y="150" fill="#940016"/><rect x="600" y="150" fill="#940015"/><rect x="610" y="150" fill="#940015"/><rect x="620" y="150" fill="#940014"/><rect x="630" y="150" fill="#940013"/><rect x="10" y="160" fill="#008694"/><rect x="20" y="160" fill="#008394"/><rect x="30" y="160" fill="#008194"/><rect x="40" y="160" fill="#007e94"/><rect x="50" y="160" fill="#007b94"/><rect x="60" y="160" fill="#007994"/><rect x="70" y="160" fill="#007694"/><rect x="80" y="160" fill="#007394"/><rect x="90" y="160" fill="#007194"/><rect x="100" y="160" fill="#006e94"/><rect x="110" y="160" fill="#006b94"/><rect x="120" y="160" fill="#006894"/><rect x="130" y="160" fill="#006594"/><rect x="140" y="160" fill="#006294"/><rect x="150" y="160" fill="#005f94"/><rect x="160" y="160" fill="#0b5c94"/><rect x="170" y="160" fill="#195994"/><rect x="180" y="160" fill="#265694"/><rect x="190" y="160" fill="#345294"/><rect x="200" y="160" fill="#424f94"/><rect x="210" y="160" fill="#514c94"/><rect x="220" y="160" fill="#5f4994"/><rect x="230" y="160" fill="#6e4594"/><rect x="240" y="160" fill="#7d4294"/><rect x="250" y="160" fill="#8c3e94"/><rect x="260" y="160" fill="#94378c"/><rect x="270" y="160" fill="#942f80"/><rect x="280" y="160" fill="#942875"/><rect x="290" y="160" fill="#94226b"/><rect x="300" y="160" fill="#941d63"/><rect x="310" y="160" fill="#94195c"/><rect x="320" y="160" fill="#941556"/><rect x="330" y="160" fill="#941150"/><rect x="340" y="160" fill="#940e4b"/><rect x="350" y="160" fill="#940b47"/><rect x="360" y="160" fill="#940843"/><rect x="370" y="160" fill="#94063f"/><rect x="380" y="160" fill="#94043c"/><rect x="390" y="160" fill="#940239"/><rect x="400" y="160" fill="#940036"/><rect x="410" y="160" fill="#940034"/><rect x="420" y="160" fill="#940031"/><rect x="430" y="160" fill="#94002f"/><rect x="440" y="160" fill="#94002d"/><rect x="450" y="160" fill="#94002b"/><rect x="460" y="160" fill="#940029"/><rect x="470" y="160" fill="#940027"/><rect x="480" y="160" fill="#940026"/><rect x="490" y="160" fill="#940024"/><rect x="500" y="160" fill="#940023"/><rect x="510" y="160" fill="#940022"/><rect x="520" y="160" fill="#940020"/><rect x="530" y="160" fill="#94001f"/><rect x="540" y="160" fill="#94001e"/><rect x="550" y="160" fill="#94001d"/><rect x="560" y="160" fill="#94001c"/><rect x="570" y="160" fill="#94001b"/><rect x="580" y="160" fill="#94001a"/><rect x="590" y="160" fill="#940019"/><rect x="600" y="160" fill="#940018"/><rect x="610" y="160" fill="#940017"/><rect x="620" y="160" fill="#940017"/><rect x="20" y="170" fill="#007894"/><rect x="30" y="170" fill="#007594"/><rect x="40" y="170" fill="#007394"/><rect x="50" y="170" fill="#007094"/><rect x="60" y="170" fill="#006e94"/><rect x="70" y="170" fill="#006b94"/><rect x="80" y="170" fill="#006894"/><rect x="90" y="170" fill="#006694"/><rect x="100" y="170" fill="#006394"/><rect x="110" y="170" fill="#006094"/><rect x="120" y="170" fill="#005e94"/><rect x="130" y="170" fill="#005b94"/><rect x="140" y="170" fill="#005894"/><rect x="150" y="170" fill="#005594"/><rect x="160" y="170" fill="#095294"/><rect x="170" y="170" fill="#154f94"/><rect x="180" y="170" fill="#224c94"/><rect x="190" y="170" fill="#2e4994"/><rect x="200" y="170" fill="#3b4694"/><rect x="210" y="170" fill="#494394"/><rect x="220" y="170" fill="#564094"/><rect x="230" y="170" fill="#643c94"/><rect x="240" y="170" fill="#713994"/><rect x="250" y="170" fill="#7f3694"/><rect x="260" y="170" fill="#8e3294"/><rect x="270" y="170" fill="#942c8c"/><rect x="280" y="170" fill="#942680"/><rect x="290" y="170" fill="#942076"/><rect x="300" y="170" fill="#941b6d"/><rect x="310" y="170" fill="#941665"/><rect x="320" y="170" fill="#94125e"/><rect x="330" y="170" fill="#940f58"/><rect x="340" y="170" fill="#940c53"/><rect x="350" y="170" fill="#94094e"/><rect x="360" y="170" fill="#94074a"/><rect x="370" y="170" fill="#940446"/><rect x="380" y="170" fill="#940242"/><rect x="390" y="170" fill="#94003f"/><rect x="400" y="170" fill="#94003c"/><rect x="410" y="170" fill="#940039"/><rect x="420" y="170" fill="#940036"/><rect x="430" y="170" fill="#940034"/><rect x="440" y="170" fill="#940032"/><rect x="450" y="170" fill="#94002f"/><rect x="460" y="170" fill="#94002d"/><rect x="470" y="170" fill="#94002c"/><rect x="480" y="170" fill="#94002a"/><rect x="490" y="170" fill="#940028"/><rect x="500" y="170" fill="#940027"/><rect x="510" y="170" fill="#940025"/><rect x="520" y="170" fill="#940024"/><rect x="530" y="170" fill="#940023"/><rect x="540" y="170" fill="#940021"/><rect x="550" y="170" fill="#940020"/><rect x="560" y="170" fill="#94001f"/><rect x="570" y="170" fill="#94001e"/><rect x="580" y="170" fill="#94001d"/><rect x="590" y="170" fill="#94001c"/><rect x="600" y="170" fill="#94001b"/><rect x="610" y="170" fill="#94001a"/><rect x="20" y="180" fill="#006d94"/><rect x="30" y="180" fill="#006b94"/><rect x="40" y="180" fill="#006994"/><rect x="50" y="180" fill="#006694"/><rect x="60" y="180" fill="#006494"/><rect x="70" y="180" fill="#006194"/><rect x="80" y="180" fill="#005f94"/><rect x="90" y="180" fill="#005c94"/><rect x="100" y="180" fill="#005a94"/><rect x="110" y="180" fill="#005794"/><rect x="120" y="180" fill="#005594"/><rect x="130" y="180" fill="#005294"/><rect x="140" y="180" fill="#004f94"/><rect x="150" y="180" fill="#004c94"/><rect x="160" y="180" fill="#064a94"/><rect x="170" y="180" fill="#124794"/><rect x="180" y="180" fill="#1e4494"/><rect x="190" y="180" fill="#2a4194"/><rect x="200" y="180" fill="#363e94"/><rect x="210" y="180" fill="#423b94"/><rect x="220" y="180" fill="#4e3894"/><rect x="230" y="180" fill="#5b3594"/><rect x="240" y="180" fill="#673294"/><rect x="250" y="180" fill="#742f94"/><rect x="260" y="180" fill="#822b94"/><rect x="270" y="180" fill="#8f2894"/><rect x="280" y="180" fill="#94238c"/><rect x="290" y="180" fill="#941d81"/><rect x="300" y="180" fill="#941877"/><rect x="310" y="180" fill="#94146e"/><rect x="320" y="180" fill="#941067"/><rect x="330" y="180" fill="#940d60"/><rect x="340" y="180" fill="#940a5a"/><rect x="350" y="180" fill="#940755"/><rect x="360" y="180" fill="#940550"/><rect x="370" y="180" fill="#94034c"/><rect x="380" y="180" fill="#940148"/><rect x="390" y="180" fill="#940045"/><rect x="400" y="180" fill="#940041"/><rect x="410" y="180" fill="#94003e"/><rect x="420" y="180" fill="#94003b"/><rect x="430" y="180" fill="#940039"/><rect x="440" y="180" fill="#940036"/><rect x="450" y="180" fill="#940034"/><rect x="460" y="180" fill="#940032"/><rect x="470" y="180" fill="#940030"/><rect x="480" y="180" fill="#94002e"/><rect x="490" y="180" fill="#94002c"/><rect x="500" y="180" fill="#94002b"/><rect x="510" y="180" fill="#940029"/><rect x="520" y="180" fill="#940028"/><rect x="530" y="180" fill="#940026"/><rect x="540" y="180" fill="#940025"/><rect x="550" y="180" fill="#940024"/><rect x="560" y="180" fill="#940022"/><rect x="570" y="180" fill="#940021"/><rect x="580" y="180" fill="#940020"/><rect x="590" y="180" fill="#94001f"/><rect x="600" y="180" fill="#94001e"/><rect x="30" y="190" fill="#006294"/><rect x="40" y="190" fill="#006094"/><rect x="50" y="190" fill="#005e94"/><rect x="60" y="190" fill="#005b94"/><rect x="70" y="190" fill="#005994"/><rect x="80" y="190" fill="#005694"/><rect x="90" y="190" fill="#005494"/><rect x="100" y="190" fill="#005294"/><rect x="110" y="190" fill="#004f94"/><rect x="120" y="190" fill="#004d94"/><rect x="130" y="190" fill="#004a94"/><rect x="140" y="190" fill="#004794"/><rect x="150" y="190" fill="#004594"/><rect x="160" y="190" fill="#044294"/><rect x="170" y="190" fill="#0f3f94"/><rect x="180" y="190" fill="#1a3d94"/><rect x="190" y="190" fill="#253a94"/><rect x="200" y="190" fill="#303794"/><rect x="210" y="190" fill="#3c3494"/><rect x="220" y="190" fill="#473194"/><rect x="230" y="190" fill="#532f94"/><rect x="240" y="190" fill="#5f2c94"/><rect x="250" y="190" fill="#6b2994"/><rect x="260" y="190" fill="#772694"/><rect x="270" y="190" fill="#832294"/><rect x="280" y="190" fill="#901f94"/><rect x="290" y="190" fill="#941b8c"/><rect x="300" y="190" fill="#941681"/><rect x="310" y="190" fill="#941278"/><rect x="320" y="190" fill="#940e70"/><rect x="330" y="190" fill="#940b69"/><rect x="340" y="190" fill="#940862"/><rect x="350" y="190" fill="#94055d"/><rect x="360" y="190" fill="#940357"/><rect x="370" y="190" fill="#940153"/><rect x="380" y="190" fill="#94004e"/><rect x="390" y="190" fill="#94004a"/><rect x="400" y="190" fill="#940047"/><rect x="410" y="190" fill="#940044"/><rect x="420" y="190" fill="#940041"/><rect x="430" y="190" fill="#94003e"/><rect x="440" y="190" fill="#94003b"/><rect x="450" y="190" fill="#940039"/><rect x="460" y="190" fill="#940036"/><rect x="470" y="190" fill="#940034"/><rect x="480" y="190" fill="#940032"/><rect x="490" y="190" fill="#940030"/><rect x="500" y="190" fill="#94002f"/><rect x="510" y="190" fill="#94002d"/><rect x="520" y="190" fill="#94002b"/><rect x="530" y="190" fill="#94002a"/><rect x="540" y="190" fill="#940028"/><rect x="550" y="190" fill="#940027"/><rect x="560" y="190" fill="#940026"/><rect x="570" y="190" fill="#940025"/><rect x="580" y="190" fill="#940023"/><rect x="590" y="190" fill="#940022"/><rect x="30" y="200" fill="#005a94"/><rect x="40" y="200" fill="#005894"/><rect x="50" y="200" fill="#005694"/><rect x="60" y="200" fill="#005494"/><rect x="70" y="200" fill="#005194"/><rect x="80" y="200" fill="#004f94"/><rect x="90" y="200" fill="#004d94"/><rect x="100" y="200" fill="#004a94"/><rect x="110" y="200" fill="#004894"/><rect x="120" y="200" fill="#004694"/><rect x="130" y="200" fill="#004394"/><rect x="140" y="200" fill="#004194"/><rect x="150" y="200" fill="#003e94"/><rect x="160" y="200" fill="#033c94"/><rect x="170" y="200" fill="#0d3994"/><rect x="180" y="200" fill="#173694"/><rect x="190" y="200" fill="#213494"/><rect x="200" y="200" fill="#2c3194"/><rect x="210" y="200" fill="#372e94"/><rect x="220" y="200" fill="#412c94"/><rect x="230" y="200" fill="#4c2994"/><rect x="240" y="200" fill="#572694"/><rect x="250" y="200" fill="#632394"/><rect x="260" y="200" fill="#6e2094"/><rect x="270" y="200" fill="#791d94"/><rect x="280" y="200" fill="#851a94"/><rect x="290" y="200" fill="#911794"/><rect x="300" y="200" fill="#94138b"/><rect x="310" y="200" fill="#940f81"/><rect x="320" y="200" fill="#940c79"/><rect x="330" y="200" fill="#940971"/><rect x="340" y="200" fill="#94066a"/><rect x="350" y="200" fill="#940364"/><rect x="360" y="200" fill="#94015e"/><rect x="370" y="200" fill="#940059"/><rect x="380" y="200" fill="#940055"/><rect x="390" y="200" fill="#940051"/><rect x="400" y="200" fill="#94004d"/><rect x="410" y="200" fill="#940049"/><rect x="420" y="200" fill="#940046"/><rect x="430" y="200" fill="#940043"/><rect x="440" y="200" fill="#940040"/><rect x="450" y="200" fill="#94003d"/><rect x="460" y="200" fill="#94003b"/><rect x="470" y="200" fill="#940039"/><rect x="480" y="200" fill="#940036"/><rect x="490" y="200" fill="#940034"/><rect x="500" y="200" fill="#940033"/><rect x="510" y="200" fill="#940031"/><rect x="520" y="200" fill="#94002f"/><rect x="530" y="200" fill="#94002d"/><rect x="540" y="200" fill="#94002c"/><rect x="550" y="200" fill="#94002a"/><rect x="560" y="200" fill="#940029"/><rect x="570" y="200" fill="#940028"/><rect x="580" y="200" fill="#940027"/><rect x="30" y="210" fill="#005394"/><rect x="40" y="210" fill="#005194"/><rect x="50" y="210" fill="#004f94"/><rect x="60" y="210" fill="#004d94"/><rect x="70" y="210" fill="#004b94"/><rect x="80" y="210" fill="#004894"/><rect x="90" y="210" fill="#004694"/><rect x="100" y="210" fill="#004494"/><rect x="110" y="210" fill="#004294"/><rect x="120" y="210" fill="#003f94"/><rect x="130" y="210" fill="#003d94"/><rect x="140" y="210" fill="#003b94"/><rect x="150" y="210" fill="#003894"/><rect x="160" y="210" fill="#013694"/><rect x="170" y="210" fill="#0b3394"/><rect x="180" y="210" fill="#143194"/><rect x="190" y="210" fill="#1e2e94"/><rect x="200" y="210" fill="#282c94"/><rect x="210" y="210" fill="#322994"/><rect x="220" y="210" fill="#3c2694"/><rect x="230" y="210" fill="#462494"/><rect x="240" y="210" fill="#512194"/><rect x="250" y="210" fill="#5b1e94"/><rect x="260" y="210" fill="#661c94"/><rect x="270" y="210" fill="#711994"/><rect x="280" y="210" fill="#7c1694"/><rect x="290" y="210" fill="#871394"/><rect x="300" y="210" fill="#921094"/><rect x="310" y="210" fill="#940d8b"/><rect x="320" y="210" fill="#940982"/><rect x="330" y="210" fill="#94067a"/><rect x="340" y="210" fill="#940472"/><rect x="350" y="210" fill="#94016b"/><rect x="360" y="210" fill="#940065"/><rect x="370" y="210" fill="#940060"/><rect x="380" y="210" fill="#94005b"/><rect x="390" y="210" fill="#940057"/><rect x="400" y="210" fill="#940052"/><rect x="410" y="210" fill="#94004f"/><rect x="420" y="210" fill="#94004b"/><rect x="430" y="210" fill="#940048"/><rect x="440" y="210" fill="#940045"/><rect x="450" y="210" fill="#940042"/><rect x="460" y="210" fill="#94003f"/><rect x="470" y="210" fill="#94003d"/><rect x="480" y="210" fill="#94003b"/><rect x="490" y="210" fill="#940039"/><rect x="500" y="210" fill="#940037"/><rect x="510" y="210" fill="#940035"/><rect x="520" y="210" fill="#940033"/><rect x="530" y="210" fill="#940031"/><rect x="540" y="210" fill="#94002f"/><rect x="550" y="210" fill="#94002e"/><rect x="560" y="210" fill="#94002c"/><rect x="570" y="210" fill="#94002b"/><rect x="40" y="220" fill="#004b94"/><rect x="50" y="220" fill="#004994"/><rect x="60" y="220" fill="#004794"/><rect x="70" y="220" fill="#004594"/><rect x="80" y="220" fill="#004294"/><rect x="90" y="220" fill="#004094"/><rect x="100" y="220" fill="#003e94"/><rect x="110" y="220" fill="#003c94"/><rect x="120" y="220" fill="#003a94"/><rect x="130" y="220" fill="#003794"/><rect x="140" y="220" fill="#003594"/><rect x="150" y="220" fill="#003394"/><rect x="160" y="220" fill="#003094"/><rect x="170" y="220" fill="#092e94"/><rect x="180" y="220" fill="#122c94"/><rect x="190" y="220" fill="#1b2994"/><rect x="200" y="220" fill="#242794"/><rect x="210" y="220" fill="#2e2494"/><rect x="220" y="220" fill="#372294"/><rect x="230" y="220" fill="#411f94"/><rect x="240" y="220" fill="#4b1d94"/><rect x="250" y="220" fill="#551a94"/><rect x="260" y="220" fill="#5f1894"/><rect x="270" y="220" fill="#691594"/><rect x="280" y="220" fill="#731294"/><rect x="290" y="220" fill="#7d1094"/><rect x="300" y="220" fill="#880d94"/><rect x="310" y="220" fill="#920a94"/><rect x="320" y="220" fill="#94078b"/><rect x="330" y="220" fill="#940482"/><rect x="340" y="220" fill="#94017a"/><rect x="350" y="220" fill="#940073"/><rect x="360" y="220" fill="#94006d"/><rect x="370" y="220" fill="#940067"/><rect x="380" y="220" fill="#940062"/><rect x="390" y="220" fill="#94005d"/><rect x="400" y="220" fill="#940058"/><rect x="410" y="220" fill="#940054"/><rect x="420" y="220" fill="#940051"/><rect x="430" y="220" fill="#94004d"/><rect x="440" y="220" fill="#94004a"/><rect x="450" y="220" fill="#940047"/><rect x="460" y="220" fill="#940044"/><rect x="470" y="220" fill="#940041"/><rect x="480" y="220" fill="#94003f"/><rect x="490" y="220" fill="#94003d"/><rect x="500" y="220" fill="#94003b"/><rect x="510" y="220" fill="#940038"/><rect x="520" y="220" fill="#940037"/><rect x="530" y="220" fill="#940035"/><rect x="540" y="220" fill="#940033"/><rect x="550" y="220" fill="#940031"/><rect x="560" y="220" fill="#940030"/><rect x="40" y="230" fill="#004594"/><rect x="50" y="230" fill="#004394"/><rect x="60" y="230" fill="#004194"/><rect x="70" y="230" fill="#003f94"/><rect x="80" y="230" fill="#003d94"/><rect x="90" y="230" fill="#003b94"/><rect x="100" y="230" fill="#003994"/><rect x="110" y="230" fill="#003794"/><rect x="120" y="230" fill="#003594"/><rect x="130" y="230" fill="#003294"/><rect x="140" y="230" fill="#003094"/><rect x="150" y="230" fill="#002e94"/><rect x="160" y="230" fill="#002c94"/><rect x="170" y="230" fill="#072994"/><rect x="180" y="230" fill="#102794"/><rect x="190" y="230" fill="#182594"/><rect x="200" y="230" fill="#212394"/><rect x="210" y="230" fill="#2a2094"/><rect x="220" y="230" fill="#331e94"/><rect x="230" y="230" fill="#3c1b94"/><rect x="240" y="230" fill="#461994"/><rect x="250" y="230" fill="#4f1794"/><rect x="260" y="230" fill="#581494"/><rect x="270" y="230" fill="#621294"/><rect x="280" y="230" fill="#6c0f94"/><rect x="290" y="230" fill="#750c94"/><rect x="300" y="230" fill="#7f0a94"/><rect x="310" y="230" fill="#890794"/><rect x="320" y="230" fill="#930594"/><rect x="330" y="230" fill="#94028b"/><rect x="340" y="230" fill="#940082"/><rect x="350" y="230" fill="#94007b"/><rect x="360" y="230" fill="#940074"/><rect x="370" y="230" fill="#94006e"/><rect x="380" y="230" fill="#940068"/><rect x="390" y="230" fill="#940063"/><rect x="400" y="230" fill="#94005e"/><rect x="410" y="230" fill="#94005a"/><rect x="420" y="230" fill="#940056"/><rect x="430" y="230" fill="#940052"/><rect x="440" y="230" fill="#94004f"/><rect x="450" y="230" fill="#94004c"/><rect x="460" y="230" fill="#940049"/><rect x="470" y="230" fill="#940046"/><rect x="480" y="230" fill="#940043"/><rect x="490" y="230" fill="#940041"/><rect x="500" y="230" fill="#94003f"/><rect x="510" y="230" fill="#94003c"/><rect x="520" y="230" fill="#94003a"/><rect x="530" y="230" fill="#940038"/><rect x="540" y="230" fill="#940037"/><rect x="550" y="230" fill="#940035"/><rect x="560" y="230" fill="#940033"/><rect x="50" y="240" fill="#003e94"/><rect x="60" y="240" fill="#003c94"/><rect x="70" y="240" fill="#003a94"/><rect x="80" y="240" fill="#003894"/><rect x="90" y="240" fill="#003694"/><rect x="100" y="240" fill="#003494"/><rect x="110" y="240" fill="#003294"/><rect x="120" y="240" fill="#003094"/><rect x="130" y="240" fill="#002e94"/><rect x="140" y="240" fill="#002c94"/><rect x="150" y="240" fill="#002a94"/><rect x="160" y="240" fill="#002794"/><rect x="170" y="240" fill="#052594"/><rect x="180" y="240" fill="#0e2394"/><rect x="190" y="240" fill="#162194"/><rect x="200" y="240" fill="#1e1f94"/><rect x="210" y="240" fill="#271c94"/><rect x="220" y="240" fill="#2f1a94"/><rect x="230" y="240" fill="#381894"/><rect x="240" y="240" fill="#411594"/><rect x="250" y="240" fill="#4a1394"/><rect x="260" y="240" fill="#531194"/><rect x="270" y="240" fill="#5c0e94"/><rect x="280" y="240" fill="#650c94"/><rect x="290" y="240" fill="#6e0994"/><rect x="300" y="240" fill="#770794"/><rect x="310" y="240" fill="#810594"/><rect x="320" y="240" fill="#8a0294"/><rect x="330" y="240" fill="#940094"/><rect x="340" y="240" fill="#94008b"/><rect x="350" y="240" fill="#940083"/><rect x="360" y="240" fill="#94007b"/><rect x="370" y="240" fill="#940075"/><rect x="380" y="240" fill="#94006f"/><rect x="390" y="240" fill="#940069"/><rect x="400" y="240" fill="#940064"/><rect x="410" y="240" fill="#940060"/><rect x="420" y="240" fill="#94005c"/><rect x="430" y="240" fill="#940058"/><rect x="440" y="240" fill="#940054"/><rect x="450" y="240" fill="#940051"/><rect x="460" y="240" fill="#94004d"/><rect x="470" y="240" fill="#94004b"/><rect x="480" y="240" fill="#940048"/><rect x="490" y="240" fill="#940045"/><rect x="500" y="240" fill="#940043"/><rect x="510" y="240" fill="#940040"/><rect x="520" y="240" fill="#94003e"/><rect x="530" y="240" fill="#94003c"/><rect x="540" y="240" fill="#94003a"/><rect x="550" y="240" fill="#940038"/><rect x="50" y="250" fill="#003994"/><rect x="60" y="250" fill="#003894"/><rect x="70" y="250" fill="#003694"/><rect x="80" y="250" fill="#003494"/><rect x="90" y="250" fill="#003294"/><rect x="100" y="250" fill="#003094"/><rect x="110" y="250" fill="#002e94"/><rect x="120" y="250" fill="#002c94"/><rect x="130" y="250" fill="#002a94"/><rect x="140" y="250" fill="#002894"/><rect x="150" y="250" fill="#002694"/><rect x="160" y="250" fill="#002494"/><rect x="170" y="250" fill="#042294"/><rect x="180" y="250" fill="#0c1f94"/><rect x="190" y="250" fill="#141d94"/><rect x="200" y="250" fill="#1c1b94"/><rect x="210" y="250" fill="#241994"/><rect x="220" y="250" fill="#2c1794"/><rect x="230" y="250" fill="#341594"/><rect x="240" y="250" fill="#3d1294"/><rect x="250" y="250" fill="#451094"/><rect x="260" y="250" fill="#4d0e94"/><rect x="270" y="250" fill="#560c94"/><rect x="280" y="250" fill="#5f0994"/><rect x="290" y="250" fill="#670794"/><rect x="300" y="250" fill="#700494"/><rect x="310" y="250" fill="#790294"/><rect x="320" y="250" fill="#820094"/><rect x="330" y="250" fill="#8b0094"/><rect x="340" y="250" fill="#940093"/><rect x="350" y="250" fill="#94008b"/><rect x="360" y="250" fill="#940083"/><rect x="370" y="250" fill="#94007c"/><rect x="380" y="250" fill="#940076"/><rect x="390" y="250" fill="#940070"/><rect x="400" y="250" fill="#94006a"/><rect x="410" y="250" fill="#940066"/><rect x="420" y="250" fill="#940061"/><rect x="430" y="250" fill="#94005d"/><rect x="440" y="250" fill="#940059"/><rect x="450" y="250" fill="#940056"/><rect x="460" y="250" fill="#940052"/><rect x="470" y="250" fill="#94004f"/><rect x="480" y="250" fill="#94004c"/><rect x="490" y="250" fill="#940049"/><rect x="500" y="250" fill="#940047"/><rect x="510" y="250" fill="#940044"/><rect x="520" y="250" fill="#940042"/><rect x="530" y="250" fill="#940040"/><rect x="540" y="250" fill="#94003e"/><rect x="60" y="260" fill="#003394"/><rect x="70" y="260" fill="#003194"/><rect x="80" y="260" fill="#003094"/><rect x="90" y="260" fill="#002e94"/><rect x="100" y="260" fill="#002c94"/><rect x="110" y="260" fill="#002a94"/><rect x="120" y="260" fill="#002894"/><rect x="130" y="260" fill="#002694"/><rect x="140" y="260" fill="#002494"/><rect x="150" y="260" fill="#002294"/><rect x="160" y="260" fill="#002094"/><rect x="170" y="260" fill="#031e94"/><rect x="180" y="260" fill="#0a1c94"/><rect x="190" y="260" fill="#121a94"/><rect x="200" y="260" fill="#191894"/><rect x="210" y="260" fill="#211694"/><rect x="220" y="260" fill="#291494"/><rect x="230" y="260" fill="#311294"/><rect x="240" y="260" fill="#390f94"/><rect x="250" y="260" fill="#410d94"/><rect x="260" y="260" fill="#490b94"/><rect x="270" y="260" fill="#510994"/><rect x="280" y="260" fill="#590794"/><rect x="290" y="260" fill="#610494"/><rect x="300" y="260" fill="#6a0294"/><rect x="310" y="260" fill="#720094"/><rect x="320" y="260" fill="#7b0094"/><rect x="330" y="260" fill="#830094"/><rect x="340" y="260" fill="#8c0094"/><rect x="350" y="260" fill="#940093"/><rect x="360" y="260" fill="#94008b"/><rect x="370" y="260" fill="#940083"/><rect x="380" y="260" fill="#94007c"/><rect x="390" y="260" fill="#940076"/><rect x="400" y="260" fill="#940071"/><rect x="410" y="260" fill="#94006c"/><rect x="420" y="260" fill="#940067"/><rect x="430" y="260" fill="#940062"/><rect x="440" y="260" fill="#94005e"/><rect x="450" y="260" fill="#94005b"/><rect x="460" y="260" fill="#940057"/><rect x="470" y="260" fill="#940054"/><rect x="480" y="260" fill="#940051"/><rect x="490" y="260" fill="#94004e"/><rect x="500" y="260" fill="#94004b"/><rect x="510" y="260" fill="#940048"/><rect x="520" y="260" fill="#940046"/><rect x="530" y="260" fill="#940044"/><rect x="60" y="270" fill="#002f94"/><rect x="70" y="270" fill="#002e94"/><rect x="80" y="270" fill="#002c94"/><rect x="90" y="270" fill="#002a94"/><rect x="100" y="270" fill="#002894"/><rect x="110" y="270" fill="#002694"/><rect x="120" y="270" fill="#002494"/><rect x="130" y="270" fill="#002394"/><rect x="140" y="270" fill="#002194"/><rect x="150" y="270" fill="#001f94"/><rect x="160" y="270" fill="#001d94"/><rect x="170" y="270" fill="#011b94"/><rect x="180" y="270" fill="#091994"/><rect x="190" y="270" fill="#101794"/><rect x="200" y="270" fill="#171594"/><rect x="210" y="270" fill="#1f1394"/><rect x="220" y="270" fill="#261194"/><rect x="230" y="270" fill="#2d0f94"/><rect x="240" y="270" fill="#350d94"/><rect x="250" y="270" fill="#3d0b94"/><rect x="260" y="270" fill="#440994"/><rect x="270" y="270" fill="#4c0794"/><rect x="280" y="270" fill="#540494"/><rect x="290" y="270" fill="#5c0294"/><rect x="300" y="270" fill="#640094"/><rect x="310" y="270" fill="#6c0094"/><rect x="320" y="270" fill="#740094"/><rect x="330" y="270" fill="#7c0094"/><rect x="340" y="270" fill="#850094"/><rect x="350" y="270" fill="#8d0094"/><rect x="360" y="270" fill="#940092"/><rect x="370" y="270" fill="#94008b"/><rect x="380" y="270" fill="#940083"/><rect x="390" y="270" fill="#94007d"/><rect x="400" y="270" fill="#940077"/><rect x="410" y="270" fill="#940072"/><rect x="420" y="270" fill="#94006d"/><rect x="430" y="270" fill="#940068"/><rect x="440" y="270" fill="#940064"/><rect x="450" y="270" fill="#940060"/><rect x="460" y="270" fill="#94005c"/><rect x="470" y="270" fill="#940058"/><rect x="480" y="270" fill="#940055"/><rect x="490" y="270" fill="#940052"/><rect x="500" y="270" fill="#94004f"/><rect x="510" y="270" fill="#94004d"/><rect x="520" y="270" fill="#94004a"/><rect x="70" y="280" fill="#002a94"/><rect x="80" y="280" fill="#002894"/><rect x="90" y="280" fill="#002794"/><rect x="100" y="280" fill="#002594"/><rect x="110" y="280" fill="#002394"/><rect x="120" y="280" fill="#002194"/><rect x="130" y="280" fill="#001f94"/><rect x="140" y="280" fill="#001e94"/><rect x="150" y="280" fill="#001c94"/><rect x="160" y="280" fill="#001a94"/><rect x="170" y="280" fill="#001894"/><rect x="180" y="280" fill="#071694"/><rect x="190" y="280" fill="#0e1494"/><rect x="200" y="280" fill="#151294"/><rect x="210" y="280" fill="#1c1094"/><rect x="220" y="280" fill="#230e94"/><rect x="230" y="280" fill="#2b0c94"/><rect x="240" y="280" fill="#320a94"/><rect x="250" y="280" fill="#390894"/><rect x="260" y="280" fill="#400694"/><rect x="270" y="280" fill="#480494"/><rect x="280" y="280" fill="#4f0294"/><rect x="290" y="280" fill="#570094"/><rect x="300" y="280" fill="#5f0094"/><rect x="310" y="280" fill="#660094"/><rect x="320" y="280" fill="#6e0094"/><rect x="330" y="280" fill="#760094"/><rect x="340" y="280" fill="#7e0094"/><rect x="350" y="280" fill="#860094"/><rect x="360" y="280" fill="#8e0094"/><rect x="370" y="280" fill="#940092"/><rect x="380" y="280" fill="#94008a"/><rect x="390" y="280" fill="#940084"/><rect x="400" y="280" fill="#94007d"/><rect x="410" y="280" fill="#940078"/><rect x="420" y="280" fill="#940072"/><rect x="430" y="280" fill="#94006d"/><rect x="440" y="280" fill="#940069"/><rect x="450" y="280" fill="#940065"/><rect x="460" y="280" fill="#940061"/><rect x="470" y="280" fill="#94005d"/><rect x="480" y="280" fill="#94005a"/><rect x="490" y="280" fill="#940057"/><rect x="500" y="280" fill="#940054"/><rect x="510" y="280" fill="#940051"/><rect x="70" y="290" fill="#002794"/><rect x="80" y="290" fill="#002594"/><rect x="90" y="290" fill="#002394"/><rect x="100" y="290" fill="#002294"/><rect x="110" y="290" fill="#002094"/><rect x="120" y="290" fill="#001e94"/><rect x="130" y="290" fill="#001d94"/><rect x="140" y="290" fill="#001b94"/><rect x="150" y="290" fill="#001994"/><rect x="160" y="290" fill="#001794"/><rect x="170" y="290" fill="#001594"/><rect x="180" y="290" fill="#061494"/><rect x="190" y="290" fill="#0d1294"/><rect x="200" y="290" fill="#131094"/><rect x="210" y="290" fill="#1a0e94"/><rect x="220" y="290" fill="#210c94"/><rect x="230" y="290" fill="#280a94"/><rect x="240" y="290" fill="#2f0894"/><rect x="250" y="290" fill="#360694"/><rect x="260" y="290" fill="#3d0494"/><rect x="270" y="290" fill="#440294"/><rect x="280" y="290" fill="#4b0094"/><rect x="290" y="290" fill="#520094"/><rect x="300" y="290" fill="#5a0094"/><rect x="310" y="290" fill="#610094"/><rect x="320" y="290" fill="#680094"/><rect x="330" y="290" fill="#700094"/><rect x="340" y="290" fill="#770094"/><rect x="350" y="290" fill="#7f0094"/><rect x="360" y="290" fill="#870094"/><rect x="370" y="290" fill="#8e0094"/><rect x="380" y="290" fill="#940092"/><rect x="390" y="290" fill="#94008a"/><rect x="400" y="290" fill="#940084"/><rect x="410" y="290" fill="#94007e"/><rect x="420" y="290" fill="#940078"/><rect x="430" y="290" fill="#940073"/><rect x="440" y="290" fill="#94006e"/><rect x="450" y="290" fill="#94006a"/><rect x="460" y="290" fill="#940066"/><rect x="470" y="290" fill="#940062"/><rect x="480" y="290" fill="#94005e"/><rect x="490" y="290" fill="#94005b"/><rect x="500" y="290" fill="#940058"/><rect x="80" y="300" fill="#002294"/><rect x="90" y="300" fill="#002194"/><rect x="100" y="300" fill="#001f94"/><rect x="110" y="300" fill="#001d94"/><rect x="120" y="300" fill="#001c94"/><rect x="130" y="300" fill="#001a94"/><rect x="140" y="300" fill="#001894"/><rect x="150" y="300" fill="#001694"/><rect x="160" y="300" fill="#001594"/><rect x="170" y="300" fill="#001394"/><rect x="180" y="300" fill="#051194"/><rect x="190" y="300" fill="#0b0f94"/><rect x="200" y="300" fill="#120e94"/><rect x="210" y="300" fill="#180c94"/><rect x="220" y="300" fill="#1f0a94"/><rect x="230" y="300" fill="#250894"/><rect x="240" y="300" fill="#2c0694"/><rect x="250" y="300" fill="#330494"/><rect x="260" y="300" fill="#390294"/><rect x="270" y="300" fill="#400194"/><rect x="280" y="300" fill="#470094"/><rect x="290" y="300" fill="#4e0094"/><rect x="300" y="300" fill="#550094"/><rect x="310" y="300" fill="#5c0094"/><rect x="320" y="300" fill="#630094"/><rect x="330" y="300" fill="#6a0094"/><rect x="340" y="300" fill="#720094"/><rect x="350" y="300" fill="#790094"/><rect x="360" y="300" fill="#800094"/><rect x="370" y="300" fill="#880094"/><rect x="380" y="300" fill="#8f0094"/><rect x="390" y="300" fill="#940091"/><rect x="400" y="300" fill="#94008a"/><rect x="410" y="300" fill="#940084"/><rect x="420" y="300" fill="#94007e"/><rect x="430" y="300" fill="#940079"/><rect x="440" y="300" fill="#940074"/><rect x="450" y="300" fill="#94006f"/><rect x="460" y="300" fill="#94006b"/><rect x="470" y="300" fill="#940067"/><rect x="480" y="300" fill="#940063"/><rect x="490" y="300" fill="#94005f"/><rect x="80" y="310" fill="#001f94"/><rect x="90" y="310" fill="#001e94"/><rect x="100" y="310" fill="#001c94"/><rect x="110" y="310" fill="#001b94"/><rect x="120" y="310" fill="#001994"/><rect x="130" y="310" fill="#001794"/><rect x="140" y="310" fill="#001694"/><rect x="150" y="310" fill="#001494"/><rect x="160" y="310" fill="#001294"/><rect x="170" y="310" fill="#001194"/><rect x="180" y="310" fill="#040f94"/><rect x="190" y="310" fill="#0a0d94"/><rect x="200" y="310" fill="#100b94"/><rect x="210" y="310" fill="#160a94"/><rect x="220" y="310" fill="#1d0894"/><rect x="230" y="310" fill="#230694"/><rect x="240" y="310" fill="#290494"/><rect x="250" y="310" fill="#300294"/><rect x="260" y="310" fill="#360194"/><rect x="270" y="310" fill="#3d0094"/><rect x="280" y="310" fill="#440094"/><rect x="290" y="310" fill="#4a0094"/><rect x="300" y="310" fill="#510094"/><rect x="310" y="310" fill="#580094"/><rect x="320" y="310" fill="#5e0094"/><rect x="330" y="310" fill="#650094"/><rect x="340" y="310" fill="#6c0094"/><rect x="350" y="310" fill="#730094"/><rect x="360" y="310" fill="#7a0094"/><rect x="370" y="310" fill="#810094"/><rect x="380" y="310" fill="#880094"/><rect x="390" y="310" fill="#900094"/><rect x="400" y="310" fill="#940091"/><rect x="410" y="310" fill="#94008a"/><rect x="420" y="310" fill="#940084"/><rect x="430" y="310" fill="#94007e"/><rect x="440" y="310" fill="#940079"/><rect x="450" y="310" fill="#940074"/><rect x="460" y="310" fill="#940070"/><rect x="470" y="310" fill="#94006c"/><rect x="480" y="310" fill="#940068"/><rect x="90" y="320" fill="#001b94"/><rect x="100" y="320" fill="#001a94"/><rect x="110" y="320" fill="#001894"/><rect x="120" y="320" fill="#001794"/><rect x="130" y="320" fill="#001594"/><rect x="140" y="320" fill="#001394"/><rect x="150" y="320" fill="#001294"/><rect x="160" y="320" fill="#001094"/><rect x="170" y="320" fill="#000e94"/><rect x="180" y="320" fill="#030d94"/><rect x="190" y="320" fill="#090b94"/><rect x="200" y="320" fill="#0f0994"/><rect x="210" y="320" fill="#150894"/><rect x="220" y="320" fill="#1b0694"/><rect x="230" y="320" fill="#210494"/><rect x="240" y="320" fill="#270394"/><rect x="250" y="320" fill="#2d0194"/><rect x="260" y="320" fill="#330094"/><rect x="270" y="320" fill="#3a0094"/><rect x="280" y="320" fill="#400094"/><rect x="290" y="320" fill="#470094"/><rect x="300" y="320" fill="#4d0094"/><rect x="310" y="320" fill="#540094"/><rect x="320" y="320" fill="#5a0094"/><rect x="330" y="320" fill="#610094"/><rect x="340" y="320" fill="#670094"/><rect x="350" y="320" fill="#6e0094"/><rect x="360" y="320" fill="#750094"/><rect x="370" y="320" fill="#7c0094"/><rect x="380" y="320" fill="#820094"/><rect x="390" y="320" fill="#890094"/><rect x="400" y="320" fill="#900094"/><rect x="410" y="320" fill="#940091"/><rect x="420" y="320" fill="#94008a"/><rect x="430" y="320" fill="#940084"/><rect x="440" y="320" fill="#94007f"/><rect x="450" y="320" fill="#94007a"/><rect x="460" y="320" fill="#940075"/><rect x="470" y="320" fill="#940071"/><rect x="100" y="330" fill="#001794"/><rect x="110" y="330" fill="#001694"/><rect x="120" y="330" fill="#001494"/><rect x="130" y="330" fill="#001394"/><rect x="140" y="330" fill="#001194"/><rect x="150" y="330" fill="#001094"/><rect x="160" y="330" fill="#000e94"/><rect x="170" y="330" fill="#000c94"/><rect x="180" y="330" fill="#020b94"/><rect x="190" y="330" fill="#070994"/><rect x="200" y="330" fill="#0d0894"/><rect x="210" y="330" fill="#130694"/><rect x="220" y="330" fill="#190494"/><rect x="230" y="330" fill="#1f0394"/><rect x="240" y="330" fill="#250194"/><rect x="250" y="330" fill="#2b0094"/><rect x="260" y="330" fill="#310094"/><rect x="270" y="330" fill="#370094"/><rect x="280" y="330" fill="#3d0094"/><rect x="290" y="330" fill="#430094"/><rect x="300" y="330" fill="#490094"/><rect x="310" y="330" fill="#500094"/><rect x="320" y="330" fill="#560094"/><rect x="330" y="330" fill="#5c0094"/><rect x="340" y="330" fill="#630094"/><rect x="350" y="330" fill="#690094"/><rect x="360" y="330" fill="#700094"/><rect x="370" y="330" fill="#760094"/><rect x="380" y="330" fill="#7d0094"/><rect x="390" y="330" fill="#830094"/><rect x="400" y="330" fill="#8a0094"/><rect x="410" y="330" fill="#910094"/><rect x="420" y="330" fill="#940090"/><rect x="430" y="330" fill="#94008a"/><rect x="440" y="330" fill="#940084"/><rect x="450" y="330" fill="#94007f"/><rect x="460" y="330" fill="#94007a"/><rect x="100" y="340" fill="#001594"/><rect x="110" y="340" fill="#001494"/><rect x="120" y="340" fill="#001294"/><rect x="130" y="340" fill="#001194"/><rect x="140" y="340" fill="#000f94"/><rect x="150" y="340" fill="#000e94"/><rect x="160" y="340" fill="#000c94"/><rect x="170" y="340" fill="#000b94"/><rect x="180" y="340" fill="#010994"/><rect x="190" y="340" fill="#060794"/><rect x="200" y="340" fill="#0c0694"/><rect x="210" y="340" fill="#120494"/><rect x="220" y="340" fill="#170394"/><rect x="230" y="340" fill="#1d0194"/><rect x="240" y="340" fill="#230094"/><rect x="250" y="340" fill="#280094"/><rect x="260" y="340" fill="#2e0094"/><rect x="270" y="340" fill="#340094"/><rect x="280" y="340" fill="#3a0094"/><rect x="290" y="340" fill="#400094"/><rect x="300" y="340" fill="#460094"/><rect x="310" y="340" fill="#4c0094"/><rect x="320" y="340" fill="#520094"/><rect x="330" y="340" fill="#580094"/><rect x="340" y="340" fill="#5e0094"/><rect x="350" y="340" fill="#650094"/><rect x="360" y="340" fill="#6b0094"/><rect x="370" y="340" fill="#710094"/><rect x="380" y="340" fill="#770094"/><rect x="390" y="340" fill="#7e0094"/><rect x="400" y="340" fill="#840094"/><rect x="410" y="340" fill="#8b0094"/><rect x="420" y="340" fill="#910094"/><rect x="430" y="340" fill="#940090"/><rect x="440" y="340" fill="#94008a"/><rect x="450" y="340" fill="#940085"/><rect x="460" y="340" fill="#94007f"/><rect x="110" y="350" fill="#001294"/><rect x="120" y="350" fill="#001094"/><rect x="130" y="350" fill="#000f94"/><rect x="140" y="350" fill="#000d94"/><rect x="150" y="350" fill="#000c94"/><rect x="160" y="350" fill="#000a94"/><rect x="170" y="350" fill="#000994"/><rect x="180" y="350" fill="#000794"/><rect x="190" y="350" fill="#050694"/><rect x="200" y="350" fill="#0b0494"/><rect x="210" y="350" fill="#100394"/><rect x="220" y="350" fill="#160194"/><rect x="230" y="350" fill="#1b0094"/><rect x="240" y="350" fill="#210094"/><rect x="250" y="350" fill="#260094"/><rect x="260" y="350" fill="#2c0094"/><rect x="270" y="350" fill="#320094"/><rect x="280" y="350" fill="#370094"/><rect x="290" y="350" fill="#3d0094"/><rect x="300" y="350" fill="#430094"/><rect x="310" y="350" fill="#490094"/><rect x="320" y="350" fill="#4f0094"/><rect x="330" y="350" fill="#540094"/><rect x="340" y="350" fill="#5a0094"/><rect x="350" y="350" fill="#600094"/><rect x="360" y="350" fill="#660094"/><rect x="370" y="350" fill="#6c0094"/><rect x="380" y="350" fill="#730094"/><rect x="390" y="350" fill="#790094"/><rect x="400" y="350" fill="#7f0094"/><rect x="410" y="350" fill="#850094"/><rect x="420" y="350" fill="#8b0094"/><rect x="430" y="350" fill="#920094"/><rect x="440" y="350" fill="#940090"/><rect x="450" y="350" fill="#94008a"/><rect x="110" y="360" fill="#001094"/><rect x="120" y="360" fill="#000e94"/><rect x="130" y="360" fill="#000d94"/><rect x="140" y="360" fill="#000c94"/><rect x="150" y="360" fill="#000a94"/><rect x="160" y="360" fill="#000994"/><rect x="170" y="360" fill="#000794"/><rect x="180" y="360" fill="#000694"/><rect x="190" y="360" fill="#040494"/><rect x="200" y="360" fill="#0a0394"/><rect x="210" y="360" fill="#0f0194"/><rect x="220" y="360" fill="#140094"/><rect x="230" y="360" fill="#1a0094"/><rect x="240" y="360" fill="#1f0094"/><rect x="250" y="360" fill="#240094"/><rect x="260" y="360" fill="#2a0094"/><rect x="270" y="360" fill="#2f0094"/><rect x="280" y="360" fill="#350094"/><rect x="290" y="360" fill="#3a0094"/><rect x="300" y="360" fill="#400094"/><rect x="310" y="360" fill="#460094"/><rect x="320" y="360" fill="#4b0094"/><rect x="330" y="360" fill="#510094"/><rect x="340" y="360" fill="#570094"/><rect x="350" y="360" fill="#5c0094"/><rect x="360" y="360" fill="#620094"/><rect x="370" y="360" fill="#680094"/><rect x="380" y="360" fill="#6e0094"/><rect x="390" y="360" fill="#740094"/><rect x="400" y="360" fill="#7a0094"/><rect x="410" y="360" fill="#800094"/><rect x="420" y="360" fill="#860094"/><rect x="430" y="360" fill="#8c0094"/><rect x="440" y="360" fill="#920094"/><rect x="120" y="370" fill="#000d94"/><rect x="130" y="370" fill="#000b94"/><rect x="140" y="370" fill="#000a94"/><rect x="150" y="370" fill="#000894"/><rect x="160" y="370" fill="#000794"/><rect x="170" y="370" fill="#000694"/><rect x="180" y="370" fill="#000494"/><rect x="190" y="370" fill="#030394"/><rect x="200" y="370" fill="#090194"/><rect x="210" y="370" fill="#0e0094"/><rect x="220" y="370" fill="#130094"/><rect x="230" y="370" fill="#180094"/><rect x="240" y="370" fill="#1d0094"/><rect x="250" y="370" fill="#220094"/><rect x="260" y="370" fill="#280094"/><rect x="270" y="370" fill="#2d0094"/><rect x="280" y="370" fill="#320094"/><rect x="290" y="370" fill="#380094"/><rect x="300" y="370" fill="#3d0094"/><rect x="310" y="370" fill="#430094"/><rect x="320" y="370" fill="#480094"/><rect x="330" y="370" fill="#4e0094"/><rect x="340" y="370" fill="#530094"/><rect x="350" y="370" fill="#590094"/><rect x="360" y="370" fill="#5e0094"/><rect x="370" y="370" fill="#640094"/><rect x="380" y="370" fill="#6a0094"/><rect x="390" y="370" fill="#6f0094"/><rect x="400" y="370" fill="#750094"/><rect x="410" y="370" fill="#7b0094"/><rect x="420" y="370" fill="#810094"/><rect x="430" y="370" fill="#870094"/><rect x="130" y="380" fill="#000a94"/><rect x="140" y="380" fill="#000894"/><rect x="150" y="380" fill="#000794"/><rect x="160" y="380" fill="#000694"/><rect x="170" y="380" fill="#000494"/><rect x="180" y="380" fill="#000394"/><rect x="190" y="380" fill="#030194"/><rect x="200" y="380" fill="#080094"/><rect x="210" y="380" fill="#0c0094"/><rect x="220" y="380" fill="#110094"/><rect x="230" y="380" fill="#170094"/><rect x="240" y="380" fill="#1c0094"/><rect x="250" y="380" fill="#210094"/><rect x="260" y="380" fill="#260094"/><rect x="270" y="380" fill="#2b0094"/><rect x="280" y="380" fill="#300094"/><rect x="290" y="380" fill="#350094"/><rect x="300" y="380" fill="#3b0094"/><rect x="310" y="380" fill="#400094"/><rect x="320" y="380" fill="#450094"/><rect x="330" y="380" fill="#4b0094"/><rect x="340" y="380" fill="#500094"/><rect x="350" y="380" fill="#550094"/><rect x="360" y="380" fill="#5b0094"/><rect x="370" y="380" fill="#600094"/><rect x="380" y="380" fill="#660094"/><rect x="390" y="380" fill="#6b0094"/><rect x="400" y="380" fill="#710094"/><rect x="410" y="380" fill="#760094"/><rect x="420" y="380" fill="#7c0094"/><rect x="130" y="390" fill="#000894"/><rect x="140" y="390" fill="#000794"/><rect x="150" y="390" fill="#000694"/><rect x="160" y="390" fill="#000494"/><rect x="170" y="390" fill="#000394"/><rect x="180" y="390" fill="#000194"/><rect x="190" y="390" fill="#020094"/><rect x="200" y="390" fill="#070094"/><rect x="210" y="390" fill="#0b0094"/><rect x="220" y="390" fill="#100094"/><rect x="230" y="390" fill="#150094"/><rect x="240" y="390" fill="#1a0094"/><rect x="250" y="390" fill="#1f0094"/><rect x="260" y="390" fill="#240094"/><rect x="270" y="390" fill="#290094"/><rect x="280" y="390" fill="#2e0094"/><rect x="290" y="390" fill="#330094"/><rect x="300" y="390" fill="#380094"/><rect x="310" y="390" fill="#3d0094"/><rect x="320" y="390" fill="#420094"/><rect x="330" y="390" fill="#480094"/><rect x="340" y="390" fill="#4d0094"/><rect x="350" y="390" fill="#520094"/><rect x="360" y="390" fill="#570094"/><rect x="370" y="390" fill="#5d0094"/><rect x="380" y="390" fill="#620094"/><rect x="390" y="390" fill="#670094"/><rect x="400" y="390" fill="#6d0094"/><rect x="410" y="390" fill="#720094"/><rect x="140" y="400" fill="#000594"/><rect x="150" y="400" fill="#000494"/><rect x="160" y="400" fill="#000394"/><rect x="170" y="400" fill="#000294"/><rect x="180" y="400" fill="#000094"/><rect x="190" y="400" fill="#010094"/><rect x="200" y="400" fill="#060094"/><rect x="210" y="400" fill="#0a0094"/><rect x="220" y="400" fill="#0f0094"/><rect x="230" y="400" fill="#140094"/><rect x="240" y="400" fill="#190094"/><rect x="250" y="400" fill="#1d0094"/><rect x="260" y="400" fill="#220094"/><rect x="270" y="400" fill="#270094"/><rect x="280" y="400" fill="#2c0094"/><rect x="290" y="400" fill="#310094"/><rect x="300" y="400" fill="#360094"/><rect x="310" y="400" fill="#3b0094"/><rect x="320" y="400" fill="#400094"/><rect x="330" y="400" fill="#450094"/><rect x="340" y="400" fill="#4a0094"/><rect x="350" y="400" fill="#4f0094"/><rect x="360" y="400" fill="#540094"/><rect x="370" y="400" fill="#590094"/><rect x="380" y="400" fill="#5e0094"/><rect x="390" y="400" fill="#640094"/><rect x="400" y="400" fill="#690094"/><rect x="150" y="410" fill="#000394"/><rect x="160" y="410" fill="#000294"/><rect x="170" y="410" fill="#000094"/><rect x="180" y="410" fill="#000094"/><rect x="190" y="410" fill="#000094"/><rect x="200" y="410" fill="#050094"/><rect x="210" y="410" fill="#090094"/><rect x="220" y="410" fill="#0e0094"/><rect x="230" y="410" fill="#130094"/><rect x="240" y="410" fill="#170094"/><rect x="250" y="410" fill="#1c0094"/><rect x="260" y="410" fill="#210094"/><rect x="270" y="410" fill="#250094"/><rect x="280" y="410" fill="#2a0094"/><rect x="290" y="410" fill="#2f0094"/><rect x="300" y="410" fill="#340094"/><rect x="310" y="410" fill="#380094"/><rect x="320" y="410" fill="#3d0094"/><rect x="330" y="410" fill="#420094"/><rect x="340" y="410" fill="#470094"/><rect x="350" y="410" fill="#4c0094"/><rect x="360" y="410" fill="#510094"/><rect x="370" y="410" fill="#560094"/><rect x="380" y="410" fill="#5b0094"/><rect x="390" y="410" fill="#600094"/><rect x="150" y="420" fill="#000294"/><rect x="160" y="420" fill="#000094"/><rect x="170" y="420" fill="#000094"/><rect x="180" y="420" fill="#000094"/><rect x="190" y="420" fill="#000094"/><rect x="200" y="420" fill="#040094"/><rect x="210" y="420" fill="#090094"/><rect x="220" y="420" fill="#0d0094"/><rect x="230" y="420" fill="#110094"/><rect x="240" y="420" fill="#160094"/><rect x="250" y="420" fill="#1b0094"/><rect x="260" y="420" fill="#1f0094"/><rect x="270" y="420" fill="#240094"/><rect x="280" y="420" fill="#280094"/><rect x="290" y="420" fill="#2d0094"/><rect x="300" y="420" fill="#320094"/><rect x="310" y="420" fill="#360094"/><rect x="320" y="420" fill="#3b0094"/><rect x="330" y="420" fill="#400094"/><rect x="340" y="420" fill="#440094"/><rect x="350" y="420" fill="#490094"/><rect x="360" y="420" fill="#4e0094"/><rect x="370" y="420" fill="#530094"/><rect x="380" y="420" fill="#580094"/><rect x="160" y="430" fill="#000094"/><rect x="170" y="430" fill="#000094"/><rect x="180" y="430" fill="#000094"/><rect x="190" y="430" fill="#000094"/><rect x="200" y="430" fill="#030094"/><rect x="210" y="430" fill="#080094"/><rect x="220" y="430" fill="#0c0094"/><rect x="230" y="430" fill="#100094"/><rect x="240" y="430" fill="#150094"/><rect x="250" y="430" fill="#190094"/><rect x="260" y="430" fill="#1e0094"/><rect x="270" y="430" fill="#220094"/><rect x="280" y="430" fill="#270094"/><rect x="290" y="430" fill="#2b0094"/><rect x="300" y="430" fill="#300094"/><rect x="310" y="430" fill="#340094"/><rect x="320" y="430" fill="#390094"/><rect x="330" y="430" fill="#3d0094"/><rect x="340" y="430" fill="#420094"/><rect x="350" y="430" fill="#470094"/><rect x="360" y="430" fill="#4b0094"/><rect x="370" y="430" fill="#500094"/><rect x="170" y="440" fill="#000094"/><rect x="180" y="440" fill="#000094"/><rect x="190" y="440" fill="#000094"/><rect x="200" y="440" fill="#030094"/><rect x="210" y="440" fill="#070094"/><rect x="220" y="440" fill="#0b0094"/><rect x="230" y="440" fill="#0f0094"/><rect x="240" y="440" fill="#140094"/><rect x="250" y="440" fill="#180094"/><rect x="260" y="440" fill="#1c0094"/><rect x="270" y="440" fill="#210094"/><rect x="280" y="440" fill="#250094"/><rect x="290" y="440" fill="#290094"/><rect x="300" y="440" fill="#2e0094"/><rect x="310" y="440" fill="#320094"/><rect x="320" y="440" fill="#370094"/><rect x="330" y="440" fill="#3b0094"/><rect x="340" y="440" fill="#400094"/><rect x="350" y="440" fill="#440094"/><rect x="360" y="440" fill="#490094"/><rect x="180" y="450" fill="#000094"/><rect x="190" y="450" fill="#000094"/><rect x="200" y="450" fill="#020094"/><rect x="210" y="450" fill="#060094"/><rect x="220" y="450" fill="#0a0094"/><rect x="230" y="450" fill="#0e0094"/><rect x="240" y="450" fill="#120094"/><rect x="250" y="450" fill="#170094"/><rect x="260" y="450" fill="#1b0094"/><rect x="270" y="450" fill="#1f0094"/><rect x="280" y="450" fill="#230094"/><rect x="290" y="450" fill="#280094"/><rect x="300" y="450" fill="#2c0094"/><rect x="310" y="450" fill="#300094"/><rect x="320" y="450" fill="#350094"/><rect x="330" y="450" fill="#390094"/><rect x="340" y="450" fill="#3d0094"/><rect x="350" y="450" fill="#420094"/><rect x="360" y="450" fill="#460094"/><rect x="190" y="460" fill="#000094"/><rect x="200" y="460" fill="#010094"/><rect x="210" y="460" fill="#050094"/><rect x="220" y="460" fill="#090094"/><rect x="230" y="460" fill="#0d0094"/><rect x="240" y="460" fill="#110094"/><rect x="250" y="460" fill="#160094"/><rect x="260" y="460" fill="#1a0094"/><rect x="270" y="460" fill="#1e0094"/><rect x="280" y="460" fill="#220094"/><rect x="290" y="460" fill="#260094"/><rect x="300" y="460" fill="#2a0094"/><rect x="310" y="460" fill="#2f0094"/><rect x="320" y="460" fill="#330094"/><rect x="330" y="460" fill="#370094"/><rect x="340" y="460" fill="#3b0094"/><rect x="350" y="460" fill="#400094"/><rect x="200" y="470" fill="#010094"/><rect x="210" y="470" fill="#050094"/><rect x="220" y="470" fill="#090094"/><rect x="230" y="470" fill="#0c0094"/><rect x="240" y="470" fill="#100094"/><rect x="250" y="470" fill="#140094"/><rect x="260" y="470" fill="#180094"/><rect x="270" y="470" fill="#1c0094"/><rect x="280" y="470" fill="#210094"/><rect x="290" y="470" fill="#250094"/><rect x="300" y="470" fill="#290094"/><rect x="310" y="470" fill="#2d0094"/><rect x="320" y="470" fill="#310094"/><rect x="330" y="470" fill="#350094"/><rect x="340" y="470" fill="#390094"/><rect x="210" y="480" fill="#040094"/><rect x="220" y="480" fill="#080094"/><rect x="230" y="480" fill="#0c0094"/><rect x="240" y="480" fill="#0f0094"/><rect x="250" y="480" fill="#130094"/><rect x="260" y="480" fill="#170094"/><rect x="270" y="480" fill="#1b0094"/><rect x="280" y="480" fill="#1f0094"/><rect x="290" y="480" fill="#230094"/><rect x="300" y="480" fill="#270094"/><rect x="310" y="480" fill="#2b0094"/><rect x="320" y="480" fill="#2f0094"/><rect x="330" y="480" fill="#330094"/><rect x="220" y="490" fill="#070094"/><rect x="230" y="490" fill="#0b0094"/><rect x="240" y="490" fill="#0f0094"/><rect x="250" y="490" fill="#120094"/><rect x="260" y="490" fill="#160094"/><rect x="270" y="490" fill="#1a0094"/><rect x="280" y="490" fill="#1e0094"/><rect x="290" y="490" fill="#220094"/><rect x="300" y="490" fill="#260094"/><rect x="310" y="490" fill="#2a0094"/><rect x="320" y="490" fill="#2e0094"/><rect x="230" y="500" fill="#0a0094"/><rect x="240" y="500" fill="#0e0094"/><rect x="250" y="500" fill="#110094"/><rect x="260" y="500" fill="#150094"/><rect x="270" y="500" fill="#190094"/><rect x="280" y="500" fill="#1d0094"/><rect x="290" y="500" fill="#210094"/><rect x="300" y="500" fill="#240094"/><rect x="310" y="500" fill="#280094"/><rect x="240" y="510" fill="#0d0094"/><rect x="250" y="510" fill="#110094"/><rect x="260" y="510" fill="#140094"/><rect x="270" y="510" fill="#180094"/><rect x="280" y="510" fill="#1c0094"/><rect x="290" y="510" fill="#1f0094"/><rect x="300" y="510" fill="#230094"/><rect x="250" y="520" fill="#100094"/><rect x="260" y="520" fill="#130094"/><rect x="270" y="520" fill="#170094"/><rect x="280" y="520" fill="#1a0094"/><rect x="290" y="520" fill="#1e0094"/><rect x="260" y="530" fill="#120094"/><rect x="270" y="530" fill="#160094"/><rect x="280" y="530" fill="#190094"/></g></g><g clip-path="url(#tr)"><g filter="url(#bl)"><rect x="130" y="20" fill="#00ff00"/><rect x="140" y="20" fill="#16ff00"/><rect x="150" y="20" fill="#2eff00"/><rect x="130" y="30" fill="#00ff03"/><rect x="140" y="30" fill="#13ff01"/><rect x="150" y="30" fill="#2cff00"/><rect x="160" y="30" fill="#45ff00"/><rect x="170" y="30" fill="#60ff00"/><rect x="180" y="30" fill="#7dff00"/><rect x="190" y="30" fill="#9cff00"/><rect x="200" y="30" fill="#bcff00"/><rect x="210" y="30" fill="#dfff00"/><rect x="220" y="30" fill="#fffa00"/><rect x="230" y="30" fill="#ffd900"/><rect x="240" y="30" fill="#ffbe00"/><rect x="250" y="30" fill="#ffa800"/><rect x="130" y="40" fill="#00ff17"/><rect x="140" y="40" fill="#10ff16"/><rect x="150" y="40" fill="#29ff14"/><rect x="160" y="40" fill="#43ff13"/><rect x="170" y="40" fill="#5fff11"/><rect x="180" y="40" fill="#7dff0f"/><rect x="190" y="40" fill="#9cff0d"/><rect x="200" y="40" fill="#beff0b"/><rect x="210" y="40" fill="#e1ff09"/><rect x="220" y="40" fill="#fff707"/><rect x="230" y="40" fill="#ffd604"/><rect x="240" y="40" fill="#ffbb01"/><rect x="250" y="40" fill="#ffa500"/><rect x="260" y="40" fill="#ff9200"/><rect x="270" y="40" fill="#ff8200"/><rect x="280" y="40" fill="#ff7400"/><rect x="290" y="40" fill="#ff6800"/><rect x="300" y="40" fill="#ff5d00"/><rect x="310" y="40" fill="#ff5400"/><rect x="320" y="40" fill="#ff4b00"/><rect x="330" y="40" fill="#ff4400"/><rect x="340" y="40" fill="#ff3d00"/><rect x="350" y="40" fill="#ff3700"/><rect x="130" y="50" fill="#00ff2d"/><rect x="140" y="50" fill="#0dff2c"/><rect x="150" y="50" fill="#26ff2b"/><rect x="160" y="50" fill="#41ff2a"/><rect x="170" y="50" fill="#5eff29"/><rect x="180" y="50" fill="#7cff28"/><rect x="190" y="50" fill="#9cff26"/><rect x="200" y="50" fill="#bfff25"/><rect x="210" y="50" fill="#e4ff24"/><rect x="220" y="50" fill="#fff321"/><rect x="230" y="50" fill="#ffd21b"/><rect x="240" y="50" fill="#ffb716"/><rect x="250" y="50" fill="#ffa112"/><rect x="260" y="50" fill="#ff8e0f"/><rect x="270" y="50" fill="#ff7e0c"/><rect x="280" y="50" fill="#ff700a"/><rect x="290" y="50" fill="#ff6408"/><rect x="300" y="50" fill="#ff5a06"/><rect x="310" y="50" fill="#ff5105"/><rect x="320" y="50" fill="#ff4803"/><rect x="330" y="50" fill="#ff4102"/><rect x="340" y="50" fill="#ff3a01"/><rect x="350" y="50" fill="#ff3400"/><rect x="360" y="50" fill="#ff2e00"/><rect x="370" y="50" fill="#ff2900"/><rect x="380" y="50" fill="#ff2500"/><rect x="390" y="50" fill="#ff2000"/><rect x="400" y="50" fill="#ff1c00"/><rect x="410" y="50" fill="#ff1900"/><rect x="420" y="50" fill="#ff1500"/><rect x="430" y="50" fill="#ff1200"/><rect x="440" y="50" fill="#ff0f00"/><rect x="450" y="50" fill="#ff0c00"/><rect x="130" y="60" fill="#00ff43"/><rect x="140" y="60" fill="#09ff43"/><rect x="150" y="60" fill="#23ff42"/><rect x="160" y="60" fill="#3fff42"/><rect x="170" y="60" fill="#5cff42"/><rect x="180" y="60" fill="#7bff41"/><rect x="190" y="60" fill="#9dff41"/><rect x="200" y="60" fill="#c0ff41"/><rect x="210" y="60" fill="#e6ff40"/><rect x="220" y="60" fill="#fff03c"/><rect x="230" y="60" fill="#ffce33"/><rect x="240" y="60" fill="#ffb32c"/><rect x="250" y="60" fill="#ff9d26"/><rect x="260" y="60" fill="#ff8a21"/><rect x="270" y="60" fill="#ff7b1d"/><rect x="280" y="60" fill="#ff6d1a"/><rect x="290" y="60" fill="#ff6116"/><rect x="300" y="60" fill="#ff5714"/><rect x="310" y="60" fill="#ff4d11"/><rect x="320" y="60" fill="#ff450f"/><rect x="330" y="60" fill="#ff3e0d"/><rect x="340" y="60" fill="#ff370b"/><rect x="350" y="60" fill="#ff310a"/><rect x="360" y="60" fill="#ff2c08"/><rect x="370" y="60" fill="#ff2707"/><rect x="380" y="60" fill="#ff2206"/><rect x="390" y="60" fill="#ff1e05"/><rect x="400" y="60" fill="#ff1a04"/><rect x="410" y="60" fill="#ff1603"/><rect x="420" y="60" fill="#ff1302"/><rect x="430" y="60" fill="#ff1001"/><rect x="440" y="60" fill="#ff0d00"/><rect x="450" y="60" fill="#ff0a00"/><rect x="460" y="60" fill="#ff0700"/><rect x="470" y="60" fill="#ff0500"/><rect x="480" y="60" fill="#ff0300"/><rect x="490" y="60" fill="#ff0100"/><rect x="130" y="70" fill="#00ff5a"/><rect x="140" y="70" fill="#06ff5b"/><rect x="150" y="70" fill="#20ff5b"/><rect x="160" y="70" fill="#3dff5c"/><rect x="170" y="70" fill="#5bff5c"/><rect x="180" y="70" fill="#7bff5d"/><rect x="190" y="70" fill="#9dff5d"/><rect x="200" y="70" fill="#c2ff5e"/><rect x="210" y="70" fill="#e9ff5e"/><rect x="220" y="70" fill="#ffec58"/><rect x="230" y="70" fill="#ffca4c"/><rect x="240" y="70" fill="#ffaf42"/><rect x="250" y="70" fill="#ff993a"/><rect x="260" y="70" fill="#ff8734"/><rect x="270" y="70" fill="#ff772e"/><rect x="280" y="70" fill="#ff6929"/><rect x="290" y="70" fill="#ff5e25"/><rect x="300" y="70" fill="#ff5322"/><rect x="310" y="70" fill="#ff4a1e"/><rect x="320" y="70" fill="#ff421b"/><rect x="330" y="70" fill="#ff3b19"/><rect x="340" y="70" fill="#ff3417"/><rect x="350" y="70" fill="#ff2e14"/><rect x="360" y="70" fill="#ff2913"/><rect x="370" y="70" fill="#ff2411"/><rect x="380" y="70" fill="#ff1f0f"/><rect x="390" y="70" fill="#ff1b0e"/><rect x="400" y="70" fill="#ff170c"/><rect x="410" y="70" fill="#ff140b"/><rect x="420" y="70" fill="#ff110a"/><rect x="430" y="70" fill="#ff0d09"/><rect x="440" y="70" fill="#ff0b08"/><rect x="450" y="70" fill="#ff0807"/><rect x="460" y="70" fill="#ff0506"/><rect x="470" y="70" fill="#ff0305"/><rect x="480" y="70" fill="#ff0104"/><rect x="490" y="70" fill="#ff0003"/><rect x="130" y="80" fill="#00ff73"/><rect x="140" y="80" fill="#02ff74"/><rect x="150" y="80" fill="#1dff75"/><rect x="160" y="80" fill="#3aff77"/><rect x="170" y="80" fill="#59ff78"/><rect x="180" y="80" fill="#7aff7a"/><rect x="190" y="80" fill="#9dff7b"/><rect x="200" y="80" fill="#c3ff7d"/><rect x="210" y="80" fill="#ecff7f"/><rect x="220" y="80" fill="#ffe875"/><rect x="230" y="80" fill="#ffc666"/><rect x="240" y="80" fill="#ffab59"/><rect x="250" y="80" fill="#ff954f"/><rect x="260" y="80" fill="#ff8347"/><rect x="270" y="80" fill="#ff7340"/><rect x="280" y="80" fill="#ff663a"/><rect x="290" y="80" fill="#ff5a34"/><rect x="300" y="80" fill="#ff5030"/><rect x="310" y="80" fill="#ff472c"/><rect x="320" y="80" fill="#ff3f28"/><rect x="330" y="80" fill="#ff3825"/><rect x="340" y="80" fill="#ff3122"/><rect x="350" y="80" fill="#ff2b1f"/><rect x="360" y="80" fill="#ff261d"/><rect x="370" y="80" fill="#ff211a"/><rect x="380" y="80" fill="#ff1d18"/><rect x="390" y="80" fill="#ff1917"/><rect x="400" y="80" fill="#ff1515"/><rect x="410" y="80" fill="#ff1213"/><rect x="420" y="80" fill="#ff0e12"/><rect x="430" y="80" fill="#ff0b10"/><rect x="440" y="80" fill="#ff080f"/><rect x="450" y="80" fill="#ff060e"/><rect x="460" y="80" fill="#ff030d"/><rect x="470" y="80" fill="#ff010c"/><rect x="480" y="80" fill="#ff000b"/><rect x="490" y="80" fill="#ff000a"/><rect x="130" y="90" fill="#00ff8d"/><rect x="140" y="90" fill="#00ff8f"/><rect x="150" y="90" fill="#1aff91"/><rect x="160" y="90" fill="#37ff94"/><rect x="170" y="90" fill="#57ff96"/><rect x="180" y="90" fill="#79ff98"/><rect x="190" y="90" fill="#9eff9b"/><rect x="200" y="90" fill="#c5ff9e"/><rect x="210" y="90" fill="#efffa1"/><rect x="220" y="90" fill="#ffe493"/><rect x="230" y="90" fill="#ffc280"/><rect x="240" y="90" fill="#ffa771"/><rect x="250" y="90" fill="#ff9165"/><rect x="260" y="90" fill="#ff7f5a"/><rect x="270" y="90" fill="#ff6f52"/><rect x="280" y="90" fill="#ff624a"/><rect x="290" y="90" fill="#ff5644"/><rect x="300" y="90" fill="#ff4c3e"/><rect x="310" y="90" fill="#ff4439"/><rect x="320" y="90" fill="#ff3c35"/><rect x="330" y="90" fill="#ff3531"/><rect x="340" y="90" fill="#ff2e2d"/><rect x="350" y="90" fill="#ff292a"/><rect x="360" y="90" fill="#ff2327"/><rect x="370" y="90" fill="#ff1f24"/><rect x="380" y="90" fill="#ff1a22"/><rect x="390" y="90" fill="#ff1620"/><rect x="400" y="90" fill="#ff131e"/><rect x="410" y="90" fill="#ff0f1c"/><rect x="420" y="90" fill="#ff0c1a"/><rect x="430" y="90" fill="#ff0918"/><rect x="440" y="90" fill="#ff0617"/><rect x="450" y="90" fill="#ff0415"/><rect x="460" y="90" fill="#ff0114"/><rect x="470" y="90" fill="#ff0013"/><rect x="480" y="90" fill="#ff0011"/><rect x="140" y="100" fill="#00ffac"/><rect x="150" y="100" fill="#16ffaf"/><rect x="160" y="100" fill="#35ffb2"/><rect x="170" y="100" fill="#55ffb6"/><rect x="180" y="100" fill="#78ffb9"/><rect x="190" y="100" fill="#9effbd"/><rect x="200" y="100" fill="#c7ffc2"/><rect x="210" y="100" fill="#f3ffc7"/><rect x="220" y="100" fill="#ffe0b3"/><rect x="230" y="100" fill="#ffbe9c"/><rect x="240" y="100" fill="#ffa38a"/><rect x="250" y="100" fill="#ff8d7b"/><rect x="260" y="100" fill="#ff7b6e"/><rect x="270" y="100" fill="#ff6b64"/><rect x="280" y="100" fill="#ff5e5b"/><rect x="290" y="100" fill="#ff5353"/><rect x="300" y="100" fill="#ff494d"/><rect x="310" y="100" fill="#ff4047"/><rect x="320" y="100" fill="#ff3842"/><rect x="330" y="100" fill="#ff313d"/><rect x="340" y="100" fill="#ff2b39"/><rect x="350" y="100" fill="#ff2635"/><rect x="360" y="100" fill="#ff2031"/><rect x="370" y="100" fill="#ff1c2e"/><rect x="380" y="100" fill="#ff182b"/><rect x="390" y="100" fill="#ff1429"/><rect x="400" y="100" fill="#ff1026"/><rect x="410" y="100" fill="#ff0d24"/><rect x="420" y="100" fill="#ff0a22"/><rect x="430" y="100" fill="#ff0720"/><rect x="440" y="100" fill="#ff041e"/><rect x="450" y="100" fill="#ff011d"/><rect x="460" y="100" fill="#ff001b"/><rect x="470" y="100" fill="#ff0019"/><rect x="140" y="110" fill="#00ffca"/><rect x="150" y="110" fill="#12ffce"/><rect x="160" y="110" fill="#32ffd3"/><rect x="170" y="110" fill="#53ffd7"/><rect x="180" y="110" fill="#78ffdd"/><rect x="190" y="110" fill="#9fffe2"/><rect x="200" y="110" fill="#c9ffe8"/><rect x="210" y="110" fill="#f7ffef"/><rect x="220" y="110" fill="#ffdbd3"/><rect x="230" y="110" fill="#ffb9b8"/><rect x="240" y="110" fill="#ff9ea3"/><rect x="250" y="110" fill="#ff8991"/><rect x="260" y="110" fill="#ff7683"/><rect x="270" y="110" fill="#ff6777"/><rect x="280" y="110" fill="#ff5a6c"/><rect x="290" y="110" fill="#ff4f63"/><rect x="300" y="110" fill="#ff455c"/><rect x="310" y="110" fill="#ff3d55"/><rect x="320" y="110" fill="#ff354f"/><rect x="330" y="110" fill="#ff2e49"/><rect x="340" y="110" fill="#ff2844"/><rect x="350" y="110" fill="#ff2340"/><rect x="360" y="110" fill="#ff1e3c"/><rect x="370" y="110" fill="#ff1938"/><rect x="380" y="110" fill="#ff1535"/><rect x="390" y="110" fill="#ff1132"/><rect x="400" y="110" fill="#ff0d2f"/><rect x="410" y="110" fill="#ff0a2d"/><rect x="420" y="110" fill="#ff072a"/><rect x="430" y="110" fill="#ff0428"/><rect x="440" y="110" fill="#ff0226"/><rect x="450" y="110" fill="#ff0024"/><rect x="460" y="110" fill="#ff0022"/><rect x="140" y="120" fill="#00ffea"/><rect x="150" y="120" fill="#0effef"/><rect x="160" y="120" fill="#2efff5"/><rect x="170" y="120" fill="#51fffb"/><rect x="180" y="120" fill="#75fcff"/><rect x="190" y="120" fill="#99f5ff"/><rect x="200" y="120" fill="#bdeeff"/><rect x="210" y="120" fill="#e3e7ff"/><rect x="220" y="120" fill="#ffd7f5"/><rect x="230" y="120" fill="#ffb5d6"/><rect x="240" y="120" fill="#ff9abd"/><rect x="250" y="120" fill="#ff84a9"/><rect x="260" y="120" fill="#ff7298"/><rect x="270" y="120" fill="#ff638a"/><rect x="280" y="120" fill="#ff567e"/><rect x="290" y="120" fill="#ff4b74"/><rect x="300" y="120" fill="#ff426b"/><rect x="310" y="120" fill="#ff3963"/><rect x="320" y="120" fill="#ff325c"/><rect x="330" y="120" fill="#ff2b56"/><rect x="340" y="120" fill="#ff2550"/><rect x="350" y="120" fill="#ff204b"/><rect x="360" y="120" fill="#ff1b47"/><rect x="370" y="120" fill="#ff1643"/><rect x="380" y="120" fill="#ff123f"/><rect x="390" y="120" fill="#ff0e3b"/><rect x="400" y="120" fill="#ff0b38"/><rect x="410" y="120" fill="#ff0835"/><rect x="420" y="120" fill="#ff0533"/><rect x="430" y="120" fill="#ff0230"/><rect x="440" y="120" fill="#ff002e"/><rect x="450" y="120" fill="#ff002b"/><rect x="140" y="130" fill="#00f3ff"/><rect x="150" y="130" fill="#09edff"/><rect x="160" y="130" fill="#27e7ff"/><rect x="170" y="130" fill="#45e0ff"/><rect x="180" y="130" fill="#64daff"/><rect x="190" y="130" fill="#84d3ff"/><rect x="200" y="130" fill="#a5ccff"/><rect x="210" y="130" fill="#c6c6ff"/><rect x="220" y="130" fill="#e8bfff"/><rect x="230" y="130" fill="#ffb0f4"/><rect x="240" y="130" fill="#ff95d8"/><rect x="250" y="130" fill="#ff7fc1"/><rect x="260" y="130" fill="#ff6eae"/><rect x="270" y="130" fill="#ff5f9e"/><rect x="280" y="130" fill="#ff5290"/><rect x="290" y="130" fill="#ff4785"/><rect x="300" y="130" fill="#ff3e7a"/><rect x="310" y="130" fill="#ff3672"/><rect x="320" y="130" fill="#ff2e6a"/><rect x="330" y="130" fill="#ff2863"/><rect x="340" y="130" fill="#ff225d"/><rect x="350" y="130" fill="#ff1c57"/><rect x="360" y="130" fill="#ff1852"/><rect x="370" y="130" fill="#ff134d"/><rect x="380" y="130" fill="#ff0f49"/><rect x="390" y="130" fill="#ff0c45"/><rect x="400" y="130" fill="#ff0841"/><rect x="410" y="130" fill="#ff053e"/><rect x="420" y="130" fill="#ff023b"/><rect x="430" y="130" fill="#ff0038"/><rect x="440" y="130" fill="#ff0035"/><rect x="140" y="140" fill="#00d6ff"/><rect x="150" y="140" fill="#04d0ff"/><rect x="160" y="140" fill="#1fcaff"/><rect x="170" y="140" fill="#3bc4ff"/><rect x="180" y="140" fill="#57beff"/><rect x="190" y="140" fill="#73b8ff"/><rect x="200" y="140" fill="#91b2ff"/><rect x="210" y="140" fill="#aeabff"/><rect x="220" y="140" fill="#cda5ff"/><rect x="230" y="140" fill="#ec9eff"/><rect x="240" y="140" fill="#ff90f3"/><rect x="250" y="140" fill="#ff7bd9"/><rect x="260" y="140" fill="#ff69c4"/><rect x="270" y="140" fill="#ff5ab2"/><rect x="280" y="140" fill="#ff4ea3"/><rect x="290" y="140" fill="#ff4396"/><rect x="300" y="140" fill="#ff3a8a"/><rect x="310" y="140" fill="#ff3280"/><rect x="320" y="140" fill="#ff2b78"/><rect x="330" y="140" fill="#ff2470"/><rect x="340" y="140" fill="#ff1f69"/><rect x="350" y="140" fill="#ff1963"/><rect x="360" y="140" fill="#ff155d"/><rect x="370" y="140" fill="#ff1058"/><rect x="380" y="140" fill="#ff0d53"/><rect x="390" y="140" fill="#ff094f"/><rect x="400" y="140" fill="#ff064b"/><rect x="410" y="140" fill="#ff0347"/><rect x="420" y="140" fill="#ff0043"/><rect x="430" y="140" fill="#ff0040"/><rect x="140" y="150" fill="#00beff"/><rect x="150" y="150" fill="#00b8ff"/><rect x="160" y="150" fill="#19b3ff"/><rect x="170" y="150" fill="#32adff"/><rect x="180" y="150" fill="#4ca7ff"/><rect x="190" y="150" fill="#66a1ff"/><rect x="200" y="150" fill="#809bff"/><rect x="210" y="150" fill="#9b95ff"/><rect x="220" y="150" fill="#b78fff"/><rect x="230" y="150" fill="#d289ff"/><rect x="240" y="150" fill="#ef82ff"/><rect x="250" y="150" fill="#ff76f3"/><rect x="260" y="150" fill="#ff64db"/><rect x="270" y="150" fill="#ff56c7"/><rect x="280" y="150" fill="#ff4ab6"/><rect x="290" y="150" fill="#ff3fa7"/><rect x="300" y="150" fill="#ff369a"/><rect x="310" y="150" fill="#ff2e8f"/><rect x="320" y="150" fill="#ff2786"/><rect x="330" y="150" fill="#ff217d"/><rect x="340" y="150" fill="#ff1b75"/><rect x="350" y="150" fill="#ff166e"/><rect x="360" y="150" fill="#ff1268"/><rect x="370" y="150" fill="#ff0d62"/><rect x="380" y="150" fill="#ff0a5d"/><rect x="390" y="150" fill="#ff0658"/><rect x="400" y="150" fill="#ff0354"/><rect x="410" y="150" fill="#ff0050"/><rect x="420" y="150" fill="#ff004c"/><rect x="140" y="160" fill="#00a9ff"/><rect x="150" y="160" fill="#00a4ff"/><rect x="160" y="160" fill="#149fff"/><rect x="170" y="160" fill="#2b99ff"/><rect x="180" y="160" fill="#4294ff"/><rect x="190" y="160" fill="#5a8eff"/><rect x="200" y="160" fill="#7289ff"/><rect x="210" y="160" fill="#8b83ff"/><rect x="220" y="160" fill="#a47dff"/><rect x="230" y="160" fill="#bd77ff"/><rect x="240" y="160" fill="#d771ff"/><rect x="250" y="160" fill="#f26bff"/><rect x="260" y="160" fill="#ff60f2"/><rect x="270" y="160" fill="#ff51dc"/><rect x="280" y="160" fill="#ff45c9"/><rect x="290" y="160" fill="#ff3bb9"/><rect x="300" y="160" fill="#ff32ab"/><rect x="310" y="160" fill="#ff2a9f"/><rect x="320" y="160" fill="#ff2394"/><rect x="330" y="160" fill="#ff1d8b"/><rect x="340" y="160" fill="#ff1882"/><rect x="350" y="160" fill="#ff137a"/><rect x="360" y="160" fill="#ff0f73"/><rect x="370" y="160" fill="#ff0a6d"/><rect x="380" y="160" fill="#ff0767"/><rect x="390" y="160" fill="#ff0362"/><rect x="400" y="160" fill="#ff005d"/><rect x="410" y="160" fill="#ff0059"/><rect x="420" y="160" fill="#ff0055"/><rect x="150" y="170" fill="#0093ff"/><rect x="160" y="170" fill="#0f8eff"/><rect x="170" y="170" fill="#2488ff"/><rect x="180" y="170" fill="#3a83ff"/><rect x="190" y="170" fill="#507eff"/><rect x="200" y="170" fill="#6779ff"/><rect x="210" y="170" fill="#7d73ff"/><rect x="220" y="170" fill="#946eff"/><rect x="230" y="170" fill="#ac68ff"/><rect x="240" y="170" fill="#c362ff"/><rect x="250" y="170" fill="#dc5dff"/><rect x="260" y="170" fill="#f457ff"/><rect x="270" y="170" fill="#ff4df2"/><rect x="280" y="170" fill="#ff41dd"/><rect x="290" y="170" fill="#ff37cb"/><rect x="300" y="170" fill="#ff2ebc"/><rect x="310" y="170" fill="#ff26ae"/><rect x="320" y="170" fill="#ff20a3"/><rect x="330" y="170" fill="#ff1a98"/><rect x="340" y="170" fill="#ff148f"/><rect x="350" y="170" fill="#ff1087"/><rect x="360" y="170" fill="#ff0b7f"/><rect x="370" y="170" fill="#ff0778"/><rect x="380" y="170" fill="#ff0472"/><rect x="390" y="170" fill="#ff016c"/><rect x="400" y="170" fill="#ff0067"/><rect x="410" y="170" fill="#ff0062"/><rect x="150" y="180" fill="#0084ff"/><rect x="160" y="180" fill="#0b7fff"/><rect x="170" y="180" fill="#1f7aff"/><rect x="180" y="180" fill="#3375ff"/><rect x="190" y="180" fill="#4870ff"/><rect x="200" y="180" fill="#5c6bff"/><rect x="210" y="180" fill="#7166ff"/><rect x="220" y="180" fill="#8761ff"/><rect x="230" y="180" fill="#9c5bff"/><rect x="240" y="180" fill="#b256ff"/><rect x="250" y="180" fill="#c951ff"/><rect x="260" y="180" fill="#df4bff"/><rect x="270" y="180" fill="#f645ff"/><rect x="280" y="180" fill="#ff3cf1"/><rect x="290" y="180" fill="#ff32de"/><rect x="300" y="180" fill="#ff2acd"/><rect x="310" y="180" fill="#ff22be"/><rect x="320" y="180" fill="#ff1cb2"/><rect x="330" y="180" fill="#ff16a6"/><rect x="340" y="180" fill="#ff119c"/><rect x="350" y="180" fill="#ff0c93"/><rect x="360" y="180" fill="#ff088b"/><rect x="370" y="180" fill="#ff0483"/><rect x="380" y="180" fill="#ff017c"/><rect x="390" y="180" fill="#ff0076"/><rect x="400" y="180" fill="#ff0070"/><rect x="150" y="190" fill="#0077ff"/><rect x="160" y="190" fill="#0772ff"/><rect x="170" y="190" fill="#1a6dff"/><rect x="180" y="190" fill="#2d69ff"/><rect x="190" y="190" fill="#4064ff"/><rect x="200" y="190" fill="#535fff"/><rect x="210" y="190" fill="#675aff"/><rect x="220" y="190" fill="#7b55ff"/><rect x="230" y="190" fill="#8f50ff"/><rect x="240" y="190" fill="#a44bff"/><rect x="250" y="190" fill="#b846ff"/><rect x="260" y="190" fill="#cd41ff"/><rect x="270" y="190" fill="#e33bff"/><rect x="280" y="190" fill="#f836ff"/><rect x="290" y="190" fill="#ff2ef1"/><rect x="300" y="190" fill="#ff26df"/><rect x="310" y="190" fill="#ff1ecf"/><rect x="320" y="190" fill="#ff18c1"/><rect x="330" y="190" fill="#ff12b4"/><rect x="340" y="190" fill="#ff0da9"/><rect x="350" y="190" fill="#ff099f"/><rect x="360" y="190" fill="#ff0597"/><rect x="370" y="190" fill="#ff018f"/><rect x="380" y="190" fill="#ff0087"/><rect x="390" y="190" fill="#ff0080"/><rect x="150" y="200" fill="#006bff"/><rect x="160" y="200" fill="#0467ff"/><rect x="170" y="200" fill="#1662ff"/><rect x="180" y="200" fill="#285eff"/><rect x="190" y="200" fill="#3a59ff"/><rect x="200" y="200" fill="#4c55ff"/><rect x="210" y="200" fill="#5e50ff"/><rect x="220" y="200" fill="#714bff"/><rect x="230" y="200" fill="#8446ff"/><rect x="240" y="200" fill="#9742ff"/><rect x="250" y="200" fill="#aa3dff"/><rect x="260" y="200" fill="#be38ff"/><rect x="270" y="200" fill="#d133ff"/><rect x="280" y="200" fill="#e52eff"/><rect x="290" y="200" fill="#fa29ff"/><rect x="300" y="200" fill="#ff21f0"/><rect x="310" y="200" fill="#ff1adf"/><rect x="320" y="200" fill="#ff14d0"/><rect x="330" y="200" fill="#ff0fc3"/><rect x="340" y="200" fill="#ff0ab7"/><rect x="350" y="200" fill="#ff06ac"/><rect x="360" y="200" fill="#ff02a3"/><rect x="370" y="200" fill="#ff009a"/><rect x="380" y="200" fill="#ff0092"/><rect x="150" y="210" fill="#0061ff"/><rect x="160" y="210" fill="#025dff"/><rect x="170" y="210" fill="#1258ff"/><rect x="180" y="210" fill="#2354ff"/><rect x="190" y="210" fill="#3450ff"/><rect x="200" y="210" fill="#454bff"/><rect x="210" y="210" fill="#5647ff"/><rect x="220" y="210" fill="#6842ff"/><rect x="230" y="210" fill="#793eff"/><rect x="240" y="210" fill="#8b39ff"/><rect x="250" y="210" fill="#9d35ff"/><rect x="260" y="210" fill="#b030ff"/><rect x="270" y="210" fill="#c22bff"/><rect x="280" y="210" fill="#d526ff"/><rect x="290" y="210" fill="#e821ff"/><rect x="300" y="210" fill="#fb1cff"/><rect x="310" y="210" fill="#ff16f0"/><rect x="320" y="210" fill="#ff10e0"/><rect x="330" y="210" fill="#ff0bd2"/><rect x="340" y="210" fill="#ff06c5"/><rect x="350" y="210" fill="#ff02b9"/><rect x="360" y="210" fill="#ff00af"/><rect x="370" y="210" fill="#ff00a6"/><rect x="150" y="220" fill="#0058ff"/><rect x="160" y="220" fill="#0054ff"/><rect x="170" y="220" fill="#0f4fff"/><rect x="180" y="220" fill="#1f4bff"/><rect x="190" y="220" fill="#2f47ff"/><rect x="200" y="220" fill="#3f43ff"/><rect x="210" y="220" fill="#4f3fff"/><rect x="220" y="220" fill="#603aff"/><rect x="230" y="220" fill="#7036ff"/><rect x="240" y="220" fill="#8132ff"/><rect x="250" y="220" fill="#922dff"/><rect x="260" y="220" fill="#a329ff"/><rect x="270" y="220" fill="#b524ff"/><rect x="280" y="220" fill="#c620ff"/><rect x="290" y="220" fill="#d81bff"/><rect x="300" y="220" fill="#ea16ff"/><rect x="310" y="220" fill="#fd12ff"/><rect x="320" y="220" fill="#ff0cf0"/><rect x="330" y="220" fill="#ff07e0"/><rect x="340" y="220" fill="#ff03d3"/><rect x="350" y="220" fill="#ff00c6"/><rect x="360" y="220" fill="#ff00bb"/><rect x="160" y="230" fill="#004bff"/><rect x="170" y="230" fill="#0c48ff"/><rect x="180" y="230" fill="#1b44ff"/><rect x="190" y="230" fill="#2a40ff"/><rect x="200" y="230" fill="#393cff"/><rect x="210" y="230" fill="#4938ff"/><rect x="220" y="230" fill="#5833ff"/><rect x="230" y="230" fill="#682fff"/><rect x="240" y="230" fill="#782bff"/><rect x="250" y="230" fill="#8827ff"/><rect x="260" y="230" fill="#9823ff"/><rect x="270" y="230" fill="#a91eff"/><rect x="280" y="230" fill="#b91aff"/><rect x="290" y="230" fill="#ca15ff"/><rect x="300" y="230" fill="#db11ff"/><rect x="310" y="230" fill="#ec0cff"/><rect x="320" y="230" fill="#fe08ff"/><rect x="330" y="230" fill="#ff03f0"/><rect x="340" y="230" fill="#ff00e1"/><rect x="350" y="230" fill="#ff00d4"/><rect x="160" y="240" fill="#0044ff"/><rect x="170" y="240" fill="#0940ff"/><rect x="180" y="240" fill="#173dff"/><rect x="190" y="240" fill="#2639ff"/><rect x="200" y="240" fill="#3435ff"/><rect x="210" y="240" fill="#4331ff"/><rect x="220" y="240" fill="#522dff"/><rect x="230" y="240" fill="#6129ff"/><rect x="240" y="240" fill="#7025ff"/><rect x="250" y="240" fill="#7f21ff"/><rect x="260" y="240" fill="#8e1dff"/><rect x="270" y="240" fill="#9e19ff"/><rect x="280" y="240" fill="#ae15ff"/><rect x="290" y="240" fill="#be10ff"/><rect x="300" y="240" fill="#ce0cff"/><rect x="310" y="240" fill="#de08ff"/><rect x="320" y="240" fill="#ee03ff"/><rect x="330" y="240" fill="#ff00ff"/><rect x="340" y="240" fill="#ff00ef"/><rect x="160" y="250" fill="#003dff"/><rect x="170" y="250" fill="#073aff"/><rect x="180" y="250" fill="#1436ff"/><rect x="190" y="250" fill="#2233ff"/><rect x="200" y="250" fill="#302fff"/><rect x="210" y="250" fill="#3e2bff"/><rect x="220" y="250" fill="#4c27ff"/><rect x="230" y="250" fill="#5a23ff"/><rect x="240" y="250" fill="#6820ff"/><rect x="250" y="250" fill="#771cff"/><rect x="260" y="250" fill="#8518ff"/><rect x="270" y="250" fill="#9414ff"/><rect x="280" y="250" fill="#a310ff"/><rect x="290" y="250" fill="#b20cff"/><rect x="300" y="250" fill="#c108ff"/><rect x="310" y="250" fill="#d104ff"/><rect x="320" y="250" fill="#e000ff"/><rect x="330" y="250" fill="#f000ff"/><rect x="160" y="260" fill="#0037ff"/><rect x="170" y="260" fill="#0434ff"/><rect x="180" y="260" fill="#1130ff"/><rect x="190" y="260" fill="#1e2dff"/><rect x="200" y="260" fill="#2c29ff"/><rect x="210" y="260" fill="#3926ff"/><rect x="220" y="260" fill="#4622ff"/><rect x="230" y="260" fill="#541eff"/><rect x="240" y="260" fill="#621bff"/><rect x="250" y="260" fill="#6f17ff"/><rect x="260" y="260" fill="#7d13ff"/><rect x="270" y="260" fill="#8b0fff"/><rect x="280" y="260" fill="#9a0cff"/><rect x="290" y="260" fill="#a808ff"/><rect x="300" y="260" fill="#b604ff"/><rect x="310" y="260" fill="#c500ff"/><rect x="320" y="260" fill="#d400ff"/><rect x="160" y="270" fill="#0032ff"/><rect x="170" y="270" fill="#022eff"/><rect x="180" y="270" fill="#0f2bff"/><rect x="190" y="270" fill="#1b28ff"/><rect x="200" y="270" fill="#2824ff"/><rect x="210" y="270" fill="#3521ff"/><rect x="220" y="270" fill="#411dff"/><rect x="230" y="270" fill="#4e1aff"/><rect x="240" y="270" fill="#5b16ff"/><rect x="250" y="270" fill="#6913ff"/><rect x="260" y="270" fill="#760fff"/><rect x="270" y="270" fill="#830bff"/><rect x="280" y="270" fill="#9108ff"/><rect x="290" y="270" fill="#9e04ff"/><rect x="300" y="270" fill="#ac00ff"/><rect x="310" y="270" fill="#ba00ff"/><rect x="160" y="280" fill="#002dff"/><rect x="170" y="280" fill="#0029ff"/><rect x="180" y="280" fill="#0c26ff"/><rect x="190" y="280" fill="#1823ff"/><rect x="200" y="280" fill="#2420ff"/><rect x="210" y="280" fill="#311cff"/><rect x="220" y="280" fill="#3d19ff"/><rect x="230" y="280" fill="#4915ff"/><rect x="240" y="280" fill="#5612ff"/><rect x="250" y="280" fill="#620fff"/><rect x="260" y="280" fill="#6f0bff"/><rect x="270" y="280" fill="#7c08ff"/><rect x="280" y="280" fill="#8904ff"/><rect x="290" y="280" fill="#9600ff"/><rect x="300" y="280" fill="#a300ff"/><rect x="310" y="280" fill="#b000ff"/><rect x="160" y="290" fill="#0028ff"/><rect x="170" y="290" fill="#0025ff"/><rect x="180" y="290" fill="#0a22ff"/><rect x="190" y="290" fill="#161eff"/><rect x="200" y="290" fill="#211bff"/><rect x="210" y="290" fill="#2d18ff"/><rect x="220" y="290" fill="#3915ff"/><rect x="230" y="290" fill="#4512ff"/><rect x="240" y="290" fill="#510eff"/><rect x="250" y="290" fill="#5d0bff"/><rect x="260" y="290" fill="#6908ff"/><rect x="270" y="290" fill="#7504ff"/><rect x="280" y="290" fill="#8101ff"/><rect x="290" y="290" fill="#8e00ff"/><rect x="300" y="290" fill="#9b00ff"/><rect x="170" y="300" fill="#0021ff"/><rect x="180" y="300" fill="#081dff"/><rect x="190" y="300" fill="#131aff"/><rect x="200" y="300" fill="#1e17ff"/><rect x="210" y="300" fill="#2a14ff"/><rect x="220" y="300" fill="#3511ff"/><rect x="230" y="300" fill="#400eff"/><rect x="240" y="300" fill="#4c0bff"/><rect x="250" y="300" fill="#5707ff"/><rect x="260" y="300" fill="#6304ff"/><rect x="270" y="300" fill="#6f01ff"/><rect x="280" y="300" fill="#7b00ff"/><rect x="290" y="300" fill="#8700ff"/><rect x="170" y="310" fill="#001dff"/><rect x="180" y="310" fill="#061aff"/><rect x="190" y="310" fill="#1117ff"/><rect x="200" y="310" fill="#1c14ff"/><rect x="210" y="310" fill="#2611ff"/><rect x="220" y="310" fill="#310eff"/><rect x="230" y="310" fill="#3c0bff"/><rect x="240" y="310" fill="#4707ff"/><rect x="250" y="310" fill="#5304ff"/><rect x="260" y="310" fill="#5e01ff"/><rect x="270" y="310" fill="#6900ff"/><rect x="280" y="310" fill="#7400ff"/><rect x="170" y="320" fill="#0019ff"/><rect x="180" y="320" fill="#0416ff"/><rect x="190" y="320" fill="#0f13ff"/><rect x="200" y="320" fill="#1910ff"/><rect x="210" y="320" fill="#240dff"/><rect x="220" y="320" fill="#2e0aff"/><rect x="230" y="320" fill="#3907ff"/><rect x="240" y="320" fill="#4304ff"/><rect x="250" y="320" fill="#4e01ff"/><rect x="260" y="320" fill="#5900ff"/><rect x="270" y="320" fill="#6400ff"/><rect x="170" y="330" fill="#0015ff"/><rect x="180" y="330" fill="#0313ff"/><rect x="190" y="330" fill="#0d10ff"/><rect x="200" y="330" fill="#170dff"/><rect x="210" y="330" fill="#210aff"/><rect x="220" y="330" fill="#2b07ff"/><rect x="230" y="330" fill="#3504ff"/><rect x="240" y="330" fill="#3f02ff"/><rect x="250" y="330" fill="#4a00ff"/><rect x="260" y="330" fill="#5400ff"/><rect x="170" y="340" fill="#0012ff"/><rect x="180" y="340" fill="#0110ff"/><rect x="190" y="340" fill="#0b0dff"/><rect x="200" y="340" fill="#150aff"/><rect x="210" y="340" fill="#1e07ff"/><rect x="220" y="340" fill="#2805ff"/><rect x="230" y="340" fill="#3202ff"/><rect x="240" y="340" fill="#3c00ff"/><rect x="250" y="340" fill="#4600ff"/><rect x="170" y="350" fill="#000fff"/><rect x="180" y="350" fill="#000dff"/><rect x="190" y="350" fill="#090aff"/><rect x="200" y="350" fill="#1207ff"/><rect x="210" y="350" fill="#1c05ff"/><rect x="220" y="350" fill="#2502ff"/><rect x="230" y="350" fill="#2f00ff"/><rect x="240" y="350" fill="#3800ff"/><rect x="180" y="360" fill="#000aff"/><rect x="190" y="360" fill="#0707ff"/><rect x="200" y="360" fill="#1105ff"/><rect x="210" y="360" fill="#1a02ff"/><rect x="220" y="360" fill="#2300ff"/><rect x="230" y="360" fill="#2c00ff"/><rect x="180" y="370" fill="#0007ff"/><rect x="190" y="370" fill="#0605ff"/><rect x="200" y="370" fill="#0f02ff"/><rect x="210" y="370" fill="#1800ff"/><rect x="220" y="370" fill="#2000ff"/><rect x="180" y="380" fill="#0005ff"/><rect x="190" y="380" fill="#0402ff"/><rect x="200" y="380" fill="#0d00ff"/><rect x="210" y="380" fill="#1600ff"/><rect x="180" y="390" fill="#0002ff"/><rect x="190" y="390" fill="#0300ff"/><rect x="200" y="390" fill="#0b00ff"/><rect x="180" y="400" fill="#0000ff"/><rect x="190" y="400" fill="#0200ff"/><rect x="200" y="400" fill="#0a00ff"/></g></g></svg>
<canvas id="cie" class="a" style="left:1250px;top:137px" width="658" height="541"></canvas>
<script>
(function(){
var c=document.getElementById('cie'); if(!c||!c.getContext) return;
var ctx=c.getContext('2d'); var W=c.width,H=c.height;
var PU0=1249.500000,PV0=678.500000,SU=1096.400000,SV=903.000000,OX=1250,OY=137,GAM=1.0;
var pts=[[1531.06, 663.52], [1531.02, 663.55], [1530.96, 663.59], [1530.9, 663.65], [1530.82, 663.7], [1530.73, 663.76], [1530.64, 663.81], [1530.53, 663.86], [1530.42, 663.92], [1530.3, 663.98], [1530.16, 664.03], [1530.01, 664.08], [1529.85, 664.11], [1529.68, 664.14], [1529.51, 664.17], [1529.32, 664.19], [1529.11, 664.19], [1528.86, 664.17], [1528.57, 664.12], [1528.22, 664.04], [1527.83, 663.94], [1527.39, 663.81], [1526.94, 663.66], [1526.48, 663.47], [1526.02, 663.25], [1525.57, 663.0], [1525.13, 662.71], [1524.68, 662.38], [1524.21, 662.03], [1523.71, 661.64], [1523.18, 661.23], [1522.62, 660.79], [1522.04, 660.32], [1521.43, 659.82], [1520.79, 659.29], [1520.1, 658.71], [1519.35, 658.07], [1518.54, 657.38], [1517.68, 656.65], [1516.77, 655.87], [1515.82, 655.04], [1514.83, 654.17], [1513.8, 653.26], [1512.74, 652.31], [1511.65, 651.31], [1510.51, 650.26], [1509.33, 649.18], [1508.1, 648.05], [1506.81, 646.89], [1505.48, 645.69], [1504.11, 644.47], [1502.68, 643.21], [1501.2, 641.89], [1499.63, 640.51], [1497.98, 639.06], [1496.23, 637.52], [1494.41, 635.93], [1492.5, 634.26], [1490.53, 632.53], [1488.49, 630.74], [1486.39, 628.88], [1484.24, 626.98], [1482.03, 625.04], [1479.76, 623.04], [1477.41, 620.94], [1474.98, 618.74], [1472.44, 616.39], [1469.81, 613.94], [1467.1, 611.39], [1464.29, 608.74], [1461.4, 605.94], [1458.41, 602.98], [1455.32, 599.84], [1452.17, 596.59], [1448.96, 593.27], [1445.67, 589.79], [1442.23, 586.05], [1438.61, 581.96], [1434.75, 577.41], [1430.65, 572.43], [1426.34, 567.09], [1421.84, 561.4], [1417.17, 555.35], [1412.38, 548.94], [1407.47, 542.16], [1402.41, 535.01], [1397.19, 527.49], [1391.84, 519.6], [1386.37, 511.37], [1380.83, 502.82], [1375.25, 493.95], [1369.57, 484.69], [1363.75, 475.0], [1357.86, 464.99], [1351.95, 454.74], [1346.08, 444.36], [1340.3, 433.94], [1334.53, 423.38], [1328.72, 412.58], [1322.94, 401.64], [1317.28, 390.67], [1311.83, 379.78], [1306.66, 369.05], [1301.76, 358.41], [1297.04, 347.73], [1292.53, 337.13], [1288.24, 326.7], [1284.18, 316.54], [1280.37, 306.75], [1276.81, 297.28], [1273.48, 288.02], [1270.39, 279.04], [1267.53, 270.38], [1264.91, 262.09], [1262.54, 254.23], [1260.42, 246.81], [1258.56, 239.78], [1256.95, 233.13], [1255.55, 226.83], [1254.34, 220.86], [1253.31, 215.2], [1252.46, 209.89], [1251.83, 204.95], [1251.4, 200.34], [1251.14, 196.01], [1251.03, 191.92], [1251.08, 188.02], [1251.27, 184.34], [1251.64, 180.92], [1252.17, 177.73], [1252.85, 174.75], [1253.66, 171.97], [1254.59, 169.35], [1255.67, 166.91], [1256.89, 164.68], [1258.26, 162.63], [1259.74, 160.77], [1261.31, 159.06], [1262.97, 157.5], [1264.72, 156.11], [1266.58, 154.91], [1268.55, 153.87], [1270.59, 152.97], [1272.69, 152.17], [1274.84, 151.45], [1277.05, 150.84], [1279.34, 150.36], [1281.69, 149.99], [1284.09, 149.69], [1286.52, 149.44], [1288.98, 149.21], [1291.47, 149.02], [1294.01, 148.88], [1296.59, 148.78], [1299.18, 148.73], [1301.79, 148.69], [1304.38, 148.66], [1306.97, 148.64], [1309.56, 148.65], [1312.15, 148.68], [1314.76, 148.73], [1317.39, 148.79], [1320.04, 148.87], [1322.7, 148.96], [1325.38, 149.08], [1328.08, 149.21], [1330.8, 149.35], [1333.56, 149.51], [1336.36, 149.69], [1339.2, 149.88], [1342.08, 150.08], [1344.98, 150.3], [1347.93, 150.54], [1350.92, 150.79], [1353.95, 151.05], [1357.03, 151.32], [1360.14, 151.61], [1363.3, 151.91], [1366.5, 152.23], [1369.75, 152.55], [1373.07, 152.89], [1376.43, 153.24], [1379.84, 153.6], [1383.31, 153.98], [1386.83, 154.36], [1390.41, 154.76], [1394.07, 155.16], [1397.79, 155.58], [1401.57, 156.01], [1405.42, 156.45], [1409.33, 156.9], [1413.31, 157.36], [1417.36, 157.84], [1421.48, 158.32], [1425.66, 158.82], [1429.91, 159.33], [1434.23, 159.85], [1438.63, 160.38], [1443.11, 160.92], [1447.67, 161.47], [1452.31, 162.02], [1457.02, 162.59], [1461.81, 163.17], [1466.68, 163.76], [1471.63, 164.36], [1476.65, 164.98], [1481.76, 165.6], [1486.94, 166.24], [1492.2, 166.88], [1497.54, 167.54], [1502.96, 168.21], [1508.46, 168.89], [1514.04, 169.57], [1519.7, 170.27], [1525.44, 170.98], [1531.25, 171.7], [1537.13, 172.42], [1543.1, 173.16], [1549.14, 173.9], [1555.26, 174.66], [1561.45, 175.42], [1567.69, 176.19], [1573.99, 176.96], [1580.35, 177.75], [1586.79, 178.53], [1593.29, 179.33], [1599.83, 180.13], [1606.4, 180.94], [1612.99, 181.75], [1619.62, 182.56], [1626.31, 183.39], [1633.02, 184.22], [1639.74, 185.06], [1646.42, 185.88], [1653.04, 186.7], [1659.59, 187.51], [1666.11, 188.31], [1672.6, 189.11], [1679.05, 189.9], [1685.47, 190.69], [1691.87, 191.48], [1698.27, 192.27], [1704.68, 193.06], [1711.05, 193.84], [1717.37, 194.62], [1723.58, 195.38], [1729.66, 196.13], [1735.62, 196.86], [1741.48, 197.57], [1747.25, 198.27], [1752.91, 198.96], [1758.46, 199.64], [1763.9, 200.31], [1769.22, 200.96], [1774.45, 201.61], [1779.56, 202.24], [1784.55, 202.86], [1789.42, 203.46], [1794.16, 204.05], [1798.76, 204.62], [1803.23, 205.17], [1807.58, 205.71], [1811.8, 206.23], [1815.91, 206.74], [1819.91, 207.23], [1823.79, 207.71], [1827.53, 208.16], [1831.16, 208.61], [1834.69, 209.03], [1838.12, 209.45], [1841.47, 209.86], [1844.72, 210.26], [1847.87, 210.65], [1850.92, 211.03], [1853.89, 211.4], [1856.8, 211.76], [1859.65, 212.11], [1862.45, 212.46], [1865.17, 212.79], [1867.84, 213.12], [1870.43, 213.44], [1872.95, 213.75], [1875.41, 214.06], [1877.8, 214.35], [1880.13, 214.64], [1882.39, 214.92], [1884.58, 215.19], [1886.7, 215.45], [1888.74, 215.71], [1890.71, 215.94], [1892.61, 216.17], [1894.44, 216.39], [1896.2, 216.6], [1897.89, 216.81], [1899.52, 217.0], [1901.07, 217.19], [1902.55, 217.38], [1903.97, 217.55], [1905.32, 217.72], [1906.62, 217.88], [1907.88, 218.04], [1909.1, 218.19], [1910.25, 218.33], [1911.36, 218.47], [1912.42, 218.6], [1913.43, 218.72], [1914.4, 218.84], [1915.32, 218.96], [1916.2, 219.07], [1917.04, 219.17], [1917.83, 219.27], [1918.57, 219.36], [1919.27, 219.44], [1919.9, 219.52], [1920.47, 219.59], [1921.0, 219.66], [1921.49, 219.72], [1921.97, 219.78], [1922.44, 219.84], [1922.9, 219.89], [1923.3, 219.94], [1923.69, 219.99], [1924.1, 220.04], [1924.54, 220.1], [1925.06, 220.16], [1925.66, 220.23], [1926.32, 220.32], [1927.03, 220.4], [1927.75, 220.49], [1928.47, 220.58], [1929.15, 220.67], [1929.85, 220.75], [1930.59, 220.84], [1931.33, 220.93], [1932.0, 221.02], [1932.57, 221.09], [1932.99, 221.14]];
var img=ctx.createImageData(W,H); var d=img.data;
function g(v){return v<=0?0:(v>=1?255:Math.round(255*Math.pow(v,GAM)));}
for(var j=0;j<H;j++){ for(var i=0;i<W;i++){
  var u=(OX+i+0.5-PU0)/SU, v=(PV0-(OY+j+0.5))/SV;
  var den=6*u-16*v+12; if(den<=0||v<=0.001) continue;
  var x=9*u/den, y=4*v/den; if(y<=0) continue;
  var X=x/y, Y=1, Z=(1-x-y)/y;
  var r= 3.2406*X-1.5372*Y-0.4986*Z;
  var gg=-0.9689*X+1.8758*Y+0.0415*Z;
  var b= 0.0557*X-0.2040*Y+1.0570*Z;
  var out=(r<0||gg<0||b<0);
  if(r<0)r=0; if(gg<0)gg=0; if(b<0)b=0;
  var m=Math.max(r,gg,b); if(m<=0) continue;
  r/=m; gg/=m; b/=m;
  var k=out?0.58:1.0;
  var p=(j*W+i)*4;
  d[p]=Math.round(g(r)*k); d[p+1]=Math.round(g(gg)*k); d[p+2]=Math.round(g(b)*k); d[p+3]=255;
}}
var oc=document.createElement('canvas'); oc.width=W; oc.height=H; oc.getContext('2d').putImageData(img,0,0);
ctx.beginPath();
for(var k=0;k<pts.length;k++){ var px=pts[k][0]-OX, py=pts[k][1]-OY; if(k==0) ctx.moveTo(px,py); else ctx.lineTo(px,py); }
ctx.closePath(); ctx.save(); ctx.clip(); ctx.drawImage(oc,0,0); ctx.restore();
})();
</script>
<div class="t" style="left:1234.42px;top:672.60px;font-size:14.94px;color:#e0e0e0;transform:scaleX(0.9500);transform-origin:0 0">0</div>
<div class="a" style="left:1243.5px;top:634.10px;width:6px;height:1.4px;background:#ccc"></div>
<div class="t" style="left:1214.65px;top:627.50px;font-size:14.94px;color:#e0e0e0;transform:scaleX(0.9500);transform-origin:0 0">0.05</div>
<div class="a" style="left:1243.5px;top:589.00px;width:6px;height:1.4px;background:#ccc"></div>
<div class="t" style="left:1222.57px;top:582.40px;font-size:14.94px;color:#e0e0e0;transform:scaleX(0.9500);transform-origin:0 0">0.1</div>
<div class="a" style="left:1243.5px;top:543.90px;width:6px;height:1.4px;background:#ccc"></div>
<div class="t" style="left:1214.65px;top:537.30px;font-size:14.94px;color:#e0e0e0;transform:scaleX(0.9500);transform-origin:0 0">0.15</div>
<div class="a" style="left:1243.5px;top:498.80px;width:6px;height:1.4px;background:#ccc"></div>
<div class="t" style="left:1222.57px;top:492.20px;font-size:14.94px;color:#e0e0e0;transform:scaleX(0.9500);transform-origin:0 0">0.2</div>
<div class="a" style="left:1243.5px;top:453.70px;width:6px;height:1.4px;background:#ccc"></div>
<div class="t" style="left:1214.65px;top:447.10px;font-size:14.94px;color:#e0e0e0;transform:scaleX(0.9500);transform-origin:0 0">0.25</div>
<div class="a" style="left:1243.5px;top:408.60px;width:6px;height:1.4px;background:#ccc"></div>
<div class="t" style="left:1222.57px;top:402.00px;font-size:14.94px;color:#e0e0e0;transform:scaleX(0.9500);transform-origin:0 0">0.3</div>
<div class="a" style="left:1243.5px;top:363.50px;width:6px;height:1.4px;background:#ccc"></div>
<div class="t" style="left:1214.65px;top:356.90px;font-size:14.94px;color:#e0e0e0;transform:scaleX(0.9500);transform-origin:0 0">0.35</div>
<div class="a" style="left:1243.5px;top:318.40px;width:6px;height:1.4px;background:#ccc"></div>
<div class="t" style="left:1222.57px;top:311.80px;font-size:14.94px;color:#e0e0e0;transform:scaleX(0.9500);transform-origin:0 0">0.4</div>
<div class="a" style="left:1243.5px;top:273.30px;width:6px;height:1.4px;background:#ccc"></div>
<div class="t" style="left:1214.65px;top:266.70px;font-size:14.94px;color:#e0e0e0;transform:scaleX(0.9500);transform-origin:0 0">0.45</div>
<div class="a" style="left:1243.5px;top:228.20px;width:6px;height:1.4px;background:#ccc"></div>
<div class="t" style="left:1222.57px;top:221.60px;font-size:14.94px;color:#e0e0e0;transform:scaleX(0.9500);transform-origin:0 0">0.5</div>
<div class="a" style="left:1243.5px;top:183.10px;width:6px;height:1.4px;background:#ccc"></div>
<div class="t" style="left:1214.65px;top:176.50px;font-size:14.94px;color:#e0e0e0;transform:scaleX(0.9500);transform-origin:0 0">0.55</div>
<div class="a" style="left:1249.00px;top:680px;width:1.4px;height:6px;background:#ccc"></div>
<div class="t" style="left:1245.87px;top:690.20px;font-size:14.53px;color:#e0e0e0;transform:scaleX(0.9500);transform-origin:0 0">0</div>
<div class="a" style="left:1303.82px;top:680px;width:1.4px;height:6px;background:#ccc"></div>
<div class="t" style="left:1291.08px;top:690.20px;font-size:14.53px;color:#e0e0e0;transform:scaleX(0.9500);transform-origin:0 0">0.05</div>
<div class="a" style="left:1358.64px;top:680px;width:1.4px;height:6px;background:#ccc"></div>
<div class="t" style="left:1349.75px;top:690.20px;font-size:14.53px;color:#e0e0e0;transform:scaleX(0.9500);transform-origin:0 0">0.1</div>
<div class="a" style="left:1413.46px;top:680px;width:1.4px;height:6px;background:#ccc"></div>
<div class="t" style="left:1400.72px;top:690.20px;font-size:14.53px;color:#e0e0e0;transform:scaleX(0.9500);transform-origin:0 0">0.15</div>
<div class="a" style="left:1468.28px;top:680px;width:1.4px;height:6px;background:#ccc"></div>
<div class="t" style="left:1459.39px;top:690.20px;font-size:14.53px;color:#e0e0e0;transform:scaleX(0.9500);transform-origin:0 0">0.2</div>
<div class="a" style="left:1523.10px;top:680px;width:1.4px;height:6px;background:#ccc"></div>
<div class="t" style="left:1510.36px;top:690.20px;font-size:14.53px;color:#e0e0e0;transform:scaleX(0.9500);transform-origin:0 0">0.25</div>
<div class="a" style="left:1577.92px;top:680px;width:1.4px;height:6px;background:#ccc"></div>
<div class="t" style="left:1569.03px;top:690.20px;font-size:14.53px;color:#e0e0e0;transform:scaleX(0.9500);transform-origin:0 0">0.3</div>
<div class="a" style="left:1632.74px;top:680px;width:1.4px;height:6px;background:#ccc"></div>
<div class="t" style="left:1620.00px;top:690.20px;font-size:14.53px;color:#e0e0e0;transform:scaleX(0.9500);transform-origin:0 0">0.35</div>
<div class="a" style="left:1687.56px;top:680px;width:1.4px;height:6px;background:#ccc"></div>
<div class="t" style="left:1678.67px;top:690.20px;font-size:14.53px;color:#e0e0e0;transform:scaleX(0.9500);transform-origin:0 0">0.4</div>
<div class="a" style="left:1742.38px;top:680px;width:1.4px;height:6px;background:#ccc"></div>
<div class="t" style="left:1729.64px;top:690.20px;font-size:14.53px;color:#e0e0e0;transform:scaleX(0.9500);transform-origin:0 0">0.45</div>
<div class="a" style="left:1797.20px;top:680px;width:1.4px;height:6px;background:#ccc"></div>
<div class="t" style="left:1788.31px;top:690.20px;font-size:14.53px;color:#e0e0e0;transform:scaleX(0.9500);transform-origin:0 0">0.5</div>
<div class="a" style="left:1852.02px;top:680px;width:1.4px;height:6px;background:#ccc"></div>
<div class="t" style="left:1839.28px;top:690.20px;font-size:14.53px;color:#e0e0e0;transform:scaleX(0.9500);transform-origin:0 0">0.55</div>
<div class="a" style="left:1377.7px;top:162.5px;width:15px;height:15px;border:1.6px solid #fff"></div>
<div class="a" style="left:1403.5px;top:189.5px;width:15px;height:15px;border:1.6px solid #fff"></div>
<div class="a" style="left:1443.9px;top:180.2px;width:15px;height:15px;border:1.6px solid #fff"></div>
<div class="a" style="left:1464.8px;top:171.5px;width:15px;height:15px;border:1.6px solid #fff"></div>
<div class="a" style="left:1493.0px;top:175.8px;width:15px;height:15px;border:1.6px solid #fff"></div>
<div class="a" style="left:1525.4px;top:183.1px;width:15px;height:15px;border:1.6px solid #fff"></div>
<div class="a" style="left:1441.5px;top:204.5px;width:15px;height:15px;border:1.6px solid #fff"></div>
<div class="a" style="left:1410.5px;top:238.7px;width:15px;height:15px;border:1.6px solid #fff"></div>
<div class="a" style="left:1393.4px;top:260.1px;width:15px;height:15px;border:1.6px solid #fff"></div>
<div class="a" style="left:1399.3px;top:294.4px;width:15px;height:15px;border:1.6px solid #fff"></div>
<div class="a" style="left:1434.3px;top:291.5px;width:15px;height:15px;border:1.6px solid #fff"></div>
<div class="a" style="left:1455.3px;top:297.5px;width:15px;height:15px;border:1.6px solid #fff"></div>
<div class="a" style="left:1492.1px;top:316.9px;width:15px;height:15px;border:1.6px solid #fff"></div>
<div class="a" style="left:1556.5px;top:285.4px;width:15px;height:15px;border:1.6px solid #fff"></div>
<div class="a" style="left:1589.8px;top:234.5px;width:15px;height:15px;border:1.6px solid #fff"></div>
<div class="a" style="left:1570.2px;top:189.2px;width:15px;height:15px;border:1.6px solid #fff"></div>
<div class="a" style="left:1543.5px;top:193.9px;width:15px;height:15px;border:1.6px solid #fff"></div>
<div class="a" style="left:1534.9px;top:200.5px;width:15px;height:15px;border:1.6px solid #fff"></div>
<div class="a" style="left:1518.5px;top:203.5px;width:15px;height:15px;border:1.6px solid #fff"></div>
<div class="a" style="left:1543.5px;top:213.0px;width:15px;height:15px;border:1.6px solid #fff"></div>
<div class="a" style="left:1528.3px;top:214.9px;width:15px;height:15px;border:1.6px solid #fff"></div>
<div class="a" style="left:1511.1px;top:217.8px;width:15px;height:15px;border:1.6px solid #fff"></div>
<div class="a" style="left:1497.8px;top:226.3px;width:15px;height:15px;border:1.6px solid #fff"></div>
<div class="a" style="left:1497.5px;top:232.1px;width:15px;height:15px;border:1.6px solid #fff"></div>
<div class="a" style="left:1550.2px;top:203.5px;width:15px;height:15px;border:1.6px solid #fff"></div>
<div class="a" style="left:1736.1px;top:198.5px;width:15px;height:15px;border:1.6px solid #fff"></div>
<div class="a" style="left:1652.5px;top:221.5px;width:15px;height:15px;border:1.6px solid #fff"></div>
<div class="a" style="left:1436.9px;top:349.9px;width:15px;height:15px;border:1.6px solid #fff"></div>
<div class="a" style="left:1436.9px;top:405.3px;width:15px;height:15px;border:1.6px solid #fff"></div>
<div class="a" style="left:1434.3px;top:527.8px;width:15px;height:15px;border:1.6px solid #fff"></div>
<div class="a" style="left:1576.0px;top:372.5px;width:15px;height:15px;border:1.6px solid #fff"></div>
<div class="a" style="left:1457.8px;top:247.9px;width:15px;height:15px;border:3px solid #000"></div>
<div class="a" style="left:1376.9px;top:165.5px;width:9.0px;height:9.0px;border-radius:50%;background:#30e030;border:1.2px solid #000"></div>
<div class="a" style="left:1400.4px;top:189.3px;width:9.0px;height:9.0px;border-radius:50%;background:#5a8050;border:1.2px solid #000"></div>
<div class="a" style="left:1443.1px;top:180.4px;width:9.0px;height:9.0px;border-radius:50%;background:#a0a850;border:1.2px solid #000"></div>
<div class="a" style="left:1466.5px;top:174.5px;width:9.0px;height:9.0px;border-radius:50%;background:#f0e010;border:1.2px solid #000"></div>
<div class="a" style="left:1496.4px;top:178.8px;width:9.0px;height:9.0px;border-radius:50%;background:#e0c030;border:1.2px solid #000"></div>
<div class="a" style="left:1532.2px;top:184.9px;width:9.0px;height:9.0px;border-radius:50%;background:#e0a040;border:1.2px solid #000"></div>
<div class="a" style="left:1440.4px;top:204.5px;width:9.0px;height:9.0px;border-radius:50%;background:#607050;border:1.2px solid #000"></div>
<div class="a" style="left:1406.1px;top:240.2px;width:9.0px;height:9.0px;border-radius:50%;background:#70b0a0;border:1.2px solid #000"></div>
<div class="a" style="left:1390.8px;top:264.5px;width:9.0px;height:9.0px;border-radius:50%;background:#20e0f0;border:1.2px solid #000"></div>
<div class="a" style="left:1395.4px;top:294.5px;width:9.0px;height:9.0px;border-radius:50%;background:#1880a0;border:1.2px solid #000"></div>
<div class="a" style="left:1429.0px;top:292.6px;width:9.0px;height:9.0px;border-radius:50%;background:#6080a8;border:1.2px solid #000"></div>
<div class="a" style="left:1445.5px;top:288.4px;width:9.0px;height:9.0px;border-radius:50%;background:#000;border:1.2px solid #000"></div>
<div class="a" style="left:1452.6px;top:298.9px;width:9.0px;height:9.0px;border-radius:50%;background:#8080b0;border:1.2px solid #000"></div>
<div class="a" style="left:1457.0px;top:249.4px;width:9.0px;height:9.0px;border-radius:50%;background:#a0a0a0;border:1.2px solid #000"></div>
<div class="a" style="left:1476.5px;top:330.3px;width:9.0px;height:9.0px;border-radius:50%;background:#604868;border:1.2px solid #000"></div>
<div class="a" style="left:1562.3px;top:288.4px;width:9.0px;height:9.0px;border-radius:50%;background:#c060a0;border:1.2px solid #000"></div>
<div class="a" style="left:1599.9px;top:234.5px;width:9.0px;height:9.0px;border-radius:50%;background:#c05060;border:1.2px solid #000"></div>
<div class="a" style="left:1670.5px;top:219.5px;width:9.0px;height:9.0px;border-radius:50%;background:#a03030;border:1.2px solid #000"></div>
<div class="a" style="left:1743.0px;top:200.5px;width:9.0px;height:9.0px;border-radius:50%;background:#f01010;border:1.2px solid #000"></div>
<div class="a" style="left:1430.3px;top:356.2px;width:9.0px;height:9.0px;border-radius:50%;background:#5868a0;border:1.2px solid #000"></div>
<div class="a" style="left:1430.3px;top:415.8px;width:9.0px;height:9.0px;border-radius:50%;background:#404880;border:1.2px solid #000"></div>
<div class="a" style="left:1426.3px;top:524.8px;width:9.0px;height:9.0px;border-radius:50%;background:#1010f0;border:1.2px solid #000"></div>
<div class="a" style="left:1572.0px;top:377.0px;width:9.0px;height:9.0px;border-radius:50%;background:#e010e0;border:1.2px solid #000"></div>
<div class="a" style="left:1498.9px;top:217.5px;width:9.0px;height:9.0px;border-radius:50%;background:#f4c4a4;border:1.2px solid #000"></div>
<div class="a" style="left:1496.6px;top:227.1px;width:9.0px;height:9.0px;border-radius:50%;background:#f0c0a0;border:1.2px solid #000"></div>
<div class="a" style="left:1512.8px;top:218.9px;width:9.0px;height:9.0px;border-radius:50%;background:#7a5040;border:1.2px solid #000"></div>
<div class="a" style="left:1514.1px;top:213.7px;width:9.0px;height:9.0px;border-radius:50%;background:#d09878;border:1.2px solid #000"></div>
<div class="a" style="left:1521.7px;top:205.5px;width:9.0px;height:9.0px;border-radius:50%;background:#c89070;border:1.2px solid #000"></div>
<div class="a" style="left:1521.4px;top:212.2px;width:9.0px;height:9.0px;border-radius:50%;background:#d09a78;border:1.2px solid #000"></div>
<div class="a" style="left:1532.2px;top:213.1px;width:9.0px;height:9.0px;border-radius:50%;background:#d89070;border:1.2px solid #000"></div>
<div class="a" style="left:1539.3px;top:205.5px;width:9.0px;height:9.0px;border-radius:50%;background:#d89070;border:1.2px solid #000"></div>
<div class="a" style="left:1542.3px;top:198.9px;width:9.0px;height:9.0px;border-radius:50%;background:#8a5a3a;border:1.2px solid #000"></div>
<div class="a" style="left:1553.2px;top:196.5px;width:9.0px;height:9.0px;border-radius:50%;background:#6a4430;border:1.2px solid #000"></div>
<div class="a" style="left:1562.3px;top:202.7px;width:9.0px;height:9.0px;border-radius:50%;background:#6a4430;border:1.2px solid #000"></div>
<div class="a" style="left:1548.0px;top:211.8px;width:9.0px;height:9.0px;border-radius:50%;background:#f09878;border:1.2px solid #000"></div>
<div class="a" style="left:1577.0px;top:188.9px;width:9.0px;height:9.0px;border-radius:50%;background:#c88040;border:1.2px solid #000"></div>
<div class="a" style="left:1580.8px;top:192.2px;width:9.0px;height:9.0px;border-radius:50%;background:#a86838;border:1.2px solid #000"></div>
<div class="a" style="left:1695px;top:486px;width:210px;height:149px;background:#2b2b2b"></div>
<div class="a" style="left:1697px;top:489px;width:205px;height:144px;border:2px solid #8a8a8a;background:linear-gradient(135deg,#ff8c2c 0%,#ff6a30 45%,#ff4a24 100%);overflow:hidden">
<div class="a" style="left:133.4px;top:19.0px;width:15px;height:15px;border:1.6px solid #fff"></div>
<div class="a" style="left:184.4px;top:20.4px;width:15px;height:15px;border:1.6px solid #fff"></div>
<div class="a" style="left:25.4px;top:41.0px;width:15px;height:15px;border:1.6px solid #fff"></div>
<div class="a" style="left:93.0px;top:62.0px;width:15px;height:15px;border:1.6px solid #fff"></div>
<div class="a" style="left:112.4px;top:77.0px;width:15px;height:15px;border:1.6px solid #fff"></div>
<div class="a" style="left:183.0px;top:60.6px;width:15px;height:15px;border:1.6px solid #fff"></div>
<div class="a" style="left:3.0px;top:77.0px;width:15px;height:15px;border:1.6px solid #fff"></div>
<div class="a" style="left:10.4px;top:86.0px;width:15px;height:15px;border:1.6px solid #fff"></div>
<div class="a" style="left:18.4px;top:99.4px;width:15px;height:15px;border:1.6px solid #fff"></div>
<div class="a" style="left:97.4px;top:104.0px;width:15px;height:15px;border:1.6px solid #fff"></div>
<div class="a" style="left:49.3px;top:27.3px;width:9.4px;height:9.4px;border-radius:50%;background:#c89060;border:1.3px solid #000"></div>
<div class="a" style="left:7.3px;top:65.3px;width:9.4px;height:9.4px;border-radius:50%;background:#c88a68;border:1.3px solid #000"></div>
<div class="a" style="left:12.3px;top:74.7px;width:9.4px;height:9.4px;border-radius:50%;background:#f0a880;border:1.3px solid #000"></div>
<div class="a" style="left:35.3px;top:72.9px;width:9.4px;height:9.4px;border-radius:50%;background:#c08060;border:1.3px solid #000"></div>
<div class="a" style="left:45.3px;top:86.9px;width:9.4px;height:9.4px;border-radius:50%;background:#d08a70;border:1.3px solid #000"></div>
<div class="a" style="left:119.3px;top:50.7px;width:9.4px;height:9.4px;border-radius:50%;background:#d89068;border:1.3px solid #000"></div>
<div class="a" style="left:141.3px;top:65.7px;width:9.4px;height:9.4px;border-radius:50%;background:#d08858;border:1.3px solid #000"></div>
<div class="a" style="left:117.7px;top:97.3px;width:9.4px;height:9.4px;border-radius:50%;background:#f09a78;border:1.3px solid #000"></div>
<div class="a" style="left:178.3px;top:11.9px;width:9.4px;height:9.4px;border-radius:50%;background:#805030;border:1.3px solid #000"></div>
<div class="a" style="left:-6.1px;top:80.7px;width:9.4px;height:9.4px;border-radius:50%;background:#c88a68;border:1.3px solid #000"></div>
</div>
<div class="a" style="left:1645px;top:643.5px;width:260px;height:29.7px;background:#333"></div>
<div class="t" style="left:1646.30px;top:648.12px;font-size:22.07px;color:#f4f4f4;transform:scaleX(0.9184);transform-origin:0 0;">RGB Triplet: 217, 140, 94</div>
<div class="t" style="left:252.20px;top:726.06px;font-size:31.70px;color:#f0f0f0;transform:scaleX(0.9555);transform-origin:0 0;">Avg dE2000: 1.78</div>
<div class="t" style="left:249.20px;top:771.11px;font-size:32.12px;color:#f0f0f0;transform:scaleX(0.9461);transform-origin:0 0;">Max dE2000: 4.41</div>
<div class="t" style="left:215.70px;top:824.32px;font-size:31.28px;color:#f0f0f0;transform:scaleX(0.9806);transform-origin:0 0;">Current Reading</div>
<div class="t" style="left:215.20px;top:866.34px;font-size:28.07px;color:#f0f0f0;transform:scaleX(0.9159);transform-origin:0 0;">x: 0.4534</div>
<div class="t" style="left:376.60px;top:866.34px;font-size:28.07px;color:#f0f0f0;transform:scaleX(0.9202);transform-origin:0 0;">y: 0.3884</div>
<div class="t" style="left:215.20px;top:912.03px;font-size:27.37px;color:#f0f0f0;transform:scaleX(0.9366);transform-origin:0 0;">fL: 37.29</div>
<div class="t" style="left:215.70px;top:948.91px;font-size:27.51px;color:#f0f0f0;transform:scaleX(0.9688);transform-origin:0 0;">cd/m²: 127.75</div>
<div class="a" style="left:0;top:0;width:1920px;height:1050px;clip-path:inset(735px 1px 65px 533px)">
<div class="a" style="left:533px;top:735px;width:1386px;height:250px;background:#2a2a2a"></div>
<div class="a" style="left:533px;top:735px;width:1386px;height:13px;background:#2a2a2a"></div>
<div class="a" style="left:533px;top:748px;width:1386px;height:14px;background:#141414"></div>
<div class="a" style="left:533px;top:735px;width:8px;height:232px;background:#0a0a0a"></div>
<div class="t" style="left:623.60px;top:742.21px;font-size:13.69px;color:#f2f2f2;transform:scaleX(0.7800);transform-origin:0 0">White</div>
<div class="t" style="left:665.00px;top:742.21px;font-size:13.69px;color:#f2f2f2;transform:scaleX(0.7800);transform-origin:0 0">Gray 80</div>
<div class="t" style="left:707.60px;top:742.21px;font-size:13.69px;color:#f2f2f2;transform:scaleX(0.7800);transform-origin:0 0">Gray 65</div>
<div class="t" style="left:750.00px;top:742.21px;font-size:13.69px;color:#f2f2f2;transform:scaleX(0.7800);transform-origin:0 0">Gray 50</div>
<div class="t" style="left:792.50px;top:742.21px;font-size:13.69px;color:#f2f2f2;transform:scaleX(0.7800);transform-origin:0 0">Gray 35</div>
<div class="t" style="left:835.00px;top:742.21px;font-size:13.69px;color:#f2f2f2;transform:scaleX(0.7800);transform-origin:0 0">Black</div>
<div class="t" style="left:870.00px;top:742.21px;font-size:13.69px;color:#f2f2f2;transform:scaleX(0.7800);transform-origin:0 0">Dark Skin</div>
<div class="t" style="left:920.60px;top:742.21px;font-size:13.69px;color:#f2f2f2;transform:scaleX(0.7800);transform-origin:0 0">Light Skin</div>
<div class="t" style="left:972.00px;top:742.21px;font-size:13.69px;color:#f2f2f2;transform:scaleX(0.7800);transform-origin:0 0">Blue Sky</div>
<div class="t" style="left:1017.80px;top:742.21px;font-size:13.69px;color:#f2f2f2;transform:scaleX(0.7800);transform-origin:0 0">Foliage</div>
<div class="t" style="left:1057.40px;top:742.21px;font-size:13.69px;color:#f2f2f2;transform:scaleX(0.7800);transform-origin:0 0">Blue Flower</div>
<div class="t" style="left:1119.80px;top:742.21px;font-size:13.69px;color:#f2f2f2;transform:scaleX(0.7800);transform-origin:0 0">Bluish Green</div>
<div class="t" style="left:1186.20px;top:742.21px;font-size:13.69px;color:#f2f2f2;transform:scaleX(0.7800);transform-origin:0 0">Orange</div>
<div class="t" style="left:1227.60px;top:742.21px;font-size:13.69px;color:#f2f2f2;transform:scaleX(0.7800);transform-origin:0 0">Purplish Blue</div>
<div class="t" style="left:1296.40px;top:742.21px;font-size:13.69px;color:#f2f2f2;transform:scaleX(0.7800);transform-origin:0 0">Moderate Red</div>
<div class="t" style="left:1370.20px;top:742.21px;font-size:13.69px;color:#f2f2f2;transform:scaleX(0.7800);transform-origin:0 0">Purple</div>
<div class="t" style="left:1407.40px;top:742.21px;font-size:13.69px;color:#f2f2f2;transform:scaleX(0.7800);transform-origin:0 0">Yellow Green</div>
<div class="t" style="left:1476.00px;top:742.21px;font-size:13.69px;color:#f2f2f2;transform:scaleX(0.7800);transform-origin:0 0">Orange Yellow</div>
<div class="t" style="left:1550.00px;top:742.21px;font-size:13.69px;color:#f2f2f2;transform:scaleX(0.7800);transform-origin:0 0">Blue</div>
<div class="t" style="left:1584.70px;top:742.21px;font-size:13.69px;color:#f2f2f2;transform:scaleX(0.7800);transform-origin:0 0">Green</div>
<div class="t" style="left:1620.00px;top:742.21px;font-size:13.69px;color:#f2f2f2;transform:scaleX(0.7800);transform-origin:0 0">Red</div>
<div class="t" style="left:1654.80px;top:742.21px;font-size:13.69px;color:#f2f2f2;transform:scaleX(0.7800);transform-origin:0 0">Yellow</div>
<div class="t" style="left:1696.00px;top:742.21px;font-size:13.69px;color:#f2f2f2;transform:scaleX(0.7800);transform-origin:0 0">Magenta</div>
<div class="t" style="left:1744.50px;top:742.21px;font-size:13.69px;color:#f2f2f2;transform:scaleX(0.7800);transform-origin:0 0">Cyan</div>
<div class="t" style="left:1779.50px;top:742.21px;font-size:13.69px;color:#f2f2f2;transform:scaleX(0.7800);transform-origin:0 0">100% Red</div>
<div class="t" style="left:1832.70px;top:742.21px;font-size:13.69px;color:#f2f2f2;transform:scaleX(0.7800);transform-origin:0 0">100% Green</div>
<div class="t" style="left:1896.50px;top:742.21px;font-size:13.69px;color:#f2f2f2;transform:scaleX(0.7800);transform-origin:0 0">100% Blue</div>
<div class="a" style="left:541px;top:761.70px;width:1378px;height:26.00px;background:#3c3c3c"></div>
<div class="a" style="left:533px;top:761.70px;width:8px;height:26.00px;background:#1e1e1e;border-top:1px solid #2c2c2c"></div>
<div class="t" style="left:544.20px;top:768.40px;font-size:14.53px;color:#f0f0f0;transform:scaleX(0.7200);transform-origin:0 0">x: CIE31</div>
<div class="t" style="left:623.60px;top:768.40px;font-size:14.53px;color:#f0f0f0;transform:scaleX(0.7350);transform-origin:0 0">0.31</div>
<div class="t" style="left:665.00px;top:768.40px;font-size:14.53px;color:#f0f0f0;transform:scaleX(0.7350);transform-origin:0 0">0.31</div>
<div class="t" style="left:707.60px;top:768.40px;font-size:14.53px;color:#f0f0f0;transform:scaleX(0.7350);transform-origin:0 0">0.31</div>
<div class="t" style="left:750.00px;top:768.40px;font-size:14.53px;color:#f0f0f0;transform:scaleX(0.7350);transform-origin:0 0">0.31</div>
<div class="t" style="left:792.50px;top:768.40px;font-size:14.53px;color:#f0f0f0;transform:scaleX(0.7350);transform-origin:0 0">0.31</div>
<div class="t" style="left:835.00px;top:768.40px;font-size:14.53px;color:#f0f0f0;transform:scaleX(0.7350);transform-origin:0 0">0.26</div>
<div class="t" style="left:870.00px;top:768.40px;font-size:14.53px;color:#f0f0f0;transform:scaleX(0.7350);transform-origin:0 0">0.41</div>
<div class="t" style="left:920.60px;top:768.40px;font-size:14.53px;color:#f0f0f0;transform:scaleX(0.7350);transform-origin:0 0">0.38</div>
<div class="t" style="left:972.00px;top:768.40px;font-size:14.53px;color:#f0f0f0;transform:scaleX(0.7350);transform-origin:0 0">0.24</div>
<div class="t" style="left:1017.80px;top:768.40px;font-size:14.53px;color:#f0f0f0;transform:scaleX(0.7350);transform-origin:0 0">0.34</div>
<div class="t" style="left:1057.40px;top:768.40px;font-size:14.53px;color:#f0f0f0;transform:scaleX(0.7350);transform-origin:0 0">0.26</div>
<div class="t" style="left:1119.80px;top:768.40px;font-size:14.53px;color:#f0f0f0;transform:scaleX(0.7350);transform-origin:0 0">0.26</div>
<div class="t" style="left:1186.20px;top:768.40px;font-size:14.53px;color:#f0f0f0;transform:scaleX(0.7350);transform-origin:0 0">0.52</div>
<div class="t" style="left:1227.60px;top:768.40px;font-size:14.53px;color:#f0f0f0;transform:scaleX(0.7350);transform-origin:0 0">0.21</div>
<div class="t" style="left:1296.40px;top:768.40px;font-size:14.53px;color:#f0f0f0;transform:scaleX(0.7350);transform-origin:0 0">0.47</div>
<div class="t" style="left:1370.20px;top:768.40px;font-size:14.53px;color:#f0f0f0;transform:scaleX(0.7350);transform-origin:0 0">0.26</div>
<div class="t" style="left:1407.40px;top:768.40px;font-size:14.53px;color:#f0f0f0;transform:scaleX(0.7350);transform-origin:0 0">0.37</div>
<div class="t" style="left:1476.00px;top:768.40px;font-size:14.53px;color:#f0f0f0;transform:scaleX(0.7350);transform-origin:0 0">0.48</div>
<div class="t" style="left:1550.00px;top:768.40px;font-size:14.53px;color:#f0f0f0;transform:scaleX(0.7350);transform-origin:0 0">0.18</div>
<div class="t" style="left:1584.70px;top:768.40px;font-size:14.53px;color:#f0f0f0;transform:scaleX(0.7350);transform-origin:0 0">0.30</div>
<div class="t" style="left:1620.00px;top:768.40px;font-size:14.53px;color:#f0f0f0;transform:scaleX(0.7350);transform-origin:0 0">0.55</div>
<div class="t" style="left:1654.80px;top:768.40px;font-size:14.53px;color:#f0f0f0;transform:scaleX(0.7350);transform-origin:0 0">0.45</div>
<div class="t" style="left:1696.00px;top:768.40px;font-size:14.53px;color:#f0f0f0;transform:scaleX(0.7350);transform-origin:0 0">0.38</div>
<div class="t" style="left:1744.50px;top:768.40px;font-size:14.53px;color:#f0f0f0;transform:scaleX(0.7350);transform-origin:0 0">0.20</div>
<div class="t" style="left:1779.50px;top:768.40px;font-size:14.53px;color:#f0f0f0;transform:scaleX(0.7350);transform-origin:0 0">0.65</div>
<div class="t" style="left:1832.70px;top:768.40px;font-size:14.53px;color:#f0f0f0;transform:scaleX(0.7350);transform-origin:0 0">0.29</div>
<div class="t" style="left:1896.50px;top:768.40px;font-size:14.53px;color:#f0f0f0;transform:scaleX(0.7350);transform-origin:0 0">0.14</div>
<div class="a" style="left:541px;top:787.70px;width:1378px;height:25.70px;background:#7b7b7b"></div>
<div class="a" style="left:533px;top:787.70px;width:8px;height:25.70px;background:#1e1e1e;border-top:1px solid #2c2c2c"></div>
<div class="t" style="left:544.20px;top:794.40px;font-size:14.53px;color:#f0f0f0;transform:scaleX(0.7200);transform-origin:0 0">y: CIE31</div>
<div class="t" style="left:623.60px;top:794.40px;font-size:14.53px;color:#f0f0f0;transform:scaleX(0.7350);transform-origin:0 0">0.33</div>
<div class="t" style="left:665.00px;top:794.40px;font-size:14.53px;color:#f0f0f0;transform:scaleX(0.7350);transform-origin:0 0">0.33</div>
<div class="t" style="left:707.60px;top:794.40px;font-size:14.53px;color:#f0f0f0;transform:scaleX(0.7350);transform-origin:0 0">0.33</div>
<div class="t" style="left:750.00px;top:794.40px;font-size:14.53px;color:#f0f0f0;transform:scaleX(0.7350);transform-origin:0 0">0.33</div>
<div class="t" style="left:792.50px;top:794.40px;font-size:14.53px;color:#f0f0f0;transform:scaleX(0.7350);transform-origin:0 0">0.33</div>
<div class="t" style="left:835.00px;top:794.40px;font-size:14.53px;color:#f0f0f0;transform:scaleX(0.7350);transform-origin:0 0">0.27</div>
<div class="t" style="left:870.00px;top:794.40px;font-size:14.53px;color:#f0f0f0;transform:scaleX(0.7350);transform-origin:0 0">0.37</div>
<div class="t" style="left:920.60px;top:794.40px;font-size:14.53px;color:#f0f0f0;transform:scaleX(0.7350);transform-origin:0 0">0.36</div>
<div class="t" style="left:972.00px;top:794.40px;font-size:14.53px;color:#f0f0f0;transform:scaleX(0.7350);transform-origin:0 0">0.27</div>
<div class="t" style="left:1017.80px;top:794.40px;font-size:14.53px;color:#f0f0f0;transform:scaleX(0.7350);transform-origin:0 0">0.44</div>
<div class="t" style="left:1057.40px;top:794.40px;font-size:14.53px;color:#f0f0f0;transform:scaleX(0.7350);transform-origin:0 0">0.26</div>
<div class="t" style="left:1119.80px;top:794.40px;font-size:14.53px;color:#f0f0f0;transform:scaleX(0.7350);transform-origin:0 0">0.37</div>
<div class="t" style="left:1186.20px;top:794.40px;font-size:14.53px;color:#f0f0f0;transform:scaleX(0.7350);transform-origin:0 0">0.41</div>
<div class="t" style="left:1227.60px;top:794.40px;font-size:14.53px;color:#f0f0f0;transform:scaleX(0.7350);transform-origin:0 0">0.19</div>
<div class="t" style="left:1296.40px;top:794.40px;font-size:14.53px;color:#f0f0f0;transform:scaleX(0.7350);transform-origin:0 0">0.31</div>
<div class="t" style="left:1370.20px;top:794.40px;font-size:14.53px;color:#f0f0f0;transform:scaleX(0.7350);transform-origin:0 0">0.21</div>
<div class="t" style="left:1407.40px;top:794.40px;font-size:14.53px;color:#f0f0f0;transform:scaleX(0.7350);transform-origin:0 0">0.50</div>
<div class="t" style="left:1476.00px;top:794.40px;font-size:14.53px;color:#f0f0f0;transform:scaleX(0.7350);transform-origin:0 0">0.44</div>
<div class="t" style="left:1550.00px;top:794.40px;font-size:14.53px;color:#f0f0f0;transform:scaleX(0.7350);transform-origin:0 0">0.14</div>
<div class="t" style="left:1584.70px;top:794.40px;font-size:14.53px;color:#f0f0f0;transform:scaleX(0.7350);transform-origin:0 0">0.50</div>
<div class="t" style="left:1620.00px;top:794.40px;font-size:14.53px;color:#f0f0f0;transform:scaleX(0.7350);transform-origin:0 0">0.32</div>
<div class="t" style="left:1654.80px;top:794.40px;font-size:14.53px;color:#f0f0f0;transform:scaleX(0.7350);transform-origin:0 0">0.48</div>
<div class="t" style="left:1696.00px;top:794.40px;font-size:14.53px;color:#f0f0f0;transform:scaleX(0.7350);transform-origin:0 0">0.25</div>
<div class="t" style="left:1744.50px;top:794.40px;font-size:14.53px;color:#f0f0f0;transform:scaleX(0.7350);transform-origin:0 0">0.27</div>
<div class="t" style="left:1779.50px;top:794.40px;font-size:14.53px;color:#f0f0f0;transform:scaleX(0.7350);transform-origin:0 0">0.33</div>
<div class="t" style="left:1832.70px;top:794.40px;font-size:14.53px;color:#f0f0f0;transform:scaleX(0.7350);transform-origin:0 0">0.60</div>
<div class="t" style="left:1896.50px;top:794.40px;font-size:14.53px;color:#f0f0f0;transform:scaleX(0.7350);transform-origin:0 0">0.06</div>
<div class="a" style="left:541px;top:813.40px;width:1378px;height:25.60px;background:#3c3c3c"></div>
<div class="a" style="left:533px;top:813.40px;width:8px;height:25.60px;background:#1e1e1e;border-top:1px solid #2c2c2c"></div>
<div class="t" style="left:544.20px;top:820.10px;font-size:14.53px;color:#f0f0f0;transform:scaleX(0.7200);transform-origin:0 0">Y</div>
<div class="t" style="left:623.60px;top:820.10px;font-size:14.53px;color:#f0f0f0;transform:scaleX(0.7350);transform-origin:0 0">369.50</div>
<div class="t" style="left:665.00px;top:820.10px;font-size:14.53px;color:#f0f0f0;transform:scaleX(0.7350);transform-origin:0 0">299.62</div>
<div class="t" style="left:707.60px;top:820.10px;font-size:14.53px;color:#f0f0f0;transform:scaleX(0.7350);transform-origin:0 0">241.25</div>
<div class="t" style="left:750.00px;top:820.10px;font-size:14.53px;color:#f0f0f0;transform:scaleX(0.7350);transform-origin:0 0">183.59</div>
<div class="t" style="left:792.50px;top:820.10px;font-size:14.53px;color:#f0f0f0;transform:scaleX(0.7350);transform-origin:0 0">125.23</div>
<div class="t" style="left:835.00px;top:820.10px;font-size:14.53px;color:#f0f0f0;transform:scaleX(0.7350);transform-origin:0 0">0.27</div>
<div class="t" style="left:870.00px;top:820.10px;font-size:14.53px;color:#f0f0f0;transform:scaleX(0.7350);transform-origin:0 0">34.30</div>
<div class="t" style="left:920.60px;top:820.10px;font-size:14.53px;color:#f0f0f0;transform:scaleX(0.7350);transform-origin:0 0">129.09</div>
<div class="t" style="left:972.00px;top:820.10px;font-size:14.53px;color:#f0f0f0;transform:scaleX(0.7350);transform-origin:0 0">68.23</div>
<div class="t" style="left:1017.80px;top:820.10px;font-size:14.53px;color:#f0f0f0;transform:scaleX(0.7350);transform-origin:0 0">45.12</div>
<div class="t" style="left:1057.40px;top:820.10px;font-size:14.53px;color:#f0f0f0;transform:scaleX(0.7350);transform-origin:0 0">86.62</div>
<div class="t" style="left:1119.80px;top:820.10px;font-size:14.53px;color:#f0f0f0;transform:scaleX(0.7350);transform-origin:0 0">155.64</div>
<div class="t" style="left:1186.20px;top:820.10px;font-size:14.53px;color:#f0f0f0;transform:scaleX(0.7350);transform-origin:0 0">104.96</div>
<div class="t" style="left:1227.60px;top:820.10px;font-size:14.53px;color:#f0f0f0;transform:scaleX(0.7350);transform-origin:0 0">41.41</div>
<div class="t" style="left:1296.40px;top:820.10px;font-size:14.53px;color:#f0f0f0;transform:scaleX(0.7350);transform-origin:0 0">67.44</div>
<div class="t" style="left:1370.20px;top:820.10px;font-size:14.53px;color:#f0f0f0;transform:scaleX(0.7350);transform-origin:0 0">20.44</div>
<div class="t" style="left:1407.40px;top:820.10px;font-size:14.53px;color:#f0f0f0;transform:scaleX(0.7350);transform-origin:0 0">157.93</div>
<div class="t" style="left:1476.00px;top:820.10px;font-size:14.53px;color:#f0f0f0;transform:scaleX(0.7350);transform-origin:0 0">157.39</div>
<div class="t" style="left:1550.00px;top:820.10px;font-size:14.53px;color:#f0f0f0;transform:scaleX(0.7350);transform-origin:0 0">21.37</div>
<div class="t" style="left:1584.70px;top:820.10px;font-size:14.53px;color:#f0f0f0;transform:scaleX(0.7350);transform-origin:0 0">83.40</div>
<div class="t" style="left:1620.00px;top:820.10px;font-size:14.53px;color:#f0f0f0;transform:scaleX(0.7350);transform-origin:0 0">41.56</div>
<div class="t" style="left:1654.80px;top:820.10px;font-size:14.53px;color:#f0f0f0;transform:scaleX(0.7350);transform-origin:0 0">220.90</div>
<div class="t" style="left:1696.00px;top:820.10px;font-size:14.53px;color:#f0f0f0;transform:scaleX(0.7350);transform-origin:0 0">68.39</div>
<div class="t" style="left:1744.50px;top:820.10px;font-size:14.53px;color:#f0f0f0;transform:scaleX(0.7350);transform-origin:0 0">71.89</div>
<div class="t" style="left:1779.50px;top:820.10px;font-size:14.53px;color:#f0f0f0;transform:scaleX(0.7350);transform-origin:0 0">78.82</div>
<div class="t" style="left:1832.70px;top:820.10px;font-size:14.53px;color:#f0f0f0;transform:scaleX(0.7350);transform-origin:0 0">262.90</div>
<div class="t" style="left:1896.50px;top:820.10px;font-size:14.53px;color:#f0f0f0;transform:scaleX(0.7350);transform-origin:0 0">29.4</div>
<div class="a" style="left:541px;top:839.00px;width:1378px;height:25.70px;background:#7b7b7b"></div>
<div class="a" style="left:533px;top:839.00px;width:8px;height:25.70px;background:#1e1e1e;border-top:1px solid #2c2c2c"></div>
<div class="t" style="left:544.20px;top:845.70px;font-size:14.53px;color:#f0f0f0;transform:scaleX(0.7200);transform-origin:0 0">Target x:CIE31</div>
<div class="t" style="left:623.60px;top:845.70px;font-size:14.53px;color:#f0f0f0;transform:scaleX(0.7350);transform-origin:0 0">0.31</div>
<div class="t" style="left:665.00px;top:845.70px;font-size:14.53px;color:#f0f0f0;transform:scaleX(0.7350);transform-origin:0 0">0.31</div>
<div class="t" style="left:707.60px;top:845.70px;font-size:14.53px;color:#f0f0f0;transform:scaleX(0.7350);transform-origin:0 0">0.31</div>
<div class="t" style="left:750.00px;top:845.70px;font-size:14.53px;color:#f0f0f0;transform:scaleX(0.7350);transform-origin:0 0">0.31</div>
<div class="t" style="left:792.50px;top:845.70px;font-size:14.53px;color:#f0f0f0;transform:scaleX(0.7350);transform-origin:0 0">0.31</div>
<div class="t" style="left:835.00px;top:845.70px;font-size:14.53px;color:#f0f0f0;transform:scaleX(0.7350);transform-origin:0 0">0.31</div>
<div class="t" style="left:870.00px;top:845.70px;font-size:14.53px;color:#f0f0f0;transform:scaleX(0.7350);transform-origin:0 0">0.40</div>
<div class="t" style="left:920.60px;top:845.70px;font-size:14.53px;color:#f0f0f0;transform:scaleX(0.7350);transform-origin:0 0">0.38</div>
<div class="t" style="left:972.00px;top:845.70px;font-size:14.53px;color:#f0f0f0;transform:scaleX(0.7350);transform-origin:0 0">0.25</div>
<div class="t" style="left:1017.80px;top:845.70px;font-size:14.53px;color:#f0f0f0;transform:scaleX(0.7350);transform-origin:0 0">0.34</div>
<div class="t" style="left:1057.40px;top:845.70px;font-size:14.53px;color:#f0f0f0;transform:scaleX(0.7350);transform-origin:0 0">0.27</div>
<div class="t" style="left:1119.80px;top:845.70px;font-size:14.53px;color:#f0f0f0;transform:scaleX(0.7350);transform-origin:0 0">0.26</div>
<div class="t" style="left:1186.20px;top:845.70px;font-size:14.53px;color:#f0f0f0;transform:scaleX(0.7350);transform-origin:0 0">0.51</div>
<div class="t" style="left:1227.60px;top:845.70px;font-size:14.53px;color:#f0f0f0;transform:scaleX(0.7350);transform-origin:0 0">0.22</div>
<div class="t" style="left:1296.40px;top:845.70px;font-size:14.53px;color:#f0f0f0;transform:scaleX(0.7350);transform-origin:0 0">0.46</div>
<div class="t" style="left:1370.20px;top:845.70px;font-size:14.53px;color:#f0f0f0;transform:scaleX(0.7350);transform-origin:0 0">0.29</div>
<div class="t" style="left:1407.40px;top:845.70px;font-size:14.53px;color:#f0f0f0;transform:scaleX(0.7350);transform-origin:0 0">0.38</div>
<div class="t" style="left:1476.00px;top:845.70px;font-size:14.53px;color:#f0f0f0;transform:scaleX(0.7350);transform-origin:0 0">0.47</div>
<div class="t" style="left:1550.00px;top:845.70px;font-size:14.53px;color:#f0f0f0;transform:scaleX(0.7350);transform-origin:0 0">0.19</div>
<div class="t" style="left:1584.70px;top:845.70px;font-size:14.53px;color:#f0f0f0;transform:scaleX(0.7350);transform-origin:0 0">0.31</div>
<div class="t" style="left:1620.00px;top:845.70px;font-size:14.53px;color:#f0f0f0;transform:scaleX(0.7350);transform-origin:0 0">0.54</div>
<div class="t" style="left:1654.80px;top:845.70px;font-size:14.53px;color:#f0f0f0;transform:scaleX(0.7350);transform-origin:0 0">0.45</div>
<div class="t" style="left:1696.00px;top:845.70px;font-size:14.53px;color:#f0f0f0;transform:scaleX(0.7350);transform-origin:0 0">0.37</div>
<div class="t" style="left:1744.50px;top:845.70px;font-size:14.53px;color:#f0f0f0;transform:scaleX(0.7350);transform-origin:0 0">0.21</div>
<div class="t" style="left:1779.50px;top:845.70px;font-size:14.53px;color:#f0f0f0;transform:scaleX(0.7350);transform-origin:0 0">0.64</div>
<div class="t" style="left:1832.70px;top:845.70px;font-size:14.53px;color:#f0f0f0;transform:scaleX(0.7350);transform-origin:0 0">0.30</div>
<div class="t" style="left:1896.50px;top:845.70px;font-size:14.53px;color:#f0f0f0;transform:scaleX(0.7350);transform-origin:0 0">0.15</div>
<div class="a" style="left:541px;top:864.70px;width:1378px;height:25.70px;background:#3c3c3c"></div>
<div class="a" style="left:533px;top:864.70px;width:8px;height:25.70px;background:#1e1e1e;border-top:1px solid #2c2c2c"></div>
<div class="t" style="left:544.20px;top:871.40px;font-size:14.53px;color:#f0f0f0;transform:scaleX(0.7200);transform-origin:0 0">Target y:CIE31</div>
<div class="t" style="left:623.60px;top:871.40px;font-size:14.53px;color:#f0f0f0;transform:scaleX(0.7350);transform-origin:0 0">0.33</div>
<div class="t" style="left:665.00px;top:871.40px;font-size:14.53px;color:#f0f0f0;transform:scaleX(0.7350);transform-origin:0 0">0.33</div>
<div class="t" style="left:707.60px;top:871.40px;font-size:14.53px;color:#f0f0f0;transform:scaleX(0.7350);transform-origin:0 0">0.33</div>
<div class="t" style="left:750.00px;top:871.40px;font-size:14.53px;color:#f0f0f0;transform:scaleX(0.7350);transform-origin:0 0">0.33</div>
<div class="t" style="left:792.50px;top:871.40px;font-size:14.53px;color:#f0f0f0;transform:scaleX(0.7350);transform-origin:0 0">0.33</div>
<div class="t" style="left:835.00px;top:871.40px;font-size:14.53px;color:#f0f0f0;transform:scaleX(0.7350);transform-origin:0 0">0.33</div>
<div class="t" style="left:870.00px;top:871.40px;font-size:14.53px;color:#f0f0f0;transform:scaleX(0.7350);transform-origin:0 0">0.36</div>
<div class="a" style="left:918px;top:864.70px;width:50px;height:25.70px;background:#f2f2f2;border:1px solid #c0c0c0"></div>
<div class="t" style="left:920.60px;top:871.40px;font-size:14.53px;color:#111;transform:scaleX(0.7350);transform-origin:0 0">0.36</div>
<div class="t" style="left:972.00px;top:871.40px;font-size:14.53px;color:#f0f0f0;transform:scaleX(0.7350);transform-origin:0 0">0.27</div>
<div class="t" style="left:1017.80px;top:871.40px;font-size:14.53px;color:#f0f0f0;transform:scaleX(0.7350);transform-origin:0 0">0.43</div>
<div class="t" style="left:1057.40px;top:871.40px;font-size:14.53px;color:#f0f0f0;transform:scaleX(0.7350);transform-origin:0 0">0.25</div>
<div class="t" style="left:1119.80px;top:871.40px;font-size:14.53px;color:#f0f0f0;transform:scaleX(0.7350);transform-origin:0 0">0.36</div>
<div class="t" style="left:1186.20px;top:871.40px;font-size:14.53px;color:#f0f0f0;transform:scaleX(0.7350);transform-origin:0 0">0.41</div>
<div class="t" style="left:1227.60px;top:871.40px;font-size:14.53px;color:#f0f0f0;transform:scaleX(0.7350);transform-origin:0 0">0.19</div>
<div class="t" style="left:1296.40px;top:871.40px;font-size:14.53px;color:#f0f0f0;transform:scaleX(0.7350);transform-origin:0 0">0.31</div>
<div class="t" style="left:1370.20px;top:871.40px;font-size:14.53px;color:#f0f0f0;transform:scaleX(0.7350);transform-origin:0 0">0.22</div>
<div class="t" style="left:1407.40px;top:871.40px;font-size:14.53px;color:#f0f0f0;transform:scaleX(0.7350);transform-origin:0 0">0.49</div>
<div class="t" style="left:1476.00px;top:871.40px;font-size:14.53px;color:#f0f0f0;transform:scaleX(0.7350);transform-origin:0 0">0.44</div>
<div class="t" style="left:1550.00px;top:871.40px;font-size:14.53px;color:#f0f0f0;transform:scaleX(0.7350);transform-origin:0 0">0.14</div>
<div class="t" style="left:1584.70px;top:871.40px;font-size:14.53px;color:#f0f0f0;transform:scaleX(0.7350);transform-origin:0 0">0.49</div>
<div class="t" style="left:1620.00px;top:871.40px;font-size:14.53px;color:#f0f0f0;transform:scaleX(0.7350);transform-origin:0 0">0.32</div>
<div class="t" style="left:1654.80px;top:871.40px;font-size:14.53px;color:#f0f0f0;transform:scaleX(0.7350);transform-origin:0 0">0.47</div>
<div class="t" style="left:1696.00px;top:871.40px;font-size:14.53px;color:#f0f0f0;transform:scaleX(0.7350);transform-origin:0 0">0.25</div>
<div class="t" style="left:1744.50px;top:871.40px;font-size:14.53px;color:#f0f0f0;transform:scaleX(0.7350);transform-origin:0 0">0.27</div>
<div class="t" style="left:1779.50px;top:871.40px;font-size:14.53px;color:#f0f0f0;transform:scaleX(0.7350);transform-origin:0 0">0.33</div>
<div class="t" style="left:1832.70px;top:871.40px;font-size:14.53px;color:#f0f0f0;transform:scaleX(0.7350);transform-origin:0 0">0.60</div>
<div class="t" style="left:1896.50px;top:871.40px;font-size:14.53px;color:#f0f0f0;transform:scaleX(0.7350);transform-origin:0 0">0.06</div>
<div class="a" style="left:541px;top:890.40px;width:1378px;height:25.60px;background:#7b7b7b"></div>
<div class="a" style="left:533px;top:890.40px;width:8px;height:25.60px;background:#1e1e1e;border-top:1px solid #2c2c2c"></div>
<div class="t" style="left:544.20px;top:897.10px;font-size:14.53px;color:#f0f0f0;transform:scaleX(0.7200);transform-origin:0 0">Target Y</div>
<div class="t" style="left:623.60px;top:897.10px;font-size:14.53px;color:#f0f0f0;transform:scaleX(0.7350);transform-origin:0 0">369.50</div>
<div class="t" style="left:665.00px;top:897.10px;font-size:14.53px;color:#f0f0f0;transform:scaleX(0.7350);transform-origin:0 0">292.39</div>
<div class="t" style="left:707.60px;top:897.10px;font-size:14.53px;color:#f0f0f0;transform:scaleX(0.7350);transform-origin:0 0">235.59</div>
<div class="t" style="left:750.00px;top:897.10px;font-size:14.53px;color:#f0f0f0;transform:scaleX(0.7350);transform-origin:0 0">181.43</div>
<div class="t" style="left:792.50px;top:897.10px;font-size:14.53px;color:#f0f0f0;transform:scaleX(0.7350);transform-origin:0 0">126.34</div>
<div class="t" style="left:835.00px;top:897.10px;font-size:14.53px;color:#f0f0f0;transform:scaleX(0.7350);transform-origin:0 0">0.00</div>
<div class="t" style="left:870.00px;top:897.10px;font-size:14.53px;color:#f0f0f0;transform:scaleX(0.7350);transform-origin:0 0">37.22</div>
<div class="t" style="left:920.60px;top:897.10px;font-size:14.53px;color:#f0f0f0;transform:scaleX(0.7350);transform-origin:0 0">128.94</div>
<div class="t" style="left:972.00px;top:897.10px;font-size:14.53px;color:#f0f0f0;transform:scaleX(0.7350);transform-origin:0 0">69.09</div>
<div class="t" style="left:1017.80px;top:897.10px;font-size:14.53px;color:#f0f0f0;transform:scaleX(0.7350);transform-origin:0 0">48.16</div>
<div class="t" style="left:1057.40px;top:897.10px;font-size:14.53px;color:#f0f0f0;transform:scaleX(0.7350);transform-origin:0 0">86.16</div>
<div class="t" style="left:1119.80px;top:897.10px;font-size:14.53px;color:#f0f0f0;transform:scaleX(0.7350);transform-origin:0 0">154.72</div>
<div class="t" style="left:1186.20px;top:897.10px;font-size:14.53px;color:#f0f0f0;transform:scaleX(0.7350);transform-origin:0 0">104.75</div>
<div class="t" style="left:1227.60px;top:897.10px;font-size:14.53px;color:#f0f0f0;transform:scaleX(0.7350);transform-origin:0 0">43.43</div>
<div class="t" style="left:1296.40px;top:897.10px;font-size:14.53px;color:#f0f0f0;transform:scaleX(0.7350);transform-origin:0 0">69.01</div>
<div class="t" style="left:1370.20px;top:897.10px;font-size:14.53px;color:#f0f0f0;transform:scaleX(0.7350);transform-origin:0 0">24.66</div>
<div class="t" style="left:1407.40px;top:897.10px;font-size:14.53px;color:#f0f0f0;transform:scaleX(0.7350);transform-origin:0 0">157.99</div>
<div class="t" style="left:1476.00px;top:897.10px;font-size:14.53px;color:#f0f0f0;transform:scaleX(0.7350);transform-origin:0 0">157.09</div>
<div class="t" style="left:1550.00px;top:897.10px;font-size:14.53px;color:#f0f0f0;transform:scaleX(0.7350);transform-origin:0 0">23.07</div>
<div class="t" style="left:1584.70px;top:897.10px;font-size:14.53px;color:#f0f0f0;transform:scaleX(0.7350);transform-origin:0 0">84.89</div>
<div class="t" style="left:1620.00px;top:897.10px;font-size:14.53px;color:#f0f0f0;transform:scaleX(0.7350);transform-origin:0 0">43.09</div>
<div class="t" style="left:1654.80px;top:897.10px;font-size:14.53px;color:#f0f0f0;transform:scaleX(0.7350);transform-origin:0 0">217.87</div>
<div class="t" style="left:1696.00px;top:897.10px;font-size:14.53px;color:#f0f0f0;transform:scaleX(0.7350);transform-origin:0 0">69.56</div>
<div class="t" style="left:1744.50px;top:897.10px;font-size:14.53px;color:#f0f0f0;transform:scaleX(0.7350);transform-origin:0 0">71.75</div>
<div class="t" style="left:1779.50px;top:897.10px;font-size:14.53px;color:#f0f0f0;transform:scaleX(0.7350);transform-origin:0 0">78.58</div>
<div class="t" style="left:1832.70px;top:897.10px;font-size:14.53px;color:#f0f0f0;transform:scaleX(0.7350);transform-origin:0 0">264.25</div>
<div class="t" style="left:1896.50px;top:897.10px;font-size:14.53px;color:#f0f0f0;transform:scaleX(0.7350);transform-origin:0 0">26.6</div>
<div class="a" style="left:541px;top:916.00px;width:1378px;height:25.30px;background:#3c3c3c"></div>
<div class="a" style="left:533px;top:916.00px;width:8px;height:25.30px;background:#1e1e1e;border-top:1px solid #2c2c2c"></div>
<div class="t" style="left:544.20px;top:922.70px;font-size:14.53px;color:#f0f0f0;transform:scaleX(0.7200);transform-origin:0 0">&Delta;E 2000</div>
<div class="t" style="left:623.60px;top:922.70px;font-size:14.53px;color:#f0f0f0;transform:scaleX(0.7350);transform-origin:0 0">3.76</div>
<div class="t" style="left:665.00px;top:922.70px;font-size:14.53px;color:#f0f0f0;transform:scaleX(0.7350);transform-origin:0 0">3.65</div>
<div class="t" style="left:707.60px;top:922.70px;font-size:14.53px;color:#f0f0f0;transform:scaleX(0.7350);transform-origin:0 0">3.70</div>
<div class="t" style="left:750.00px;top:922.70px;font-size:14.53px;color:#f0f0f0;transform:scaleX(0.7350);transform-origin:0 0">3.67</div>
<div class="t" style="left:792.50px;top:922.70px;font-size:14.53px;color:#f0f0f0;transform:scaleX(0.7350);transform-origin:0 0">3.58</div>
<div class="t" style="left:835.00px;top:922.70px;font-size:14.53px;color:#f0f0f0;transform:scaleX(0.7350);transform-origin:0 0">0.74</div>
<div class="t" style="left:870.00px;top:922.70px;font-size:14.53px;color:#f0f0f0;transform:scaleX(0.7350);transform-origin:0 0">1.64</div>
<div class="t" style="left:920.60px;top:922.70px;font-size:14.53px;color:#f0f0f0;transform:scaleX(0.7350);transform-origin:0 0">0.94</div>
<div class="t" style="left:972.00px;top:922.70px;font-size:14.53px;color:#f0f0f0;transform:scaleX(0.7350);transform-origin:0 0">4.06</div>
<div class="t" style="left:1017.80px;top:922.70px;font-size:14.53px;color:#f0f0f0;transform:scaleX(0.7350);transform-origin:0 0">1.75</div>
<div class="t" style="left:1057.40px;top:922.70px;font-size:14.53px;color:#f0f0f0;transform:scaleX(0.7350);transform-origin:0 0">2.62</div>
<div class="t" style="left:1119.80px;top:922.70px;font-size:14.53px;color:#f0f0f0;transform:scaleX(0.7350);transform-origin:0 0">1.97</div>
<div class="t" style="left:1186.20px;top:922.70px;font-size:14.53px;color:#f0f0f0;transform:scaleX(0.7350);transform-origin:0 0">0.98</div>
<div class="t" style="left:1227.60px;top:922.70px;font-size:14.53px;color:#f0f0f0;transform:scaleX(0.7350);transform-origin:0 0">2.84</div>
<div class="t" style="left:1296.40px;top:922.70px;font-size:14.53px;color:#f0f0f0;transform:scaleX(0.7350);transform-origin:0 0">1.15</div>
<div class="t" style="left:1370.20px;top:922.70px;font-size:14.53px;color:#f0f0f0;transform:scaleX(0.7350);transform-origin:0 0">4.41</div>
<div class="t" style="left:1407.40px;top:922.70px;font-size:14.53px;color:#f0f0f0;transform:scaleX(0.7350);transform-origin:0 0">1.04</div>
<div class="t" style="left:1476.00px;top:922.70px;font-size:14.53px;color:#f0f0f0;transform:scaleX(0.7350);transform-origin:0 0">0.79</div>
<div class="t" style="left:1550.00px;top:922.70px;font-size:14.53px;color:#f0f0f0;transform:scaleX(0.7350);transform-origin:0 0">2.30</div>
<div class="t" style="left:1584.70px;top:922.70px;font-size:14.53px;color:#f0f0f0;transform:scaleX(0.7350);transform-origin:0 0">1.33</div>
<div class="t" style="left:1620.00px;top:922.70px;font-size:14.53px;color:#f0f0f0;transform:scaleX(0.7350);transform-origin:0 0">1.64</div>
<div class="t" style="left:1654.80px;top:922.70px;font-size:14.53px;color:#f0f0f0;transform:scaleX(0.7350);transform-origin:0 0">0.61</div>
<div class="t" style="left:1696.00px;top:922.70px;font-size:14.53px;color:#f0f0f0;transform:scaleX(0.7350);transform-origin:0 0">0.42</div>
<div class="t" style="left:1744.50px;top:922.70px;font-size:14.53px;color:#f0f0f0;transform:scaleX(0.7350);transform-origin:0 0">2.49</div>
<div class="t" style="left:1779.50px;top:922.70px;font-size:14.53px;color:#f0f0f0;transform:scaleX(0.7350);transform-origin:0 0">1.06</div>
<div class="t" style="left:1832.70px;top:922.70px;font-size:14.53px;color:#f0f0f0;transform:scaleX(0.7350);transform-origin:0 0">1.07</div>
<div class="t" style="left:1896.50px;top:922.70px;font-size:14.53px;color:#f0f0f0;transform:scaleX(0.7350);transform-origin:0 0">3.17</div>
<div class="a" style="left:541px;top:941.30px;width:1378px;height:25.30px;background:#7b7b7b"></div>
<div class="a" style="left:533px;top:941.30px;width:8px;height:25.30px;background:#1e1e1e;border-top:1px solid #2c2c2c"></div>
<div class="t" style="left:544.20px;top:948.00px;font-size:14.53px;color:#f0f0f0;transform:scaleX(0.7200);transform-origin:0 0">dEITP</div>
<div class="t" style="left:623.60px;top:948.00px;font-size:14.53px;color:#f0f0f0;transform:scaleX(0.7350);transform-origin:0 0">4.00</div>
<div class="t" style="left:665.00px;top:948.00px;font-size:14.53px;color:#f0f0f0;transform:scaleX(0.7350);transform-origin:0 0">3.75</div>
<div class="t" style="left:707.60px;top:948.00px;font-size:14.53px;color:#f0f0f0;transform:scaleX(0.7350);transform-origin:0 0">3.71</div>
<div class="t" style="left:750.00px;top:948.00px;font-size:14.53px;color:#f0f0f0;transform:scaleX(0.7350);transform-origin:0 0">3.47</div>
<div class="t" style="left:792.50px;top:948.00px;font-size:14.53px;color:#f0f0f0;transform:scaleX(0.7350);transform-origin:0 0">3.64</div>
<div class="t" style="left:835.00px;top:948.00px;font-size:14.53px;color:#f0f0f0;transform:scaleX(0.7350);transform-origin:0 0">68.14</div>
<div class="t" style="left:870.00px;top:948.00px;font-size:14.53px;color:#f0f0f0;transform:scaleX(0.7350);transform-origin:0 0">6.15</div>
<div class="t" style="left:920.60px;top:948.00px;font-size:14.53px;color:#f0f0f0;transform:scaleX(0.7350);transform-origin:0 0">1.21</div>
<div class="t" style="left:972.00px;top:948.00px;font-size:14.53px;color:#f0f0f0;transform:scaleX(0.7350);transform-origin:0 0">7.17</div>
<div class="t" style="left:1017.80px;top:948.00px;font-size:14.53px;color:#f0f0f0;transform:scaleX(0.7350);transform-origin:0 0">6.29</div>
<div class="t" style="left:1057.40px;top:948.00px;font-size:14.53px;color:#f0f0f0;transform:scaleX(0.7350);transform-origin:0 0">5.45</div>
<div class="t" style="left:1119.80px;top:948.00px;font-size:14.53px;color:#f0f0f0;transform:scaleX(0.7350);transform-origin:0 0">5.58</div>
<div class="t" style="left:1186.20px;top:948.00px;font-size:14.53px;color:#f0f0f0;transform:scaleX(0.7350);transform-origin:0 0">5.73</div>
<div class="t" style="left:1227.60px;top:948.00px;font-size:14.53px;color:#f0f0f0;transform:scaleX(0.7350);transform-origin:0 0">10.06</div>
<div class="t" style="left:1296.40px;top:948.00px;font-size:14.53px;color:#f0f0f0;transform:scaleX(0.7350);transform-origin:0 0">6.31</div>
<div class="t" style="left:1370.20px;top:948.00px;font-size:14.53px;color:#f0f0f0;transform:scaleX(0.7350);transform-origin:0 0">21.11</div>
<div class="t" style="left:1407.40px;top:948.00px;font-size:14.53px;color:#f0f0f0;transform:scaleX(0.7350);transform-origin:0 0">3.95</div>
<div class="t" style="left:1476.00px;top:948.00px;font-size:14.53px;color:#f0f0f0;transform:scaleX(0.7350);transform-origin:0 0">4.26</div>
<div class="t" style="left:1550.00px;top:948.00px;font-size:14.53px;color:#f0f0f0;transform:scaleX(0.7350);transform-origin:0 0">13.72</div>
<div class="t" style="left:1584.70px;top:948.00px;font-size:14.53px;color:#f0f0f0;transform:scaleX(0.7350);transform-origin:0 0">5.45</div>
<div class="t" style="left:1620.00px;top:948.00px;font-size:14.53px;color:#f0f0f0;transform:scaleX(0.7350);transform-origin:0 0">10.05</div>
<div class="t" style="left:1654.80px;top:948.00px;font-size:14.53px;color:#f0f0f0;transform:scaleX(0.7350);transform-origin:0 0">2.80</div>
<div class="t" style="left:1696.00px;top:948.00px;font-size:14.53px;color:#f0f0f0;transform:scaleX(0.7350);transform-origin:0 0">1.96</div>
<div class="t" style="left:1744.50px;top:948.00px;font-size:14.53px;color:#f0f0f0;transform:scaleX(0.7350);transform-origin:0 0">5.94</div>
<div class="t" style="left:1779.50px;top:948.00px;font-size:14.53px;color:#f0f0f0;transform:scaleX(0.7350);transform-origin:0 0">5.31</div>
<div class="t" style="left:1832.70px;top:948.00px;font-size:14.53px;color:#f0f0f0;transform:scaleX(0.7350);transform-origin:0 0">3.69</div>
<div class="t" style="left:1896.50px;top:948.00px;font-size:14.53px;color:#f0f0f0;transform:scaleX(0.7350);transform-origin:0 0">17.6</div>
<div class="a" style="left:541px;top:967px;width:1378px;height:16px;background:#3a3a3a"></div>
<div class="a" style="left:559px;top:969px;width:810px;height:12px;border-radius:6px;background:#2c2c2c"></div>
<div class="a" style="left:542px;top:968px;width:14px;height:14px;background:#5a5a5a;border-radius:2px"></div>
<svg class="a" style="left:546px;top:971px" width="6" height="8"><path d="M5 0V8L0 4z" fill="#222"/></svg>
<div class="a" style="left:1904px;top:968px;width:14px;height:14px;background:#5a5a5a;border-radius:2px"></div>
<svg class="a" style="left:1909px;top:971px" width="6" height="8"><path d="M0 0V8L5 4z" fill="#222"/></svg>
</div>
<div class="a" style="left:200px;top:985px;width:1440px;height:65px;background:#3a3a3a"></div>
<div class="a" style="left:201px;top:988px;width:50px;height:48px;border-radius:4px 4px 0 0;background:linear-gradient(#9a9a9a,#7e7e7e 50%,#6c6c6c);border-left:1px solid #5a5a5a;border-right:1px solid #5a5a5a"></div>
<div class="a" style="left:206px;top:993px;width:40px;height:25px;border-radius:4px;background:#ffffff;box-shadow:inset 1px 1px 1px rgba(0,0,0,.35)"></div>
<div class="t" style="left:191px;top:1022px;width:70px;text-align:center;font-size:12px;color:#222;-webkit-text-stroke:0.25px #222;transform:scaleX(0.9)">White</div>
<div class="a" style="left:253px;top:988px;width:50px;height:48px;border-radius:4px 4px 0 0;background:linear-gradient(#9a9a9a,#7e7e7e 50%,#6c6c6c);border-left:1px solid #5a5a5a;border-right:1px solid #5a5a5a"></div>
<div class="a" style="left:258px;top:993px;width:40px;height:25px;border-radius:4px;background:#e6e6e6;box-shadow:inset 1px 1px 1px rgba(0,0,0,.35)"></div>
<div class="t" style="left:243px;top:1022px;width:70px;text-align:center;font-size:12px;color:#222;-webkit-text-stroke:0.25px #222;transform:scaleX(0.9)">Gray 80</div>
<div class="a" style="left:305px;top:988px;width:50px;height:48px;border-radius:4px 4px 0 0;background:linear-gradient(#9a9a9a,#7e7e7e 50%,#6c6c6c);border-left:1px solid #5a5a5a;border-right:1px solid #5a5a5a"></div>
<div class="a" style="left:310px;top:993px;width:40px;height:25px;border-radius:4px;background:#d2d2d2;box-shadow:inset 1px 1px 1px rgba(0,0,0,.35)"></div>
<div class="t" style="left:295px;top:1022px;width:70px;text-align:center;font-size:12px;color:#222;-webkit-text-stroke:0.25px #222;transform:scaleX(0.9)">Gray 65</div>
<div class="a" style="left:357px;top:988px;width:50px;height:48px;border-radius:4px 4px 0 0;background:linear-gradient(#9a9a9a,#7e7e7e 50%,#6c6c6c);border-left:1px solid #5a5a5a;border-right:1px solid #5a5a5a"></div>
<div class="a" style="left:362px;top:993px;width:40px;height:25px;border-radius:4px;background:#bababa;box-shadow:inset 1px 1px 1px rgba(0,0,0,.35)"></div>
<div class="t" style="left:347px;top:1022px;width:70px;text-align:center;font-size:12px;color:#222;-webkit-text-stroke:0.25px #222;transform:scaleX(0.9)">Gray 50</div>
<div class="a" style="left:409px;top:988px;width:50px;height:48px;border-radius:4px 4px 0 0;background:linear-gradient(#9a9a9a,#7e7e7e 50%,#6c6c6c);border-left:1px solid #5a5a5a;border-right:1px solid #5a5a5a"></div>
<div class="a" style="left:414px;top:993px;width:40px;height:25px;border-radius:4px;background:#a0a0a0;box-shadow:inset 1px 1px 1px rgba(0,0,0,.35)"></div>
<div class="t" style="left:399px;top:1022px;width:70px;text-align:center;font-size:12px;color:#222;-webkit-text-stroke:0.25px #222;transform:scaleX(0.9)">Gray 35</div>
<div class="a" style="left:461px;top:988px;width:50px;height:48px;border-radius:4px 4px 0 0;background:linear-gradient(#9a9a9a,#7e7e7e 50%,#6c6c6c);border-left:1px solid #5a5a5a;border-right:1px solid #5a5a5a"></div>
<div class="a" style="left:466px;top:993px;width:40px;height:25px;border-radius:4px;background:#000000;box-shadow:inset 1px 1px 1px rgba(0,0,0,.35)"></div>
<div class="t" style="left:451px;top:1022px;width:70px;text-align:center;font-size:12px;color:#222;-webkit-text-stroke:0.25px #222;transform:scaleX(0.9)">Black</div>
<div class="a" style="left:513px;top:988px;width:50px;height:48px;border-radius:4px 4px 0 0;background:linear-gradient(#9a9a9a,#7e7e7e 50%,#6c6c6c);border-left:1px solid #5a5a5a;border-right:1px solid #5a5a5a"></div>
<div class="a" style="left:518px;top:993px;width:40px;height:25px;border-radius:4px;background:#735444;box-shadow:inset 1px 1px 1px rgba(0,0,0,.35)"></div>
<div class="t" style="left:503px;top:1022px;width:70px;text-align:center;font-size:12px;color:#222;-webkit-text-stroke:0.25px #222;transform:scaleX(0.9)">Dark Skin</div>
<div class="a" style="left:565px;top:988px;width:50px;height:48px;border-radius:4px 4px 0 0;background:linear-gradient(#9a9a9a,#7e7e7e 50%,#6c6c6c);border-left:1px solid #5a5a5a;border-right:1px solid #5a5a5a"></div>
<div class="a" style="left:570px;top:993px;width:40px;height:25px;border-radius:4px;background:#c49a86;box-shadow:inset 1px 1px 1px rgba(0,0,0,.35)"></div>
<div class="t" style="left:555px;top:1022px;width:70px;text-align:center;font-size:12px;color:#222;-webkit-text-stroke:0.25px #222;transform:scaleX(0.9)">Light Skin</div>
<div class="a" style="left:617px;top:988px;width:50px;height:48px;border-radius:4px 4px 0 0;background:linear-gradient(#9a9a9a,#7e7e7e 50%,#6c6c6c);border-left:1px solid #5a5a5a;border-right:1px solid #5a5a5a"></div>
<div class="a" style="left:622px;top:993px;width:40px;height:25px;border-radius:4px;background:#5e7ca6;box-shadow:inset 1px 1px 1px rgba(0,0,0,.35)"></div>
<div class="t" style="left:607px;top:1022px;width:70px;text-align:center;font-size:12px;color:#222;-webkit-text-stroke:0.25px #222;transform:scaleX(0.9)">Blue Sky</div>
<div class="a" style="left:669px;top:988px;width:50px;height:48px;border-radius:4px 4px 0 0;background:linear-gradient(#9a9a9a,#7e7e7e 50%,#6c6c6c);border-left:1px solid #5a5a5a;border-right:1px solid #5a5a5a"></div>
<div class="a" style="left:674px;top:993px;width:40px;height:25px;border-radius:4px;background:#5a6e42;box-shadow:inset 1px 1px 1px rgba(0,0,0,.35)"></div>
<div class="t" style="left:659px;top:1022px;width:70px;text-align:center;font-size:12px;color:#222;-webkit-text-stroke:0.25px #222;transform:scaleX(0.9)">Foliage</div>
<div class="a" style="left:721px;top:988px;width:50px;height:48px;border-radius:4px 4px 0 0;background:linear-gradient(#9a9a9a,#7e7e7e 50%,#6c6c6c);border-left:1px solid #5a5a5a;border-right:1px solid #5a5a5a"></div>
<div class="a" style="left:726px;top:993px;width:40px;height:12px;border-radius:4px;background:#8282b4;box-shadow:inset 1px 1px 1px rgba(0,0,0,.35)"></div>
<div class="t" style="left:711px;top:1010px;width:70px;text-align:center;font-size:12px;line-height:12px;color:#222;-webkit-text-stroke:0.25px #222;transform:scaleX(0.9)"><span style="display:inline-block;text-align:left">Blue<br>Flower</span></div>
<div class="a" style="left:773px;top:988px;width:50px;height:48px;border-radius:4px 4px 0 0;background:linear-gradient(#9a9a9a,#7e7e7e 50%,#6c6c6c);border-left:1px solid #5a5a5a;border-right:1px solid #5a5a5a"></div>
<div class="a" style="left:778px;top:993px;width:40px;height:12px;border-radius:4px;background:#64c0aa;box-shadow:inset 1px 1px 1px rgba(0,0,0,.35)"></div>
<div class="t" style="left:763px;top:1010px;width:70px;text-align:center;font-size:12px;line-height:12px;color:#222;-webkit-text-stroke:0.25px #222;transform:scaleX(0.9)"><span style="display:inline-block;text-align:left">Bluish<br>Green</span></div>
<div class="a" style="left:825px;top:988px;width:50px;height:48px;border-radius:4px 4px 0 0;background:linear-gradient(#9a9a9a,#7e7e7e 50%,#6c6c6c);border-left:1px solid #5a5a5a;border-right:1px solid #5a5a5a"></div>
<div class="a" style="left:830px;top:993px;width:40px;height:25px;border-radius:4px;background:#e07a22;box-shadow:inset 1px 1px 1px rgba(0,0,0,.35)"></div>
<div class="t" style="left:815px;top:1022px;width:70px;text-align:center;font-size:12px;color:#222;-webkit-text-stroke:0.25px #222;transform:scaleX(0.9)">Orange</div>
<div class="a" style="left:877px;top:988px;width:50px;height:48px;border-radius:4px 4px 0 0;background:linear-gradient(#9a9a9a,#7e7e7e 50%,#6c6c6c);border-left:1px solid #5a5a5a;border-right:1px solid #5a5a5a"></div>
<div class="a" style="left:882px;top:993px;width:40px;height:12px;border-radius:4px;background:#4a5aa8;box-shadow:inset 1px 1px 1px rgba(0,0,0,.35)"></div>
<div class="t" style="left:867px;top:1010px;width:70px;text-align:center;font-size:12px;line-height:12px;color:#222;-webkit-text-stroke:0.25px #222;transform:scaleX(0.9)"><span style="display:inline-block;text-align:left">Purplish<br>Blue</span></div>
<div class="a" style="left:929px;top:988px;width:50px;height:48px;border-radius:4px 4px 0 0;background:linear-gradient(#9a9a9a,#7e7e7e 50%,#6c6c6c);border-left:1px solid #5a5a5a;border-right:1px solid #5a5a5a"></div>
<div class="a" style="left:934px;top:993px;width:40px;height:12px;border-radius:4px;background:#c85464;box-shadow:inset 1px 1px 1px rgba(0,0,0,.35)"></div>
<div class="t" style="left:919px;top:1010px;width:70px;text-align:center;font-size:12px;line-height:12px;color:#222;-webkit-text-stroke:0.25px #222;transform:scaleX(0.9)"><span style="display:inline-block;text-align:left">Moderate<br>Red</span></div>
<div class="a" style="left:981px;top:988px;width:50px;height:48px;border-radius:4px 4px 0 0;background:linear-gradient(#9a9a9a,#7e7e7e 50%,#6c6c6c);border-left:1px solid #5a5a5a;border-right:1px solid #5a5a5a"></div>
<div class="a" style="left:986px;top:993px;width:40px;height:25px;border-radius:4px;background:#5e3c6e;box-shadow:inset 1px 1px 1px rgba(0,0,0,.35)"></div>
<div class="t" style="left:971px;top:1022px;width:70px;text-align:center;font-size:12px;color:#222;-webkit-text-stroke:0.25px #222;transform:scaleX(0.9)">Purple</div>
<div class="a" style="left:1033px;top:988px;width:50px;height:48px;border-radius:4px 4px 0 0;background:linear-gradient(#9a9a9a,#7e7e7e 50%,#6c6c6c);border-left:1px solid #5a5a5a;border-right:1px solid #5a5a5a"></div>
<div class="a" style="left:1038px;top:993px;width:40px;height:12px;border-radius:4px;background:#a0bc40;box-shadow:inset 1px 1px 1px rgba(0,0,0,.35)"></div>
<div class="t" style="left:1023px;top:1010px;width:70px;text-align:center;font-size:12px;line-height:12px;color:#222;-webkit-text-stroke:0.25px #222;transform:scaleX(0.9)"><span style="display:inline-block;text-align:left">Yellow<br>Green</span></div>
<div class="a" style="left:1085px;top:988px;width:50px;height:48px;border-radius:4px 4px 0 0;background:linear-gradient(#9a9a9a,#7e7e7e 50%,#6c6c6c);border-left:1px solid #5a5a5a;border-right:1px solid #5a5a5a"></div>
<div class="a" style="left:1090px;top:993px;width:40px;height:12px;border-radius:4px;background:#e6a02e;box-shadow:inset 1px 1px 1px rgba(0,0,0,.35)"></div>
<div class="t" style="left:1075px;top:1010px;width:70px;text-align:center;font-size:12px;line-height:12px;color:#222;-webkit-text-stroke:0.25px #222;transform:scaleX(0.9)"><span style="display:inline-block;text-align:left">Orange<br>Yellow</span></div>
<div class="a" style="left:1137px;top:988px;width:50px;height:48px;border-radius:4px 4px 0 0;background:linear-gradient(#9a9a9a,#7e7e7e 50%,#6c6c6c);border-left:1px solid #5a5a5a;border-right:1px solid #5a5a5a"></div>
<div class="a" style="left:1142px;top:993px;width:40px;height:25px;border-radius:4px;background:#343c96;box-shadow:inset 1px 1px 1px rgba(0,0,0,.35)"></div>
<div class="t" style="left:1127px;top:1022px;width:70px;text-align:center;font-size:12px;color:#222;-webkit-text-stroke:0.25px #222;transform:scaleX(0.9)">Blue</div>
<div class="a" style="left:1189px;top:988px;width:50px;height:48px;border-radius:4px 4px 0 0;background:linear-gradient(#9a9a9a,#7e7e7e 50%,#6c6c6c);border-left:1px solid #5a5a5a;border-right:1px solid #5a5a5a"></div>
<div class="a" style="left:1194px;top:993px;width:40px;height:25px;border-radius:4px;background:#469a48;box-shadow:inset 1px 1px 1px rgba(0,0,0,.35)"></div>
<div class="t" style="left:1179px;top:1022px;width:70px;text-align:center;font-size:12px;color:#222;-webkit-text-stroke:0.25px #222;transform:scaleX(0.9)">Green</div>
<div class="a" style="left:1241px;top:988px;width:50px;height:48px;border-radius:4px 4px 0 0;background:linear-gradient(#9a9a9a,#7e7e7e 50%,#6c6c6c);border-left:1px solid #5a5a5a;border-right:1px solid #5a5a5a"></div>
<div class="a" style="left:1246px;top:993px;width:40px;height:25px;border-radius:4px;background:#b03038;box-shadow:inset 1px 1px 1px rgba(0,0,0,.35)"></div>
<div class="t" style="left:1231px;top:1022px;width:70px;text-align:center;font-size:12px;color:#222;-webkit-text-stroke:0.25px #222;transform:scaleX(0.9)">Red</div>
<div class="a" style="left:1293px;top:988px;width:50px;height:48px;border-radius:4px 4px 0 0;background:linear-gradient(#9a9a9a,#7e7e7e 50%,#6c6c6c);border-left:1px solid #5a5a5a;border-right:1px solid #5a5a5a"></div>
<div class="a" style="left:1298px;top:993px;width:40px;height:25px;border-radius:4px;background:#eac81e;box-shadow:inset 1px 1px 1px rgba(0,0,0,.35)"></div>
<div class="t" style="left:1283px;top:1022px;width:70px;text-align:center;font-size:12px;color:#222;-webkit-text-stroke:0.25px #222;transform:scaleX(0.9)">Yellow</div>
<div class="a" style="left:1345px;top:988px;width:50px;height:48px;border-radius:4px 4px 0 0;background:linear-gradient(#9a9a9a,#7e7e7e 50%,#6c6c6c);border-left:1px solid #5a5a5a;border-right:1px solid #5a5a5a"></div>
<div class="a" style="left:1350px;top:993px;width:40px;height:25px;border-radius:4px;background:#bc5496;box-shadow:inset 1px 1px 1px rgba(0,0,0,.35)"></div>
<div class="t" style="left:1335px;top:1022px;width:70px;text-align:center;font-size:12px;color:#222;-webkit-text-stroke:0.25px #222;transform:scaleX(0.9)">Magenta</div>
<div class="a" style="left:1397px;top:988px;width:50px;height:48px;border-radius:4px 4px 0 0;background:linear-gradient(#9a9a9a,#7e7e7e 50%,#6c6c6c);border-left:1px solid #5a5a5a;border-right:1px solid #5a5a5a"></div>
<div class="a" style="left:1402px;top:993px;width:40px;height:25px;border-radius:4px;background:#0088a6;box-shadow:inset 1px 1px 1px rgba(0,0,0,.35)"></div>
<div class="t" style="left:1387px;top:1022px;width:70px;text-align:center;font-size:12px;color:#222;-webkit-text-stroke:0.25px #222;transform:scaleX(0.9)">Cyan</div>
<div class="a" style="left:1449px;top:988px;width:50px;height:48px;border-radius:4px 4px 0 0;background:linear-gradient(#9a9a9a,#7e7e7e 50%,#6c6c6c);border-left:1px solid #5a5a5a;border-right:1px solid #5a5a5a"></div>
<div class="a" style="left:1454px;top:993px;width:40px;height:25px;border-radius:4px;background:#ff0000;box-shadow:inset 1px 1px 1px rgba(0,0,0,.35)"></div>
<div class="t" style="left:1439px;top:1022px;width:70px;text-align:center;font-size:12px;color:#222;-webkit-text-stroke:0.25px #222;transform:scaleX(0.9)">100% Red</div>
<div class="a" style="left:1501px;top:988px;width:50px;height:48px;border-radius:4px 4px 0 0;background:linear-gradient(#9a9a9a,#7e7e7e 50%,#6c6c6c);border-left:1px solid #5a5a5a;border-right:1px solid #5a5a5a"></div>
<div class="a" style="left:1506px;top:993px;width:40px;height:12px;border-radius:4px;background:#00ff00;box-shadow:inset 1px 1px 1px rgba(0,0,0,.35)"></div>
<div class="t" style="left:1491px;top:1010px;width:70px;text-align:center;font-size:12px;line-height:12px;color:#222;-webkit-text-stroke:0.25px #222;transform:scaleX(0.9)"><span style="display:inline-block;text-align:left">100%<br>Green</span></div>
<div class="a" style="left:1553px;top:988px;width:50px;height:48px;border-radius:4px 4px 0 0;background:linear-gradient(#9a9a9a,#7e7e7e 50%,#6c6c6c);border-left:1px solid #5a5a5a;border-right:1px solid #5a5a5a"></div>
<div class="a" style="left:1558px;top:993px;width:40px;height:12px;border-radius:4px;background:#0000ff;box-shadow:inset 1px 1px 1px rgba(0,0,0,.35)"></div>
<div class="t" style="left:1543px;top:1010px;width:70px;text-align:center;font-size:12px;line-height:12px;color:#222;-webkit-text-stroke:0.25px #222;transform:scaleX(0.9)"><span style="display:inline-block;text-align:left">100%<br>Blue</span></div>
<div class="a" style="left:200px;top:1037px;width:1395px;height:13px;background:#5c5c5c"></div>
<div class="a" style="left:214px;top:1038px;width:790px;height:11px;border-radius:5px;background:#444"></div>
<div class="a" style="left:202px;top:1038px;width:11px;height:11px;background:#8a8a8a;border-radius:2px"></div>
<svg class="a" style="left:205px;top:1039.5px" width="6" height="8"><path d="M5 0V8L0 4z" fill="#444"/></svg>
<div class="a" style="left:1584px;top:1038px;width:11px;height:11px;background:#8a8a8a;border-radius:2px"></div>
<svg class="a" style="left:1587px;top:1039.5px" width="6" height="8"><path d="M0 0V8L5 4z" fill="#444"/></svg>
<div class="a" style="left:1597px;top:1007px;width:49px;height:43px;background:linear-gradient(#8e8e8e,#6e6e6e);border-radius:4px 4px 0 0"></div>
<div class="a" style="left:1605px;top:1012px;width:32px;height:32px;border-radius:6px;border:3px solid #2e2e2e;background:linear-gradient(#bdbdbd,#9a9a9a)"></div>
<div class="a" style="left:1614px;top:1020.5px;width:14px;height:14px;background:#000"></div>
<div class="a" style="left:1646px;top:986px;width:274px;height:32px;background:linear-gradient(#7a7a7a,#5e5e5e)"></div>
<div class="a" style="left:1827px;top:986px;width:93px;height:32px;background:linear-gradient(#4a4a4a,#3a3a3a)"></div>
<div class="a" style="left:1646px;top:986px;width:1px;height:32px;background:#4a4a4a"></div>
<div class="a" style="left:1656px;top:990px;width:24px;height:24px;border-radius:50%;background:radial-gradient(circle,rgba(255,255,255,.12),rgba(255,255,255,0) 70%)"></div>
<div class="a" style="left:1691px;top:986px;width:1px;height:32px;background:#4a4a4a"></div>
<div class="a" style="left:1701px;top:990px;width:24px;height:24px;border-radius:50%;background:radial-gradient(circle,rgba(255,255,255,.12),rgba(255,255,255,0) 70%)"></div>
<div class="a" style="left:1736px;top:986px;width:1px;height:32px;background:#4a4a4a"></div>
<div class="a" style="left:1746px;top:990px;width:24px;height:24px;border-radius:50%;background:radial-gradient(circle,rgba(255,255,255,.12),rgba(255,255,255,0) 70%)"></div>
<div class="a" style="left:1782px;top:986px;width:1px;height:32px;background:#4a4a4a"></div>
<div class="a" style="left:1792px;top:990px;width:24px;height:24px;border-radius:50%;background:radial-gradient(circle,rgba(255,255,255,.12),rgba(255,255,255,0) 70%)"></div>
<div class="a" style="left:1827px;top:986px;width:1px;height:32px;background:#4a4a4a"></div>
<div class="a" style="left:1837px;top:990px;width:24px;height:24px;border-radius:50%;background:radial-gradient(circle,rgba(255,255,255,.12),rgba(255,255,255,0) 70%)"></div>
<div class="a" style="left:1872px;top:986px;width:1px;height:32px;background:#4a4a4a"></div>
<div class="a" style="left:1882px;top:990px;width:24px;height:24px;border-radius:50%;background:radial-gradient(circle,rgba(255,255,255,.12),rgba(255,255,255,0) 70%)"></div>
<div class="a" style="left:1646px;top:1019px;width:274px;height:31px;background:linear-gradient(#b0b0b0,#969696 50%,#828282)"></div>
<div class="a" style="left:1782px;top:1019px;width:1px;height:31px;background:#555"></div>
<div class="a" style="left:1667px;top:1023.5px;width:21px;height:21px;border-radius:50%;background:radial-gradient(circle at 50% 40%,#c0c0c0,#8a8a8a)"></div>
<div class="t" style="left:1672.35px;top:1026.31px;font-size:16.76px;color:#333;transform:scaleX(1.0000);transform-origin:0 0">&laquo;</div>
<div class="t" style="left:1703.00px;top:1023.80px;font-size:20.67px;color:#333;transform:scaleX(1.1089);transform-origin:0 0;-webkit-text-stroke:0.5px #333">Back</div>
<div class="t" style="left:1810.00px;top:1023.80px;font-size:20.67px;color:#333;transform:scaleX(1.2124);transform-origin:0 0;-webkit-text-stroke:0.5px #333">Next</div>
<div class="a" style="left:1880px;top:1023.5px;width:21px;height:21px;border-radius:50%;background:radial-gradient(circle at 50% 40%,#c0c0c0,#8a8a8a)"></div>
<div class="t" style="left:1885.55px;top:1026.31px;font-size:16.76px;color:#333;transform:scaleX(1.0000);transform-origin:0 0">&raquo;</div>
<div class="a" style="left:1918px;top:985px;width:2px;height:65px;background:#222"></div>
<div class="a" style="left:1428px;top:58px;width:143px;height:30px;background:linear-gradient(#6a6a6a,#5a5a5a 50%,#4e4e4e);border-radius:4px 4px 0 0;box-shadow:inset 0 1px 0 #7a7a7a"></div>
<div class="a" style="left:1428px;top:58px;width:5px;height:30px;background:#22dd22;border-radius:3px 0 0 0"></div>
<div class="t" style="left:1436.50px;top:61.51px;font-size:10.61px;color:#eee;transform:scaleX(0.9913);transform-origin:0 0;">X-Rite i1Pro 2</div>
<div class="t" style="left:1436.50px;top:75.01px;font-size:10.61px;color:#eee;transform:scaleX(1.0369);transform-origin:0 0;">Direct View</div>
<div class="a" style="left:1506.5px;top:63.5px;width:19px;height:19px;border-radius:50%;background:linear-gradient(#474747,#6a6a6a)"></div>
<svg class="a" style="left:1511px;top:71px" width="10" height="6"><path d="M0 0h10L5 5z" fill="#fff"/></svg>
<div class="a" style="left:1534px;top:61px;width:1px;height:27px;background:#3e3e3e"></div>
<div class="a" style="left:1542px;top:60px;width:26px;height:26px;border-radius:50%;background:#0000ee;border:1px solid #ddd"></div>
<div class="t" style="left:1546.85px;top:68.72px;font-size:9.78px;color:#fff;transform:scaleX(1.0000);transform-origin:0 0">233</div>
<div class="a" style="left:1577px;top:58px;width:130px;height:30px;background:linear-gradient(#6a6a6a,#5a5a5a 50%,#4e4e4e);border-radius:4px 4px 0 0;box-shadow:inset 0 1px 0 #7a7a7a"></div>
<div class="a" style="left:1577px;top:58px;width:5px;height:30px;background:#eeee10;border-radius:3px 0 0 0"></div>
<div class="t" style="left:1585.00px;top:61.51px;font-size:10.61px;color:#eee;transform:scaleX(0.9964);transform-origin:0 0;">Source</div>
<div class="a" style="left:1680.5px;top:63.5px;width:19px;height:19px;border-radius:50%;background:linear-gradient(#474747,#6a6a6a)"></div>
<svg class="a" style="left:1685px;top:71px" width="10" height="6"><path d="M0 0h10L5 5z" fill="#fff"/></svg>
<div class="a" style="left:1713px;top:58px;width:142px;height:30px;background:linear-gradient(#6a6a6a,#5a5a5a 50%,#4e4e4e);border-radius:4px 4px 0 0;box-shadow:inset 0 1px 0 #7a7a7a"></div>
<div class="a" style="left:1713px;top:58px;width:5px;height:30px;background:#eeee10;border-radius:3px 0 0 0"></div>
<div class="t" style="left:1721.50px;top:61.51px;font-size:10.61px;color:#eee;transform:scaleX(1.0230);transform-origin:0 0;">Direct Display Control</div>
<div class="a" style="left:1830.5px;top:63.5px;width:19px;height:19px;border-radius:50%;background:linear-gradient(#474747,#6a6a6a)"></div>
<svg class="a" style="left:1835px;top:71px" width="10" height="6"><path d="M0 0h10L5 5z" fill="#fff"/></svg>
<div class="a" style="left:1859px;top:58px;width:33px;height:28px;background:linear-gradient(#8e8e8e,#707070 50%,#5e5e5e);border:1.5px solid #e0e0e0;border-radius:5px"></div>
<div class="a" style="left:1866.5px;top:62.5px;width:19px;height:19px;border-radius:50%;background:linear-gradient(#555,#8a8a8a)"></div>
<svg class="a" style="left:1866px;top:62px" width="20" height="20" viewBox="-10 -10 20 20"><g fill="#dedede"><circle r="4.9"/><rect x="-1.3" y="-6.6" width="2.6" height="2.6" transform="rotate(0)"/><rect x="-1.3" y="-6.6" width="2.6" height="2.6" transform="rotate(45)"/><rect x="-1.3" y="-6.6" width="2.6" height="2.6" transform="rotate(90)"/><rect x="-1.3" y="-6.6" width="2.6" height="2.6" transform="rotate(135)"/><rect x="-1.3" y="-6.6" width="2.6" height="2.6" transform="rotate(180)"/><rect x="-1.3" y="-6.6" width="2.6" height="2.6" transform="rotate(225)"/><rect x="-1.3" y="-6.6" width="2.6" height="2.6" transform="rotate(270)"/><rect x="-1.3" y="-6.6" width="2.6" height="2.6" transform="rotate(315)"/></g><circle r="2.7" fill="#6a6a6a"/></svg>
<div class="a" style="left:1893px;top:58px;width:27px;height:28px;background:linear-gradient(#8e8e8e,#707070 50%,#5e5e5e);border:1.5px solid #e0e0e0;border-right:none;border-radius:5px 0 0 5px"></div>
<div class="a" style="left:1897.5px;top:62.5px;width:19px;height:19px;border-radius:50%;background:linear-gradient(#555,#8a8a8a)"></div>
<svg class="a" style="left:1903px;top:66px" width="8" height="11"><path d="M6.5 0.5V10.5L0.5 5.5z" fill="#fff"/></svg>
<svg class="a" style="left:1520px;top:940px" width="400" height="110" viewBox="0 0 400 110"><g fill="none" stroke-linejoin="round" stroke-linecap="round"><path d="M15.3 27.7 L66.7 38 L68.9 68.4 L103.6 75.7 L47.9 93.7 L17.9 75.7 Z M20 32.9 L26.4 71.4 L68.9 68.4" stroke="#e8e8e8" stroke-opacity=".75" stroke-width="7"/><path d="M15.3 27.7 L66.7 38 L68.9 68.4 L103.6 75.7 L47.9 93.7 L17.9 75.7 Z M20 32.9 L26.4 71.4 L68.9 68.4" stroke="#a83c48" stroke-opacity=".85" stroke-width="4"/><path d="M29.9 44.9 L44.4 64.6 L72.7 26.9" stroke="#e8e8e8" stroke-opacity=".75" stroke-width="6"/><path d="M29.9 44.9 L44.4 64.6 L72.7 26.9" stroke="#3c3c3c" stroke-opacity=".9" stroke-width="3"/></g><g transform="translate(76,67) scale(0.935,1)" font-family="Liberation Sans" font-weight="bold" font-size="36"><text x="0" y="0" fill="#9c3440" fill-opacity=".75" stroke="#ddd" stroke-opacity=".75" stroke-width="2.5" paint-order="stroke">NOTEBOOK</text><text x="208" y="0" fill="#222" fill-opacity=".6" stroke="#ddd" stroke-opacity=".75" stroke-width="2.5" paint-order="stroke">CHECK</text></g></svg></body></html>
